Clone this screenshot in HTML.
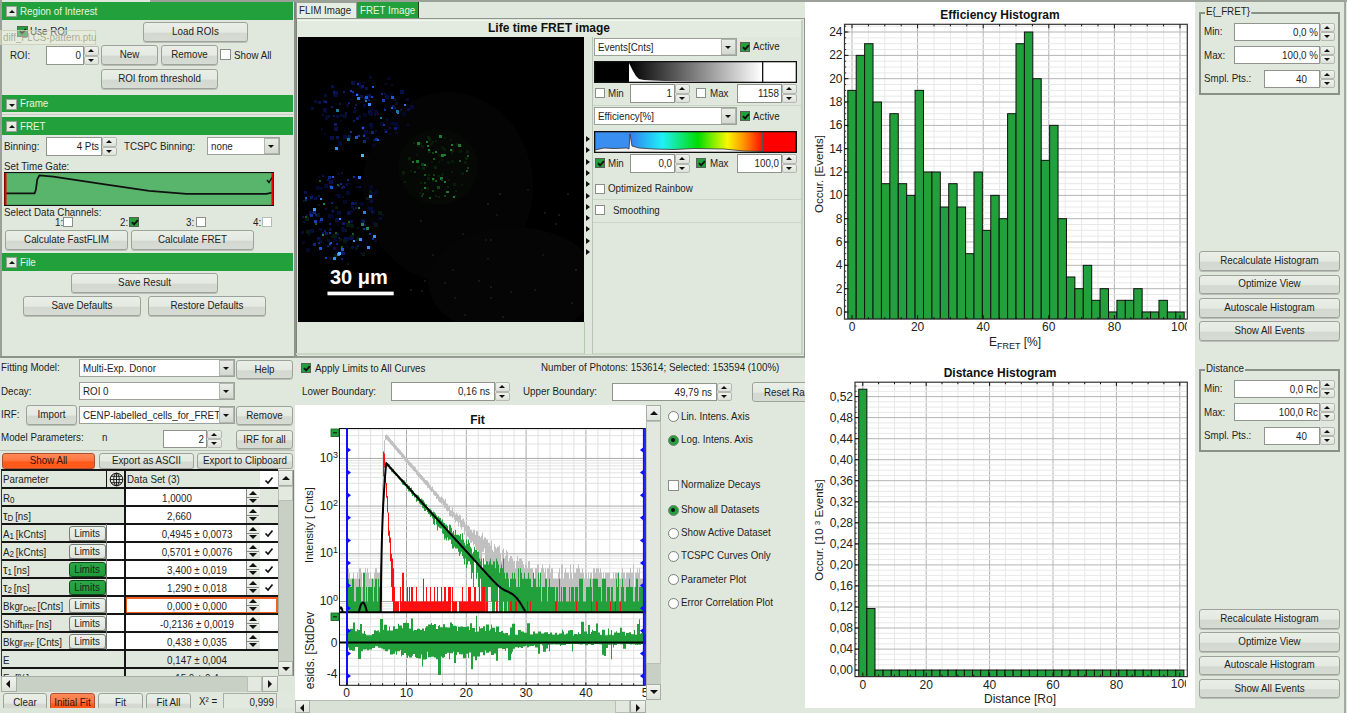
<!DOCTYPE html>
<html><head><meta charset="utf-8"><style>
html,body{margin:0;padding:0;}
body{width:1347px;height:713px;position:relative;overflow:hidden;background:#e0e8dd;font-family:"Liberation Sans", sans-serif;color:#1e1e1e;}
</style></head><body>
<div style="position:absolute;left:0px;top:0px;width:294px;height:358px;background:#e0e8dd;"></div>
<div style="position:absolute;left:0px;top:0px;width:2px;height:358px;background:#9aa098;"></div>
<div style="position:absolute;left:0px;top:356px;width:294px;height:2px;background:#8c928a;"></div>
<div style="position:absolute;left:2px;top:2px;width:291px;height:18px;background:#21a03b;"></div>
<div style="position:absolute;left:6px;top:6px;width:9px;height:9px;background:#e4ebe1;border:1px solid #9aa098;"></div>
<div style="position:absolute;left:8.5px;top:9.5px;width:0;height:0;border-left:3px solid transparent;border-right:3px solid transparent;border-bottom:3px solid #111;"></div>
<div style="position:absolute;left:20px;top:3.50px;height:15px;line-height:15px;font-size:11px;white-space:nowrap;transform-origin:0 0;transform:scaleX(0.89);color:#e8f5e0;">Region of Interest</div>
<div style="position:absolute;left:17px;top:26px;width:11px;height:11px;background:#22a03b;border:1px solid #5a6058;box-sizing:border-box;"><svg width="11" height="11" style="position:absolute;left:0;top:0"><path d="M2.0 4.1 L4.1 6.4 L7.9 2.1" stroke="#111" stroke-width="1.9" fill="none"/></svg></div>
<div style="position:absolute;left:30px;top:24.00px;height:15px;line-height:15px;font-size:11px;white-space:nowrap;transform-origin:0 0;transform:scaleX(0.89);">Use ROI</div>
<div style="position:absolute;left:143px;top:22px;width:103px;height:18px;border:1px solid #9da39b;border-radius:3px;background:linear-gradient(#e9eee7 0%,#e4e9e2 50%,#d3d9d1 58%,#d6dcd4 100%);box-shadow:0 1px 0 #b9bfb7;"></div>
<div style="position:absolute;left:133.00px;top:24.00px;width:125px;text-align:center;height:15px;line-height:15px;font-size:11px;white-space:nowrap;transform-origin:50% 0;transform:scaleX(0.89);color:#1e1e1e;">Load ROIs</div>
<div style="position:absolute;left:10px;top:47.50px;height:15px;line-height:15px;font-size:11px;white-space:nowrap;transform-origin:0 0;transform:scaleX(0.89);">ROI:</div>
<div style="position:absolute;left:46px;top:46px;width:36px;height:17px;border:1px solid #8f958d;background:#fff;"></div>
<div style="position:absolute;left:43.00px;top:48.00px;width:38px;text-align:right;height:15px;line-height:15px;font-size:11px;white-space:nowrap;transform-origin:100% 0;transform:scaleX(0.89);">0</div>
<div style="position:absolute;left:84px;top:46.0px;width:13px;height:7.5px;border:1px solid #b3b9b1;border-radius:2px;background:linear-gradient(#f0f3ee,#dce2da);"></div>
<div style="position:absolute;left:88.0px;top:48.8px;width:0;height:0;border-left:3.5px solid transparent;border-right:3.5px solid transparent;border-bottom:3.5px solid #111;"></div>
<div style="position:absolute;left:84px;top:55.5px;width:13px;height:7.5px;border:1px solid #b3b9b1;border-radius:2px;background:linear-gradient(#f0f3ee,#dce2da);"></div>
<div style="position:absolute;left:88.0px;top:58.8px;width:0;height:0;border-left:3.5px solid transparent;border-right:3.5px solid transparent;border-top:3.5px solid #111;"></div>
<div style="position:absolute;left:101px;top:45px;width:55px;height:18px;border:1px solid #9da39b;border-radius:3px;background:linear-gradient(#e9eee7 0%,#e4e9e2 50%,#d3d9d1 58%,#d6dcd4 100%);box-shadow:0 1px 0 #b9bfb7;"></div>
<div style="position:absolute;left:91.00px;top:47.00px;width:77px;text-align:center;height:15px;line-height:15px;font-size:11px;white-space:nowrap;transform-origin:50% 0;transform:scaleX(0.89);color:#1e1e1e;">New</div>
<div style="position:absolute;left:161px;top:45px;width:55px;height:18px;border:1px solid #9da39b;border-radius:3px;background:linear-gradient(#e9eee7 0%,#e4e9e2 50%,#d3d9d1 58%,#d6dcd4 100%);box-shadow:0 1px 0 #b9bfb7;"></div>
<div style="position:absolute;left:151.00px;top:47.00px;width:77px;text-align:center;height:15px;line-height:15px;font-size:11px;white-space:nowrap;transform-origin:50% 0;transform:scaleX(0.89);color:#1e1e1e;">Remove</div>
<div style="position:absolute;left:220px;top:49px;width:11px;height:11px;background:#fff;border:1px solid #8a9088;box-sizing:border-box;"></div>
<div style="position:absolute;left:234px;top:47.50px;height:15px;line-height:15px;font-size:11px;white-space:nowrap;transform-origin:0 0;transform:scaleX(0.89);">Show All</div>
<div style="position:absolute;left:101px;top:69px;width:115px;height:18px;border:1px solid #9da39b;border-radius:3px;background:linear-gradient(#e9eee7 0%,#e4e9e2 50%,#d3d9d1 58%,#d6dcd4 100%);box-shadow:0 1px 0 #b9bfb7;"></div>
<div style="position:absolute;left:91.00px;top:71.00px;width:137px;text-align:center;height:15px;line-height:15px;font-size:11px;white-space:nowrap;transform-origin:50% 0;transform:scaleX(0.89);color:#1e1e1e;">ROI from threshold</div>
<div style="position:absolute;left:0px;top:30px;width:96px;height:15px;background:rgba(238,240,222,0.4);border:1px solid rgba(205,205,180,0.8);box-sizing:border-box;"></div>
<div style="position:absolute;left:3px;top:30.00px;height:15px;line-height:15px;font-size:11px;white-space:nowrap;transform-origin:0 0;transform:scaleX(0.89);color:rgba(150,150,130,0.75);">diff_FLCS-pattern.ptu</div>
<div style="position:absolute;left:2px;top:95px;width:291px;height:17px;background:#21a03b;"></div>
<div style="position:absolute;left:6px;top:99px;width:9px;height:9px;background:#e4ebe1;border:1px solid #9aa098;"></div>
<div style="position:absolute;left:8.5px;top:103.5px;width:0;height:0;border-left:3px solid transparent;border-right:3px solid transparent;border-top:3px solid #111;"></div>
<div style="position:absolute;left:20px;top:96.00px;height:15px;line-height:15px;font-size:11px;white-space:nowrap;transform-origin:0 0;transform:scaleX(0.89);color:#e8f5e0;">Frame</div>
<div style="position:absolute;left:2px;top:114px;width:291px;height:1px;background:#c8d0c5;"></div>
<div style="position:absolute;left:2px;top:117px;width:291px;height:18px;background:#21a03b;"></div>
<div style="position:absolute;left:6px;top:121px;width:9px;height:9px;background:#e4ebe1;border:1px solid #9aa098;"></div>
<div style="position:absolute;left:8.5px;top:124.5px;width:0;height:0;border-left:3px solid transparent;border-right:3px solid transparent;border-bottom:3px solid #111;"></div>
<div style="position:absolute;left:20px;top:118.50px;height:15px;line-height:15px;font-size:11px;white-space:nowrap;transform-origin:0 0;transform:scaleX(0.89);color:#e8f5e0;">FRET</div>
<div style="position:absolute;left:4px;top:138.50px;height:15px;line-height:15px;font-size:11px;white-space:nowrap;transform-origin:0 0;transform:scaleX(0.89);">Binning:</div>
<div style="position:absolute;left:46px;top:137px;width:54px;height:17px;border:1px solid #8f958d;background:#fff;"></div>
<div style="position:absolute;left:43.00px;top:139.00px;width:56px;text-align:right;height:15px;line-height:15px;font-size:11px;white-space:nowrap;transform-origin:100% 0;transform:scaleX(0.89);">4 Pts</div>
<div style="position:absolute;left:102px;top:137.0px;width:13px;height:7.5px;border:1px solid #b3b9b1;border-radius:2px;background:linear-gradient(#f0f3ee,#dce2da);"></div>
<div style="position:absolute;left:106.0px;top:139.8px;width:0;height:0;border-left:3.5px solid transparent;border-right:3.5px solid transparent;border-bottom:3.5px solid #111;"></div>
<div style="position:absolute;left:102px;top:146.5px;width:13px;height:7.5px;border:1px solid #b3b9b1;border-radius:2px;background:linear-gradient(#f0f3ee,#dce2da);"></div>
<div style="position:absolute;left:106.0px;top:149.8px;width:0;height:0;border-left:3.5px solid transparent;border-right:3.5px solid transparent;border-top:3.5px solid #111;"></div>
<div style="position:absolute;left:124px;top:138.50px;height:15px;line-height:15px;font-size:11px;white-space:nowrap;transform-origin:0 0;transform:scaleX(0.89);">TCSPC Binning:</div>
<div style="position:absolute;left:207px;top:137px;width:71px;height:16px;border:1px solid #9ca29a;background:#fff;"></div>
<div style="position:absolute;left:211px;top:138.50px;height:15px;line-height:15px;font-size:11px;white-space:nowrap;transform-origin:0 0;transform:scaleX(0.89);">none</div>
<div style="position:absolute;left:264px;top:138px;width:13px;height:14px;border:1px solid #b0b6ae;background:linear-gradient(#e8ece6,#d3d9d1);"></div>
<div style="position:absolute;left:268.0px;top:145.0px;width:0;height:0;border-left:3.5px solid transparent;border-right:3.5px solid transparent;border-top:3.5px solid #111;"></div>
<div style="position:absolute;left:4px;top:158.50px;height:15px;line-height:15px;font-size:11px;white-space:nowrap;transform-origin:0 0;transform:scaleX(0.89);">Set Time Gate:</div>
<svg style="position:absolute;left:4px;top:172px" width="270" height="34" viewBox="0 0 270 34"><rect x="0.5" y="0.5" width="269" height="33" fill="#5ab56c" stroke="#111" stroke-width="1.2"/><path d="M1.5 21.4 L30.6 21.4 L31.8 18 L33.3 7.3 L35.4 3.3 L49.3 4.7 L102.6 12.7 L145.2 18.8 L182.5 21.8 L262.5 21.8 L267.8 20.6" stroke="#111" stroke-width="1.7" fill="none"/><rect x="0.5" y="1" width="2" height="32" fill="#e00"/><rect x="267.5" y="1" width="2" height="32" fill="#e00"/><path d="M263 8 L265 10.5 L268 5.5" stroke="#111" stroke-width="1.4" fill="none"/></svg>
<div style="position:absolute;left:4px;top:204.50px;height:15px;line-height:15px;font-size:11px;white-space:nowrap;transform-origin:0 0;transform:scaleX(0.89);">Select Data Channels:</div>
<div style="position:absolute;left:55px;top:214.50px;height:15px;line-height:15px;font-size:11px;white-space:nowrap;transform-origin:0 0;transform:scaleX(0.89);">1:</div>
<div style="position:absolute;left:63px;top:217px;width:10px;height:10px;background:#fff;border:1px solid #8a9088;box-sizing:border-box;"></div>
<div style="position:absolute;left:120px;top:214.50px;height:15px;line-height:15px;font-size:11px;white-space:nowrap;transform-origin:0 0;transform:scaleX(0.89);">2:</div>
<div style="position:absolute;left:129px;top:217px;width:10px;height:10px;background:#22a03b;border:1px solid #5a6058;box-sizing:border-box;"><svg width="10" height="10" style="position:absolute;left:0;top:0"><path d="M2.0 4.1 L4.1 6.4 L7.9 2.1" stroke="#111" stroke-width="1.9" fill="none"/></svg></div>
<div style="position:absolute;left:186px;top:214.50px;height:15px;line-height:15px;font-size:11px;white-space:nowrap;transform-origin:0 0;transform:scaleX(0.89);">3:</div>
<div style="position:absolute;left:196px;top:217px;width:10px;height:10px;background:#fff;border:1px solid #8a9088;box-sizing:border-box;"></div>
<div style="position:absolute;left:253px;top:214.50px;height:15px;line-height:15px;font-size:11px;white-space:nowrap;transform-origin:0 0;transform:scaleX(0.89);">4:</div>
<div style="position:absolute;left:262px;top:217px;width:10px;height:10px;background:#fff;border:1px solid #b8beb6;box-sizing:border-box;"></div>
<div style="position:absolute;left:5px;top:230px;width:121px;height:18px;border:1px solid #9da39b;border-radius:3px;background:linear-gradient(#e9eee7 0%,#e4e9e2 50%,#d3d9d1 58%,#d6dcd4 100%);box-shadow:0 1px 0 #b9bfb7;"></div>
<div style="position:absolute;left:-5.00px;top:232.00px;width:143px;text-align:center;height:15px;line-height:15px;font-size:11px;white-space:nowrap;transform-origin:50% 0;transform:scaleX(0.89);color:#1e1e1e;">Calculate FastFLIM</div>
<div style="position:absolute;left:131px;top:230px;width:121px;height:18px;border:1px solid #9da39b;border-radius:3px;background:linear-gradient(#e9eee7 0%,#e4e9e2 50%,#d3d9d1 58%,#d6dcd4 100%);box-shadow:0 1px 0 #b9bfb7;"></div>
<div style="position:absolute;left:121.00px;top:232.00px;width:143px;text-align:center;height:15px;line-height:15px;font-size:11px;white-space:nowrap;transform-origin:50% 0;transform:scaleX(0.89);color:#1e1e1e;">Calculate FRET</div>
<div style="position:absolute;left:2px;top:253px;width:291px;height:18px;background:#21a03b;"></div>
<div style="position:absolute;left:6px;top:257px;width:9px;height:9px;background:#e4ebe1;border:1px solid #9aa098;"></div>
<div style="position:absolute;left:8.5px;top:260.5px;width:0;height:0;border-left:3px solid transparent;border-right:3px solid transparent;border-bottom:3px solid #111;"></div>
<div style="position:absolute;left:20px;top:254.50px;height:15px;line-height:15px;font-size:11px;white-space:nowrap;transform-origin:0 0;transform:scaleX(0.89);color:#e8f5e0;">File</div>
<div style="position:absolute;left:71px;top:273px;width:145px;height:18px;border:1px solid #9da39b;border-radius:3px;background:linear-gradient(#e9eee7 0%,#e4e9e2 50%,#d3d9d1 58%,#d6dcd4 100%);box-shadow:0 1px 0 #b9bfb7;"></div>
<div style="position:absolute;left:61.00px;top:275.00px;width:167px;text-align:center;height:15px;line-height:15px;font-size:11px;white-space:nowrap;transform-origin:50% 0;transform:scaleX(0.89);color:#1e1e1e;">Save Result</div>
<div style="position:absolute;left:23px;top:296px;width:116px;height:18px;border:1px solid #9da39b;border-radius:3px;background:linear-gradient(#e9eee7 0%,#e4e9e2 50%,#d3d9d1 58%,#d6dcd4 100%);box-shadow:0 1px 0 #b9bfb7;"></div>
<div style="position:absolute;left:13.00px;top:298.00px;width:138px;text-align:center;height:15px;line-height:15px;font-size:11px;white-space:nowrap;transform-origin:50% 0;transform:scaleX(0.89);color:#1e1e1e;">Save Defaults</div>
<div style="position:absolute;left:148px;top:296px;width:116px;height:18px;border:1px solid #9da39b;border-radius:3px;background:linear-gradient(#e9eee7 0%,#e4e9e2 50%,#d3d9d1 58%,#d6dcd4 100%);box-shadow:0 1px 0 #b9bfb7;"></div>
<div style="position:absolute;left:138.00px;top:298.00px;width:138px;text-align:center;height:15px;line-height:15px;font-size:11px;white-space:nowrap;transform-origin:50% 0;transform:scaleX(0.89);color:#1e1e1e;">Restore Defaults</div>
<div style="position:absolute;left:294px;top:0px;width:3px;height:358px;background:#7e847c;"></div>
<div style="position:absolute;left:0px;top:358px;width:294px;height:355px;background:#e0e8dd;"></div>
<div style="position:absolute;left:1px;top:360.00px;height:15px;line-height:15px;font-size:11px;white-space:nowrap;transform-origin:0 0;transform:scaleX(0.89);">Fitting Model:</div>
<div style="position:absolute;left:79px;top:359px;width:154px;height:16px;border:1px solid #9ca29a;background:#fff;"></div>
<div style="position:absolute;left:83px;top:360.50px;height:15px;line-height:15px;font-size:11px;white-space:nowrap;transform-origin:0 0;transform:scaleX(0.89);">Multi-Exp. Donor</div>
<div style="position:absolute;left:219px;top:360px;width:13px;height:14px;border:1px solid #b0b6ae;background:linear-gradient(#e8ece6,#d3d9d1);"></div>
<div style="position:absolute;left:223.0px;top:367.0px;width:0;height:0;border-left:3.5px solid transparent;border-right:3.5px solid transparent;border-top:3.5px solid #111;"></div>
<div style="position:absolute;left:236px;top:360px;width:55px;height:17px;border:1px solid #9da39b;border-radius:3px;background:linear-gradient(#e9eee7 0%,#e4e9e2 50%,#d3d9d1 58%,#d6dcd4 100%);box-shadow:0 1px 0 #b9bfb7;"></div>
<div style="position:absolute;left:226.00px;top:361.50px;width:77px;text-align:center;height:15px;line-height:15px;font-size:11px;white-space:nowrap;transform-origin:50% 0;transform:scaleX(0.89);color:#1e1e1e;">Help</div>
<div style="position:absolute;left:1px;top:383.50px;height:15px;line-height:15px;font-size:11px;white-space:nowrap;transform-origin:0 0;transform:scaleX(0.89);">Decay:</div>
<div style="position:absolute;left:79px;top:382px;width:154px;height:16px;border:1px solid #9ca29a;background:#fff;"></div>
<div style="position:absolute;left:83px;top:383.50px;height:15px;line-height:15px;font-size:11px;white-space:nowrap;transform-origin:0 0;transform:scaleX(0.89);">ROI 0</div>
<div style="position:absolute;left:219px;top:383px;width:13px;height:14px;border:1px solid #b0b6ae;background:linear-gradient(#e8ece6,#d3d9d1);"></div>
<div style="position:absolute;left:223.0px;top:390.0px;width:0;height:0;border-left:3.5px solid transparent;border-right:3.5px solid transparent;border-top:3.5px solid #111;"></div>
<div style="position:absolute;left:1px;top:407.00px;height:15px;line-height:15px;font-size:11px;white-space:nowrap;transform-origin:0 0;transform:scaleX(0.89);">IRF:</div>
<div style="position:absolute;left:26px;top:405px;width:49px;height:18px;border:1px solid #9da39b;border-radius:3px;background:linear-gradient(#e9eee7 0%,#e4e9e2 50%,#d3d9d1 58%,#d6dcd4 100%);box-shadow:0 1px 0 #b9bfb7;"></div>
<div style="position:absolute;left:16.00px;top:407.00px;width:71px;text-align:center;height:15px;line-height:15px;font-size:11px;white-space:nowrap;transform-origin:50% 0;transform:scaleX(0.89);color:#1e1e1e;">Import</div>
<div style="position:absolute;left:79px;top:406px;width:154px;height:16px;border:1px solid #9ca29a;background:#fff;"></div>
<div style="position:absolute;left:83px;top:407.50px;height:15px;line-height:15px;font-size:11px;white-space:nowrap;transform-origin:0 0;transform:scaleX(0.89);">CENP-labelled_cells_for_FRET_</div>
<div style="position:absolute;left:219px;top:407px;width:13px;height:14px;border:1px solid #b0b6ae;background:linear-gradient(#e8ece6,#d3d9d1);"></div>
<div style="position:absolute;left:223.0px;top:414.0px;width:0;height:0;border-left:3.5px solid transparent;border-right:3.5px solid transparent;border-top:3.5px solid #111;"></div>
<div style="position:absolute;left:236px;top:406px;width:55px;height:17px;border:1px solid #9da39b;border-radius:3px;background:linear-gradient(#e9eee7 0%,#e4e9e2 50%,#d3d9d1 58%,#d6dcd4 100%);box-shadow:0 1px 0 #b9bfb7;"></div>
<div style="position:absolute;left:226.00px;top:407.50px;width:77px;text-align:center;height:15px;line-height:15px;font-size:11px;white-space:nowrap;transform-origin:50% 0;transform:scaleX(0.89);color:#1e1e1e;">Remove</div>
<div style="position:absolute;left:1px;top:430.00px;height:15px;line-height:15px;font-size:11px;white-space:nowrap;transform-origin:0 0;transform:scaleX(0.89);">Model Parameters:</div>
<div style="position:absolute;left:102px;top:430.00px;height:15px;line-height:15px;font-size:11px;white-space:nowrap;transform-origin:0 0;transform:scaleX(0.89);">n</div>
<div style="position:absolute;left:163px;top:430px;width:42px;height:16px;border:1px solid #8f958d;background:#fff;"></div>
<div style="position:absolute;left:160.00px;top:431.50px;width:44px;text-align:right;height:15px;line-height:15px;font-size:11px;white-space:nowrap;transform-origin:100% 0;transform:scaleX(0.89);">2</div>
<div style="position:absolute;left:207px;top:430.0px;width:13px;height:7.0px;border:1px solid #b3b9b1;border-radius:2px;background:linear-gradient(#f0f3ee,#dce2da);"></div>
<div style="position:absolute;left:211.0px;top:432.5px;width:0;height:0;border-left:3.5px solid transparent;border-right:3.5px solid transparent;border-bottom:3.5px solid #111;"></div>
<div style="position:absolute;left:207px;top:439.0px;width:13px;height:7.0px;border:1px solid #b3b9b1;border-radius:2px;background:linear-gradient(#f0f3ee,#dce2da);"></div>
<div style="position:absolute;left:211.0px;top:442.0px;width:0;height:0;border-left:3.5px solid transparent;border-right:3.5px solid transparent;border-top:3.5px solid #111;"></div>
<div style="position:absolute;left:236px;top:430px;width:55px;height:17px;border:1px solid #9da39b;border-radius:3px;background:linear-gradient(#e9eee7 0%,#e4e9e2 50%,#d3d9d1 58%,#d6dcd4 100%);box-shadow:0 1px 0 #b9bfb7;"></div>
<div style="position:absolute;left:226.00px;top:431.50px;width:77px;text-align:center;height:15px;line-height:15px;font-size:11px;white-space:nowrap;transform-origin:50% 0;transform:scaleX(0.89);color:#1e1e1e;">IRF for all</div>
<div style="position:absolute;left:0px;top:450px;width:294px;height:1px;background:#b9c0b6;"></div>
<div style="position:absolute;left:2px;top:453px;width:91px;height:14px;border:1px solid #b05030;border-radius:3px;background:linear-gradient(#ff8a5a 0%,#ff7440 50%,#ff5a1a 55%,#ff5a1a 100%);box-shadow:0 1px 0 #b9bfb7;"></div>
<div style="position:absolute;left:-8.00px;top:453.00px;width:113px;text-align:center;height:15px;line-height:15px;font-size:11px;white-space:nowrap;transform-origin:50% 0;transform:scaleX(0.89);color:#3a1000;">Show All</div>
<div style="position:absolute;left:99px;top:453px;width:93px;height:14px;border:1px solid #9da39b;border-radius:3px;background:linear-gradient(#e9eee7 0%,#e4e9e2 50%,#d3d9d1 58%,#d6dcd4 100%);box-shadow:0 1px 0 #b9bfb7;"></div>
<div style="position:absolute;left:89.00px;top:453.00px;width:115px;text-align:center;height:15px;line-height:15px;font-size:11px;white-space:nowrap;transform-origin:50% 0;transform:scaleX(0.89);color:#1e1e1e;">Export as ASCII</div>
<div style="position:absolute;left:197px;top:453px;width:94px;height:14px;border:1px solid #9da39b;border-radius:3px;background:linear-gradient(#e9eee7 0%,#e4e9e2 50%,#d3d9d1 58%,#d6dcd4 100%);box-shadow:0 1px 0 #b9bfb7;"></div>
<div style="position:absolute;left:187.00px;top:453.00px;width:116px;text-align:center;height:15px;line-height:15px;font-size:11px;white-space:nowrap;transform-origin:50% 0;transform:scaleX(0.89);color:#1e1e1e;">Export to Clipboard</div>
<div style="position:absolute;left:0px;top:469px;width:294px;height:244px;background:#e0e8dd;"></div>
<div style="position:absolute;left:0;top:469px;width:278px;height:207px;overflow:hidden;">
<div style="position:absolute;left:1px;top:1px;width:277px;height:18px;background:#e0e8dd;"></div>
<div style="position:absolute;left:3px;top:3.0px;height:15px;line-height:15px;font-size:11px;white-space:nowrap;transform-origin:0 0;transform:scaleX(0.89);">Parameter</div>
<div style="position:absolute;left:260px;top:2px;width:18px;height:16px;background:#fff;"></div>
<svg style="position:absolute;left:109px;top:3px" width="15" height="15" viewBox="0 0 15 15"><circle cx="7.5" cy="7.5" r="6.3" fill="none" stroke="#111" stroke-width="1"/><ellipse cx="7.5" cy="7.5" rx="2.8" ry="6.3" fill="none" stroke="#111" stroke-width="0.9"/><path d="M1.2 7.5 H13.8 M2.2 4.3 H12.8 M2.2 10.7 H12.8 M7.5 1.2 V13.8" stroke="#111" stroke-width="0.9"/></svg>
<div style="position:absolute;left:127px;top:3.0px;height:15px;line-height:15px;font-size:11px;white-space:nowrap;transform-origin:0 0;transform:scaleX(0.89);">Data Set (3)</div>
<svg style="position:absolute;left:264px;top:7px" width="10" height="9"><path d="M1.5 4.5 L4 7 L8.5 1.5" stroke="#111" stroke-width="1.7" fill="none"/></svg>
<div style="position:absolute;left:1px;top:19.0px;width:124px;height:18.0px;background:#e0e8dd;"></div>
<div style="position:absolute;left:125px;top:19.0px;width:135px;height:18.0px;background:#fff;"></div>
<div style="position:absolute;left:260px;top:19.0px;width:18px;height:18.0px;background:#e0e8dd;"></div>
<div style="position:absolute;left:3px;top:21.5px;height:15px;line-height:15px;font-size:11px;white-space:nowrap;transform-origin:0 0;transform:scaleX(0.89);">R<span style="font-size:9px;position:relative;top:1px;margin-right:2px;">0</span></div>
<div style="position:absolute;left:162px;top:21.5px;height:15px;line-height:15px;font-size:11px;white-space:nowrap;transform-origin:0 0;transform:scaleX(0.89);">1,0000</div>
<div style="position:absolute;left:246px;top:20.0px;width:13px;height:16px;background:linear-gradient(#f2f5f0,#dfe5dc);border-left:1px solid #888;"></div>
<div style="position:absolute;left:249px;top:22.0px;width:0;height:0;border-left:4px solid transparent;border-right:4px solid transparent;border-bottom:4px solid #111;"></div>
<div style="position:absolute;left:247px;top:27.5px;width:12px;height:1px;background:#888;"></div>
<div style="position:absolute;left:249px;top:30.0px;width:0;height:0;border-left:4px solid transparent;border-right:4px solid transparent;border-top:4px solid #111;"></div>
<div style="position:absolute;left:1px;top:37.0px;width:124px;height:18.0px;background:#e0e8dd;"></div>
<div style="position:absolute;left:125px;top:37.0px;width:135px;height:18.0px;background:#fff;"></div>
<div style="position:absolute;left:260px;top:37.0px;width:18px;height:18.0px;background:#e0e8dd;"></div>
<div style="position:absolute;left:3px;top:39.5px;height:15px;line-height:15px;font-size:11px;white-space:nowrap;transform-origin:0 0;transform:scaleX(0.89);"><span style="font-size:13px;line-height:10px;">τ</span><span style="font-size:9px;position:relative;top:1px;margin-right:2px;">D</span>[ns]</div>
<div style="position:absolute;left:167px;top:39.5px;height:15px;line-height:15px;font-size:11px;white-space:nowrap;transform-origin:0 0;transform:scaleX(0.89);">2,660</div>
<div style="position:absolute;left:246px;top:38.0px;width:13px;height:16px;background:linear-gradient(#f2f5f0,#dfe5dc);border-left:1px solid #888;"></div>
<div style="position:absolute;left:249px;top:40.0px;width:0;height:0;border-left:4px solid transparent;border-right:4px solid transparent;border-bottom:4px solid #111;"></div>
<div style="position:absolute;left:247px;top:45.5px;width:12px;height:1px;background:#888;"></div>
<div style="position:absolute;left:249px;top:48.0px;width:0;height:0;border-left:4px solid transparent;border-right:4px solid transparent;border-top:4px solid #111;"></div>
<div style="position:absolute;left:1px;top:55.0px;width:106px;height:18.0px;background:#e0e8dd;"></div>
<div style="position:absolute;left:107px;top:55.0px;width:18px;height:18.0px;background:#fff;"></div>
<div style="position:absolute;left:125px;top:55.0px;width:135px;height:18.0px;background:#fff;"></div>
<div style="position:absolute;left:260px;top:55.0px;width:18px;height:18.0px;background:#fff;"></div>
<div style="position:absolute;left:3px;top:57.5px;height:15px;line-height:15px;font-size:11px;white-space:nowrap;transform-origin:0 0;transform:scaleX(0.89);">A<span style="font-size:9px;position:relative;top:1px;margin-right:2px;">1</span>[kCnts]</div>
<div style="position:absolute;left:69px;top:57.0px;width:35px;height:13px;border:1px solid #777d75;border-radius:3px;background:linear-gradient(#eef2ec,#dde3db);box-shadow:0 1px 0 #555;"></div>
<div style="position:absolute;left:67.0px;width:40px;text-align:center;top:56.5px;height:15px;line-height:15px;font-size:11px;white-space:nowrap;transform-origin:50% 0;transform:scaleX(0.89);">Limits</div>
<div style="position:absolute;left:136.5px;width:120px;text-align:center;top:57.5px;height:15px;line-height:15px;font-size:11px;white-space:nowrap;transform-origin:50% 0;transform:scaleX(0.89);">0,4945 ± 0,0073</div>
<div style="position:absolute;left:246px;top:56.0px;width:13px;height:16px;background:linear-gradient(#f2f5f0,#dfe5dc);border-left:1px solid #888;"></div>
<div style="position:absolute;left:249px;top:58.0px;width:0;height:0;border-left:4px solid transparent;border-right:4px solid transparent;border-bottom:4px solid #111;"></div>
<div style="position:absolute;left:247px;top:63.5px;width:12px;height:1px;background:#888;"></div>
<div style="position:absolute;left:249px;top:66.0px;width:0;height:0;border-left:4px solid transparent;border-right:4px solid transparent;border-top:4px solid #111;"></div>
<svg style="position:absolute;left:264px;top:60.0px" width="10" height="9"><path d="M1.5 4.5 L4 7 L8.5 1.5" stroke="#111" stroke-width="1.7" fill="none"/></svg>
<div style="position:absolute;left:1px;top:73.0px;width:106px;height:18.0px;background:#e0e8dd;"></div>
<div style="position:absolute;left:107px;top:73.0px;width:18px;height:18.0px;background:#fff;"></div>
<div style="position:absolute;left:125px;top:73.0px;width:135px;height:18.0px;background:#fff;"></div>
<div style="position:absolute;left:260px;top:73.0px;width:18px;height:18.0px;background:#fff;"></div>
<div style="position:absolute;left:3px;top:75.5px;height:15px;line-height:15px;font-size:11px;white-space:nowrap;transform-origin:0 0;transform:scaleX(0.89);">A<span style="font-size:9px;position:relative;top:1px;margin-right:2px;">2</span>[kCnts]</div>
<div style="position:absolute;left:69px;top:75.0px;width:35px;height:13px;border:1px solid #777d75;border-radius:3px;background:linear-gradient(#eef2ec,#dde3db);box-shadow:0 1px 0 #555;"></div>
<div style="position:absolute;left:67.0px;width:40px;text-align:center;top:74.5px;height:15px;line-height:15px;font-size:11px;white-space:nowrap;transform-origin:50% 0;transform:scaleX(0.89);">Limits</div>
<div style="position:absolute;left:136.5px;width:120px;text-align:center;top:75.5px;height:15px;line-height:15px;font-size:11px;white-space:nowrap;transform-origin:50% 0;transform:scaleX(0.89);">0,5701 ± 0,0076</div>
<div style="position:absolute;left:246px;top:74.0px;width:13px;height:16px;background:linear-gradient(#f2f5f0,#dfe5dc);border-left:1px solid #888;"></div>
<div style="position:absolute;left:249px;top:76.0px;width:0;height:0;border-left:4px solid transparent;border-right:4px solid transparent;border-bottom:4px solid #111;"></div>
<div style="position:absolute;left:247px;top:81.5px;width:12px;height:1px;background:#888;"></div>
<div style="position:absolute;left:249px;top:84.0px;width:0;height:0;border-left:4px solid transparent;border-right:4px solid transparent;border-top:4px solid #111;"></div>
<svg style="position:absolute;left:264px;top:78.0px" width="10" height="9"><path d="M1.5 4.5 L4 7 L8.5 1.5" stroke="#111" stroke-width="1.7" fill="none"/></svg>
<div style="position:absolute;left:1px;top:91.0px;width:106px;height:18.0px;background:#e0e8dd;"></div>
<div style="position:absolute;left:107px;top:91.0px;width:18px;height:18.0px;background:#fff;"></div>
<div style="position:absolute;left:125px;top:91.0px;width:135px;height:18.0px;background:#fff;"></div>
<div style="position:absolute;left:260px;top:91.0px;width:18px;height:18.0px;background:#fff;"></div>
<div style="position:absolute;left:3px;top:93.5px;height:15px;line-height:15px;font-size:11px;white-space:nowrap;transform-origin:0 0;transform:scaleX(0.89);"><span style="font-size:13px;line-height:10px;">τ</span><span style="font-size:9px;position:relative;top:1px;margin-right:2px;">1</span>[ns]</div>
<div style="position:absolute;left:69px;top:93.0px;width:35px;height:13px;border:1px solid #0f4a1c;border-radius:3px;background:linear-gradient(#2aa845,#1f9a38);box-shadow:0 1px 0 #555;"></div>
<div style="position:absolute;left:67.0px;width:40px;text-align:center;top:92.5px;height:15px;line-height:15px;font-size:11px;white-space:nowrap;transform-origin:50% 0;transform:scaleX(0.89);">Limits</div>
<div style="position:absolute;left:136.5px;width:120px;text-align:center;top:93.5px;height:15px;line-height:15px;font-size:11px;white-space:nowrap;transform-origin:50% 0;transform:scaleX(0.89);">3,400 ± 0,019</div>
<div style="position:absolute;left:246px;top:92.0px;width:13px;height:16px;background:linear-gradient(#f2f5f0,#dfe5dc);border-left:1px solid #888;"></div>
<div style="position:absolute;left:249px;top:94.0px;width:0;height:0;border-left:4px solid transparent;border-right:4px solid transparent;border-bottom:4px solid #111;"></div>
<div style="position:absolute;left:247px;top:99.5px;width:12px;height:1px;background:#888;"></div>
<div style="position:absolute;left:249px;top:102.0px;width:0;height:0;border-left:4px solid transparent;border-right:4px solid transparent;border-top:4px solid #111;"></div>
<svg style="position:absolute;left:264px;top:96.0px" width="10" height="9"><path d="M1.5 4.5 L4 7 L8.5 1.5" stroke="#111" stroke-width="1.7" fill="none"/></svg>
<div style="position:absolute;left:1px;top:109.0px;width:106px;height:18.0px;background:#e0e8dd;"></div>
<div style="position:absolute;left:107px;top:109.0px;width:18px;height:18.0px;background:#fff;"></div>
<div style="position:absolute;left:125px;top:109.0px;width:135px;height:18.0px;background:#fff;"></div>
<div style="position:absolute;left:260px;top:109.0px;width:18px;height:18.0px;background:#fff;"></div>
<div style="position:absolute;left:3px;top:111.5px;height:15px;line-height:15px;font-size:11px;white-space:nowrap;transform-origin:0 0;transform:scaleX(0.89);"><span style="font-size:13px;line-height:10px;">τ</span><span style="font-size:9px;position:relative;top:1px;margin-right:2px;">2</span>[ns]</div>
<div style="position:absolute;left:69px;top:111.0px;width:35px;height:13px;border:1px solid #0f4a1c;border-radius:3px;background:linear-gradient(#2aa845,#1f9a38);box-shadow:0 1px 0 #555;"></div>
<div style="position:absolute;left:67.0px;width:40px;text-align:center;top:110.5px;height:15px;line-height:15px;font-size:11px;white-space:nowrap;transform-origin:50% 0;transform:scaleX(0.89);">Limits</div>
<div style="position:absolute;left:136.5px;width:120px;text-align:center;top:111.5px;height:15px;line-height:15px;font-size:11px;white-space:nowrap;transform-origin:50% 0;transform:scaleX(0.89);">1,290 ± 0,018</div>
<div style="position:absolute;left:246px;top:110.0px;width:13px;height:16px;background:linear-gradient(#f2f5f0,#dfe5dc);border-left:1px solid #888;"></div>
<div style="position:absolute;left:249px;top:112.0px;width:0;height:0;border-left:4px solid transparent;border-right:4px solid transparent;border-bottom:4px solid #111;"></div>
<div style="position:absolute;left:247px;top:117.5px;width:12px;height:1px;background:#888;"></div>
<div style="position:absolute;left:249px;top:120.0px;width:0;height:0;border-left:4px solid transparent;border-right:4px solid transparent;border-top:4px solid #111;"></div>
<svg style="position:absolute;left:264px;top:114.0px" width="10" height="9"><path d="M1.5 4.5 L4 7 L8.5 1.5" stroke="#111" stroke-width="1.7" fill="none"/></svg>
<div style="position:absolute;left:1px;top:127.0px;width:106px;height:18.0px;background:#e0e8dd;"></div>
<div style="position:absolute;left:107px;top:127.0px;width:18px;height:18.0px;background:#fff;"></div>
<div style="position:absolute;left:125px;top:127.0px;width:135px;height:18.0px;background:#fff;"></div>
<div style="position:absolute;left:260px;top:127.0px;width:18px;height:18.0px;background:#fff;"></div>
<div style="position:absolute;left:3px;top:129.5px;height:15px;line-height:15px;font-size:11px;white-space:nowrap;transform-origin:0 0;transform:scaleX(0.89);">Bkgr<span style="font-size:8px;position:relative;top:1px;margin-right:2px;">Dec</span>[Cnts]</div>
<div style="position:absolute;left:69px;top:129.0px;width:35px;height:13px;border:1px solid #777d75;border-radius:3px;background:linear-gradient(#eef2ec,#dde3db);box-shadow:0 1px 0 #555;"></div>
<div style="position:absolute;left:67.0px;width:40px;text-align:center;top:128.5px;height:15px;line-height:15px;font-size:11px;white-space:nowrap;transform-origin:50% 0;transform:scaleX(0.89);">Limits</div>
<div style="position:absolute;left:136.5px;width:120px;text-align:center;top:129.5px;height:15px;line-height:15px;font-size:11px;white-space:nowrap;transform-origin:50% 0;transform:scaleX(0.89);">0,000 ± 0,000</div>
<div style="position:absolute;left:246px;top:128.0px;width:13px;height:16px;background:linear-gradient(#f2f5f0,#dfe5dc);border-left:1px solid #888;"></div>
<div style="position:absolute;left:249px;top:130.0px;width:0;height:0;border-left:4px solid transparent;border-right:4px solid transparent;border-bottom:4px solid #111;"></div>
<div style="position:absolute;left:247px;top:135.5px;width:12px;height:1px;background:#888;"></div>
<div style="position:absolute;left:249px;top:138.0px;width:0;height:0;border-left:4px solid transparent;border-right:4px solid transparent;border-top:4px solid #111;"></div>
<div style="position:absolute;left:125px;top:127.5px;width:153px;height:17.0px;border:2px solid #f06020;box-sizing:border-box;"></div>
<div style="position:absolute;left:1px;top:145.0px;width:106px;height:18.0px;background:#e0e8dd;"></div>
<div style="position:absolute;left:107px;top:145.0px;width:18px;height:18.0px;background:#fff;"></div>
<div style="position:absolute;left:125px;top:145.0px;width:135px;height:18.0px;background:#fff;"></div>
<div style="position:absolute;left:260px;top:145.0px;width:18px;height:18.0px;background:#fff;"></div>
<div style="position:absolute;left:3px;top:147.5px;height:15px;line-height:15px;font-size:11px;white-space:nowrap;transform-origin:0 0;transform:scaleX(0.89);">Shift<span style="font-size:8px;position:relative;top:1px;margin-right:2px;">IRF</span>[ns]</div>
<div style="position:absolute;left:69px;top:147.0px;width:35px;height:13px;border:1px solid #777d75;border-radius:3px;background:linear-gradient(#eef2ec,#dde3db);box-shadow:0 1px 0 #555;"></div>
<div style="position:absolute;left:67.0px;width:40px;text-align:center;top:146.5px;height:15px;line-height:15px;font-size:11px;white-space:nowrap;transform-origin:50% 0;transform:scaleX(0.89);">Limits</div>
<div style="position:absolute;left:136.5px;width:120px;text-align:center;top:147.5px;height:15px;line-height:15px;font-size:11px;white-space:nowrap;transform-origin:50% 0;transform:scaleX(0.89);">-0,2136 ± 0,0019</div>
<div style="position:absolute;left:246px;top:146.0px;width:13px;height:16px;background:linear-gradient(#f2f5f0,#dfe5dc);border-left:1px solid #888;"></div>
<div style="position:absolute;left:249px;top:148.0px;width:0;height:0;border-left:4px solid transparent;border-right:4px solid transparent;border-bottom:4px solid #111;"></div>
<div style="position:absolute;left:247px;top:153.5px;width:12px;height:1px;background:#888;"></div>
<div style="position:absolute;left:249px;top:156.0px;width:0;height:0;border-left:4px solid transparent;border-right:4px solid transparent;border-top:4px solid #111;"></div>
<div style="position:absolute;left:1px;top:163.0px;width:106px;height:18.0px;background:#e0e8dd;"></div>
<div style="position:absolute;left:107px;top:163.0px;width:18px;height:18.0px;background:#fff;"></div>
<div style="position:absolute;left:125px;top:163.0px;width:135px;height:18.0px;background:#fff;"></div>
<div style="position:absolute;left:260px;top:163.0px;width:18px;height:18.0px;background:#fff;"></div>
<div style="position:absolute;left:3px;top:165.5px;height:15px;line-height:15px;font-size:11px;white-space:nowrap;transform-origin:0 0;transform:scaleX(0.89);">Bkgr<span style="font-size:8px;position:relative;top:1px;margin-right:2px;">IRF</span>[Cnts]</div>
<div style="position:absolute;left:69px;top:165.0px;width:35px;height:13px;border:1px solid #777d75;border-radius:3px;background:linear-gradient(#eef2ec,#dde3db);box-shadow:0 1px 0 #555;"></div>
<div style="position:absolute;left:67.0px;width:40px;text-align:center;top:164.5px;height:15px;line-height:15px;font-size:11px;white-space:nowrap;transform-origin:50% 0;transform:scaleX(0.89);">Limits</div>
<div style="position:absolute;left:136.5px;width:120px;text-align:center;top:165.5px;height:15px;line-height:15px;font-size:11px;white-space:nowrap;transform-origin:50% 0;transform:scaleX(0.89);">0,438 ± 0,035</div>
<div style="position:absolute;left:246px;top:164.0px;width:13px;height:16px;background:linear-gradient(#f2f5f0,#dfe5dc);border-left:1px solid #888;"></div>
<div style="position:absolute;left:249px;top:166.0px;width:0;height:0;border-left:4px solid transparent;border-right:4px solid transparent;border-bottom:4px solid #111;"></div>
<div style="position:absolute;left:247px;top:171.5px;width:12px;height:1px;background:#888;"></div>
<div style="position:absolute;left:249px;top:174.0px;width:0;height:0;border-left:4px solid transparent;border-right:4px solid transparent;border-top:4px solid #111;"></div>
<div style="position:absolute;left:1px;top:181.0px;width:124px;height:18.0px;background:#e0e8dd;"></div>
<div style="position:absolute;left:125px;top:181.0px;width:153px;height:18.0px;background:#e0e8dd;"></div>
<div style="position:absolute;left:3px;top:183.5px;height:15px;line-height:15px;font-size:11px;white-space:nowrap;transform-origin:0 0;transform:scaleX(0.89);">E</div>
<div style="position:absolute;left:136.5px;width:120px;text-align:center;top:183.5px;height:15px;line-height:15px;font-size:11px;white-space:nowrap;transform-origin:50% 0;transform:scaleX(0.89);">0,147 ± 0,004</div>
<div style="position:absolute;left:1px;top:199.0px;width:124px;height:18.0px;background:#e0e8dd;"></div>
<div style="position:absolute;left:125px;top:199.0px;width:153px;height:18.0px;background:#e0e8dd;"></div>
<div style="position:absolute;left:3px;top:201.5px;height:15px;line-height:15px;font-size:11px;white-space:nowrap;transform-origin:0 0;transform:scaleX(0.89);">E<span style="font-size:8px;position:relative;top:1px;margin-right:2px;">x</span>[%]</div>
<div style="position:absolute;left:136.5px;width:120px;text-align:center;top:201.5px;height:15px;line-height:15px;font-size:11px;white-space:nowrap;transform-origin:50% 0;transform:scaleX(0.89);">15,0 ± 0,4</div>
<div style="position:absolute;left:1px;top:18.0px;width:277px;height:2.0px;background:#151515;"></div>
<div style="position:absolute;left:1px;top:36.0px;width:277px;height:2.0px;background:#151515;"></div>
<div style="position:absolute;left:1px;top:54.0px;width:277px;height:2.0px;background:#151515;"></div>
<div style="position:absolute;left:1px;top:72.0px;width:277px;height:2.0px;background:#151515;"></div>
<div style="position:absolute;left:1px;top:90.0px;width:277px;height:2.0px;background:#151515;"></div>
<div style="position:absolute;left:1px;top:108.0px;width:277px;height:2.0px;background:#151515;"></div>
<div style="position:absolute;left:1px;top:126.0px;width:277px;height:2.0px;background:#151515;"></div>
<div style="position:absolute;left:1px;top:144.0px;width:277px;height:2.0px;background:#151515;"></div>
<div style="position:absolute;left:1px;top:162.0px;width:277px;height:2.0px;background:#151515;"></div>
<div style="position:absolute;left:1px;top:180.0px;width:277px;height:2.0px;background:#151515;"></div>
<div style="position:absolute;left:1px;top:198.0px;width:277px;height:2.0px;background:#151515;"></div>
<div style="position:absolute;left:1px;top:216.0px;width:277px;height:2.0px;background:#151515;"></div>
<div style="position:absolute;left:1px;top:-0.5px;width:277px;height:2.0px;background:#151515;"></div>
<div style="position:absolute;left:0.5px;top:1px;width:1.5px;height:243px;background:#333;"></div>
<div style="position:absolute;left:124px;top:1px;width:2px;height:243px;background:#151515;"></div>
<div style="position:absolute;left:106px;top:1px;width:1px;height:18px;background:#151515;"></div>
<div style="position:absolute;left:106px;top:55.0px;width:1px;height:18.0px;background:#777;"></div>
<div style="position:absolute;left:106px;top:73.0px;width:1px;height:18.0px;background:#777;"></div>
<div style="position:absolute;left:106px;top:91.0px;width:1px;height:18.0px;background:#777;"></div>
<div style="position:absolute;left:106px;top:109.0px;width:1px;height:18.0px;background:#777;"></div>
<div style="position:absolute;left:106px;top:127.0px;width:1px;height:18.0px;background:#777;"></div>
<div style="position:absolute;left:106px;top:145.0px;width:1px;height:18.0px;background:#777;"></div>
<div style="position:absolute;left:106px;top:163.0px;width:1px;height:18.0px;background:#777;"></div>
</div>
<div style="position:absolute;left:278px;top:470px;width:16px;height:206px;background:#c8d0c5;border-left:1px solid #a6ada3;border-right:1px solid #7d837b;box-sizing:border-box;"></div>
<div style="position:absolute;left:278px;top:470px;width:15px;height:16px;background:linear-gradient(#f0f3ee,#dde3db);border:1px solid #a6ada3;box-sizing:border-box;"></div>
<div style="position:absolute;left:281.5px;top:476px;width:0;height:0;border-left:4px solid transparent;border-right:4px solid transparent;border-bottom:4px solid #111;"></div>
<div style="position:absolute;left:278px;top:486px;width:15px;height:15px;background:#e3e9e0;border:1px solid #b8bfb5;box-sizing:border-box;"></div>
<div style="position:absolute;left:278px;top:661px;width:15px;height:15px;background:linear-gradient(#f0f3ee,#dde3db);border:1px solid #a6ada3;box-sizing:border-box;"></div>
<div style="position:absolute;left:281.5px;top:667px;width:0;height:0;border-left:4px solid transparent;border-right:4px solid transparent;border-top:4px solid #111;"></div>
<div style="position:absolute;left:1px;top:676px;width:277px;height:16px;background:#c8d0c5;border-top:1px solid #a6ada3;"></div>
<div style="position:absolute;left:1px;top:676px;width:16px;height:16px;background:linear-gradient(#f0f3ee,#dde3db);border:1px solid #a6ada3;box-sizing:border-box;"></div>
<div style="position:absolute;left:6px;top:680px;width:0;height:0;border-top:4px solid transparent;border-bottom:4px solid transparent;border-right:4px solid #111;"></div>
<div style="position:absolute;left:247px;top:676px;width:15px;height:16px;background:#e3e9e0;border:1px solid #b8bfb5;box-sizing:border-box;"></div>
<div style="position:absolute;left:262px;top:676px;width:16px;height:16px;background:linear-gradient(#f0f3ee,#dde3db);border:1px solid #a6ada3;box-sizing:border-box;"></div>
<div style="position:absolute;left:268px;top:680px;width:0;height:0;border-top:4px solid transparent;border-bottom:4px solid transparent;border-left:4px solid #111;"></div>
<div style="position:absolute;left:278px;top:676px;width:15px;height:16px;background:#dfe6dc;"></div>
<div style="position:absolute;left:0px;top:692px;width:294px;height:21px;background:#e0e8dd;"></div>
<div style="position:absolute;left:3px;top:693px;width:42px;height:18px;border:1px solid #9da39b;border-radius:3px;background:linear-gradient(#e9eee7 0%,#e4e9e2 50%,#d3d9d1 58%,#d6dcd4 100%);box-shadow:0 1px 0 #b9bfb7;"></div>
<div style="position:absolute;left:-7.00px;top:695.00px;width:64px;text-align:center;height:15px;line-height:15px;font-size:11px;white-space:nowrap;transform-origin:50% 0;transform:scaleX(0.89);color:#1e1e1e;">Clear</div>
<div style="position:absolute;left:50px;top:693px;width:43px;height:18px;border:1px solid #b05030;border-radius:3px;background:linear-gradient(#ff8a5a 0%,#ff7440 50%,#ff5a1a 55%,#ff5a1a 100%);box-shadow:0 1px 0 #b9bfb7;"></div>
<div style="position:absolute;left:40.00px;top:695.00px;width:65px;text-align:center;height:15px;line-height:15px;font-size:11px;white-space:nowrap;transform-origin:50% 0;transform:scaleX(0.89);color:#3a1000;">Initial Fit</div>
<div style="position:absolute;left:98px;top:693px;width:43px;height:18px;border:1px solid #9da39b;border-radius:3px;background:linear-gradient(#e9eee7 0%,#e4e9e2 50%,#d3d9d1 58%,#d6dcd4 100%);box-shadow:0 1px 0 #b9bfb7;"></div>
<div style="position:absolute;left:88.00px;top:695.00px;width:65px;text-align:center;height:15px;line-height:15px;font-size:11px;white-space:nowrap;transform-origin:50% 0;transform:scaleX(0.89);color:#1e1e1e;">Fit</div>
<div style="position:absolute;left:146px;top:693px;width:43px;height:18px;border:1px solid #9da39b;border-radius:3px;background:linear-gradient(#e9eee7 0%,#e4e9e2 50%,#d3d9d1 58%,#d6dcd4 100%);box-shadow:0 1px 0 #b9bfb7;"></div>
<div style="position:absolute;left:136.00px;top:695.00px;width:65px;text-align:center;height:15px;line-height:15px;font-size:11px;white-space:nowrap;transform-origin:50% 0;transform:scaleX(0.89);color:#1e1e1e;">Fit All</div>
<div style="position:absolute;left:199px;top:694.00px;height:15px;line-height:15px;font-size:11px;white-space:nowrap;transform-origin:0 0;transform:scaleX(0.89);">X² =</div>
<div style="position:absolute;left:223px;top:693px;width:54px;height:20px;background:#e2e9df;border:1px solid #a7ada5;border-bottom:none;box-sizing:border-box;"></div>
<div style="position:absolute;left:214.00px;top:694.50px;width:60px;text-align:right;height:15px;line-height:15px;font-size:11px;white-space:nowrap;transform-origin:100% 0;transform:scaleX(0.89);">0,999</div>
<div style="position:absolute;left:0px;top:708px;width:294px;height:5px;background:#dde5da;"></div>
<div style="position:absolute;left:150px;top:0px;width:1197px;height:2px;background:#9ba199;"></div>
<div style="position:absolute;left:297px;top:0px;width:509px;height:358px;background:#e0e8dd;"></div>
<div style="position:absolute;left:296px;top:2px;width:59px;height:15px;background:#e6ede3;border:1px solid #9aa098;border-bottom:none;"></div>
<div style="position:absolute;left:299px;top:3.00px;height:15px;line-height:15px;font-size:11px;white-space:nowrap;transform-origin:0 0;transform:scaleX(0.89);color:#1e1e1e;">FLIM Image</div>
<div style="position:absolute;left:357px;top:2px;width:61px;height:16px;background:#21a03b;border-right:1px solid #2a3a2a;"></div>
<div style="position:absolute;left:360px;top:2.50px;height:15px;line-height:15px;font-size:11px;white-space:nowrap;transform-origin:0 0;transform:scaleX(0.89);color:#e8f5e0;">FRET Image</div>
<div style="position:absolute;left:296px;top:18px;width:510px;height:1px;background:#8f958d;"></div>
<div style="position:absolute;left:294px;top:19px;width:2px;height:339px;background:#8f958d;"></div>
<div style="position:absolute;left:804px;top:19px;width:2px;height:339px;background:#8f958d;"></div>
<div style="position:absolute;left:294px;top:356px;width:512px;height:2px;background:#8f958d;"></div>
<div style="position:absolute;left:296px;top:353px;width:508px;height:2px;background:#c9d6c4;"></div>
<div style="position:absolute;left:297px;top:20px;width:505px;height:16px;background:#e3ebe0;border-top:1px solid #f4f8f2;"></div>
<div style="position:absolute;left:399.00px;top:20.00px;width:300px;text-align:center;height:16px;line-height:16px;font-size:12px;white-space:nowrap;transform-origin:50% 0;font-weight:bold;color:#111;">Life time FRET image</div>
<div style="position:absolute;left:801px;top:20px;width:2px;height:334px;background:#c5cfc2;"></div>
<svg style="position:absolute;left:298px;top:37px" width="286" height="285" viewBox="0 0 286 285"><rect width="286" height="285" fill="#000"/><ellipse cx="150" cy="150" rx="85" ry="95" fill="#040404"/><ellipse cx="215" cy="245" rx="85" ry="55" fill="#050505"/><ellipse cx="140" cy="130" rx="40" ry="38" fill="#060806"/><rect x="27" y="80" width="3" height="3" fill="#040828"/><rect x="25" y="71" width="4" height="4" fill="#060c3a"/><rect x="24" y="77" width="2" height="2" fill="#060c3a"/><rect x="45" y="77" width="4" height="4" fill="#050a30"/><rect x="112" y="68" width="4" height="4" fill="#060c3a"/><rect x="99" y="75" width="2" height="2" fill="#050a30"/><rect x="72" y="89" width="3" height="3" fill="#050a30"/><rect x="45" y="98" width="4" height="4" fill="#060c3a"/><rect x="66" y="93" width="4" height="4" fill="#050a30"/><rect x="98" y="88" width="4" height="4" fill="#040828"/><rect x="109" y="71" width="3" height="3" fill="#081048"/><rect x="65" y="45" width="2" height="2" fill="#050a30"/><rect x="48" y="67" width="3" height="3" fill="#050a30"/><rect x="26" y="96" width="2" height="2" fill="#050a30"/><rect x="75" y="107" width="3" height="3" fill="#040828"/><rect x="94" y="69" width="4" height="4" fill="#050a30"/><rect x="33" y="48" width="3" height="3" fill="#081048"/><rect x="88" y="83" width="2" height="2" fill="#040828"/><rect x="91" y="96" width="2" height="2" fill="#050a30"/><rect x="29" y="78" width="3" height="3" fill="#060c3a"/><rect x="13" y="70" width="3" height="3" fill="#060c3a"/><rect x="52" y="62" width="2" height="2" fill="#040828"/><rect x="109" y="72" width="2" height="2" fill="#081048"/><rect x="71" y="95" width="2" height="2" fill="#050a30"/><rect x="86" y="71" width="2" height="2" fill="#081048"/><rect x="67" y="50" width="3" height="3" fill="#081048"/><rect x="76" y="77" width="2" height="2" fill="#060c3a"/><rect x="38" y="58" width="2" height="2" fill="#040828"/><rect x="97" y="65" width="3" height="3" fill="#060c3a"/><rect x="71" y="86" width="4" height="4" fill="#060c3a"/><rect x="63" y="89" width="4" height="4" fill="#060c3a"/><rect x="108" y="61" width="3" height="3" fill="#050a30"/><rect x="79" y="76" width="2" height="2" fill="#081048"/><rect x="61" y="48" width="4" height="4" fill="#040828"/><rect x="27" y="74" width="2" height="2" fill="#050a30"/><rect x="68" y="100" width="3" height="3" fill="#050a30"/><rect x="74" y="107" width="2" height="2" fill="#050a30"/><rect x="59" y="97" width="2" height="2" fill="#050a30"/><rect x="77" y="93" width="2" height="2" fill="#060c3a"/><rect x="32" y="99" width="4" height="4" fill="#081048"/><rect x="59" y="45" width="4" height="4" fill="#060c3a"/><rect x="70" y="73" width="4" height="4" fill="#081048"/><rect x="60" y="78" width="3" height="3" fill="#050a30"/><rect x="88" y="81" width="2" height="2" fill="#060c3a"/><rect x="96" y="85" width="4" height="4" fill="#050a30"/><rect x="62" y="58" width="3" height="3" fill="#081048"/><rect x="93" y="85" width="3" height="3" fill="#050a30"/><rect x="71" y="70" width="4" height="4" fill="#040828"/><rect x="104" y="75" width="4" height="4" fill="#040828"/><rect x="76" y="73" width="4" height="4" fill="#050a30"/><rect x="82" y="85" width="4" height="4" fill="#040828"/><rect x="40" y="104" width="3" height="3" fill="#040828"/><rect x="27" y="79" width="3" height="3" fill="#050a30"/><rect x="35" y="56" width="4" height="4" fill="#060c3a"/><rect x="97" y="94" width="3" height="3" fill="#040828"/><rect x="87" y="58" width="4" height="4" fill="#060c3a"/><rect x="36" y="54" width="4" height="4" fill="#081048"/><rect x="95" y="61" width="3" height="3" fill="#060c3a"/><rect x="42" y="83" width="2" height="2" fill="#040828"/><rect x="86" y="56" width="2" height="2" fill="#081048"/><rect x="86" y="92" width="4" height="4" fill="#050a30"/><rect x="109" y="87" width="2" height="2" fill="#060c3a"/><rect x="38" y="78" width="3" height="3" fill="#060c3a"/><rect x="36" y="90" width="4" height="4" fill="#081048"/><rect x="89" y="40" width="3" height="3" fill="#040828"/><rect x="71" y="75" width="4" height="4" fill="#050a30"/><rect x="53" y="44" width="4" height="4" fill="#081048"/><rect x="65" y="67" width="3" height="3" fill="#060c3a"/><rect x="55" y="74" width="2" height="2" fill="#081048"/><rect x="71" y="39" width="3" height="3" fill="#050a30"/><rect x="91" y="90" width="2" height="2" fill="#081048"/><rect x="54" y="56" width="3" height="3" fill="#040828"/><rect x="65" y="76" width="4" height="4" fill="#040828"/><rect x="58" y="56" width="3" height="3" fill="#081048"/><rect x="16" y="63" width="3" height="3" fill="#060c3a"/><rect x="87" y="46" width="2" height="2" fill="#060c3a"/><rect x="23" y="91" width="2" height="2" fill="#040828"/><rect x="42" y="77" width="3" height="3" fill="#050a30"/><rect x="25" y="63" width="3" height="3" fill="#081048"/><rect x="40" y="105" width="4" height="4" fill="#050a30"/><rect x="93" y="47" width="2" height="2" fill="#050a30"/><rect x="65" y="96" width="3" height="3" fill="#050a30"/><rect x="20" y="64" width="3" height="3" fill="#081048"/><rect x="102" y="53" width="4" height="4" fill="#081048"/><rect x="92" y="85" width="3" height="3" fill="#040828"/><rect x="55" y="73" width="3" height="3" fill="#050a30"/><rect x="69" y="57" width="4" height="4" fill="#081048"/><rect x="67" y="58" width="4" height="4" fill="#060c3a"/><rect x="92" y="56" width="3" height="3" fill="#040828"/><rect x="26" y="57" width="3" height="3" fill="#060c3a"/><rect x="18" y="176" width="4" height="4" fill="#061a10"/><rect x="57" y="210" width="3" height="3" fill="#061a10"/><rect x="31" y="207" width="2" height="2" fill="#061a10"/><rect x="35" y="197" width="4" height="4" fill="#061a10"/><rect x="37" y="214" width="4" height="4" fill="#040828"/><rect x="43" y="182" width="2" height="2" fill="#040828"/><rect x="32" y="178" width="4" height="4" fill="#040828"/><rect x="51" y="146" width="2" height="2" fill="#040828"/><rect x="37" y="169" width="3" height="3" fill="#061a10"/><rect x="4" y="204" width="3" height="3" fill="#040828"/><rect x="42" y="214" width="3" height="3" fill="#081048"/><rect x="76" y="153" width="4" height="4" fill="#040828"/><rect x="33" y="199" width="2" height="2" fill="#061a10"/><rect x="55" y="172" width="2" height="2" fill="#050a30"/><rect x="48" y="201" width="3" height="3" fill="#081048"/><rect x="37" y="157" width="2" height="2" fill="#040828"/><rect x="7" y="180" width="4" height="4" fill="#061a10"/><rect x="41" y="201" width="3" height="3" fill="#061a10"/><rect x="76" y="186" width="4" height="4" fill="#061a10"/><rect x="52" y="198" width="4" height="4" fill="#061a10"/><rect x="45" y="202" width="4" height="4" fill="#061a10"/><rect x="27" y="171" width="2" height="2" fill="#081048"/><rect x="31" y="205" width="2" height="2" fill="#060c3a"/><rect x="44" y="159" width="2" height="2" fill="#050a30"/><rect x="53" y="169" width="3" height="3" fill="#050a30"/><rect x="19" y="200" width="4" height="4" fill="#040828"/><rect x="45" y="163" width="4" height="4" fill="#040828"/><rect x="39" y="174" width="4" height="4" fill="#060c3a"/><rect x="24" y="138" width="2" height="2" fill="#081048"/><rect x="31" y="143" width="4" height="4" fill="#081048"/><rect x="81" y="180" width="3" height="3" fill="#050a30"/><rect x="48" y="186" width="4" height="4" fill="#061a10"/><rect x="8" y="177" width="2" height="2" fill="#060c3a"/><rect x="49" y="200" width="3" height="3" fill="#060c3a"/><rect x="53" y="173" width="2" height="2" fill="#050a30"/><rect x="70" y="170" width="3" height="3" fill="#050a30"/><rect x="19" y="200" width="3" height="3" fill="#081048"/><rect x="48" y="208" width="2" height="2" fill="#050a30"/><rect x="53" y="209" width="3" height="3" fill="#081048"/><rect x="71" y="162" width="4" height="4" fill="#050a30"/><rect x="48" y="154" width="4" height="4" fill="#050a30"/><rect x="71" y="148" width="4" height="4" fill="#040828"/><rect x="16" y="160" width="3" height="3" fill="#081048"/><rect x="38" y="196" width="3" height="3" fill="#060c3a"/><rect x="58" y="200" width="4" height="4" fill="#061a10"/><rect x="21" y="203" width="3" height="3" fill="#060c3a"/><rect x="46" y="200" width="3" height="3" fill="#081048"/><rect x="37" y="181" width="4" height="4" fill="#081048"/><rect x="49" y="174" width="4" height="4" fill="#081048"/><rect x="35" y="201" width="4" height="4" fill="#040828"/><rect x="46" y="192" width="3" height="3" fill="#061a10"/><rect x="18" y="149" width="4" height="4" fill="#040828"/><rect x="75" y="185" width="3" height="3" fill="#060c3a"/><rect x="12" y="192" width="4" height="4" fill="#060c3a"/><rect x="31" y="191" width="3" height="3" fill="#081048"/><rect x="68" y="160" width="3" height="3" fill="#061a10"/><rect x="73" y="173" width="4" height="4" fill="#050a30"/><rect x="8" y="193" width="4" height="4" fill="#061a10"/><rect x="20" y="139" width="2" height="2" fill="#040828"/><rect x="8" y="211" width="4" height="4" fill="#040828"/><rect x="33" y="173" width="3" height="3" fill="#040828"/><rect x="35" y="210" width="3" height="3" fill="#081048"/><rect x="11" y="174" width="4" height="4" fill="#081048"/><rect x="73" y="163" width="2" height="2" fill="#081048"/><rect x="63" y="182" width="4" height="4" fill="#050a30"/><rect x="62" y="215" width="2" height="2" fill="#040828"/><rect x="71" y="155" width="4" height="4" fill="#050a30"/><rect x="84" y="177" width="2" height="2" fill="#050a30"/><rect x="14" y="194" width="2" height="2" fill="#060c3a"/><rect x="-1" y="173" width="2" height="2" fill="#040828"/><rect x="80" y="174" width="4" height="4" fill="#061a10"/><rect x="67" y="205" width="2" height="2" fill="#040828"/><rect x="44" y="190" width="2" height="2" fill="#061a10"/><rect x="62" y="202" width="3" height="3" fill="#040828"/><rect x="13" y="157" width="3" height="3" fill="#040828"/><rect x="47" y="146" width="3" height="3" fill="#060c3a"/><rect x="39" y="157" width="4" height="4" fill="#050a30"/><rect x="71" y="153" width="3" height="3" fill="#061a10"/><rect x="36" y="217" width="4" height="4" fill="#061a10"/><rect x="12" y="159" width="2" height="2" fill="#060c3a"/><rect x="71" y="170" width="4" height="4" fill="#060c3a"/><rect x="52" y="183" width="3" height="3" fill="#081048"/><rect x="10" y="197" width="2" height="2" fill="#050a30"/><rect x="30" y="177" width="4" height="4" fill="#050a30"/><rect x="52" y="200" width="3" height="3" fill="#081048"/><rect x="21" y="183" width="3" height="3" fill="#081048"/><rect x="40" y="136" width="2" height="2" fill="#050a30"/><rect x="3" y="194" width="3" height="3" fill="#060c3a"/><rect x="21" y="191" width="3" height="3" fill="#060c3a"/><rect x="64" y="216" width="3" height="3" fill="#061a10"/><rect x="31" y="220" width="3" height="3" fill="#060c3a"/><rect x="22" y="150" width="3" height="3" fill="#040828"/><rect x="52" y="187" width="4" height="4" fill="#061a10"/><rect x="5" y="184" width="2" height="2" fill="#081048"/><rect x="59" y="190" width="2" height="2" fill="#061a10"/><rect x="31" y="148" width="3" height="3" fill="#081048"/><rect x="56" y="165" width="3" height="3" fill="#081048"/><rect x="62" y="165" width="4" height="4" fill="#040828"/><rect x="6" y="154" width="3" height="3" fill="#081048"/><rect x="-2" y="171" width="3" height="3" fill="#040828"/><rect x="49" y="226" width="2" height="2" fill="#061a10"/><rect x="76" y="202" width="3" height="3" fill="#050a30"/><rect x="26" y="147" width="4" height="4" fill="#060c3a"/><rect x="5" y="163" width="2" height="2" fill="#061a10"/><rect x="58" y="149" width="2" height="2" fill="#060c3a"/><rect x="43" y="135" width="2" height="2" fill="#081048"/><rect x="43" y="191" width="4" height="4" fill="#060c3a"/><rect x="39" y="187" width="2" height="2" fill="#040828"/><rect x="20" y="167" width="2" height="2" fill="#061a10"/><rect x="29" y="202" width="3" height="3" fill="#050a30"/><rect x="163" y="147" width="2" height="2" fill="#061a08"/><rect x="137" y="103" width="2" height="2" fill="#061a08"/><rect x="104" y="134" width="3" height="3" fill="#082208"/><rect x="122" y="145" width="2" height="2" fill="#082208"/><rect x="112" y="133" width="2" height="2" fill="#0a1a0a"/><rect x="129" y="99" width="3" height="3" fill="#082208"/><rect x="158" y="106" width="3" height="3" fill="#061a08"/><rect x="166" y="124" width="3" height="3" fill="#0a1a0a"/><rect x="130" y="101" width="3" height="3" fill="#082208"/><rect x="153" y="123" width="3" height="3" fill="#061a08"/><rect x="130" y="113" width="3" height="3" fill="#082208"/><rect x="119" y="129" width="3" height="3" fill="#061a08"/><rect x="134" y="143" width="2" height="2" fill="#0a1a0a"/><rect x="140" y="117" width="3" height="3" fill="#061a08"/><rect x="163" y="135" width="3" height="3" fill="#061a08"/><rect x="150" y="142" width="2" height="2" fill="#061a08"/><rect x="118" y="117" width="2" height="2" fill="#0a1a0a"/><rect x="106" y="144" width="2" height="2" fill="#082208"/><rect x="168" y="113" width="3" height="3" fill="#0a1a0a"/><rect x="153" y="112" width="3" height="3" fill="#082208"/><rect x="121" y="105" width="3" height="3" fill="#061a08"/><rect x="153" y="115" width="2" height="2" fill="#061a08"/><rect x="145" y="111" width="3" height="3" fill="#0a1a0a"/><rect x="140" y="124" width="2" height="2" fill="#061a08"/><rect x="162" y="108" width="2" height="2" fill="#082208"/><rect x="132" y="105" width="3" height="3" fill="#061a08"/><rect x="149" y="149" width="2" height="2" fill="#082208"/><rect x="115" y="105" width="2" height="2" fill="#082208"/><rect x="156" y="158" width="2" height="2" fill="#061a08"/><rect x="152" y="102" width="2" height="2" fill="#061a08"/><rect x="121" y="155" width="2" height="2" fill="#0a1a0a"/><rect x="161" y="113" width="3" height="3" fill="#061a08"/><rect x="153" y="134" width="2" height="2" fill="#061a08"/><rect x="143" y="109" width="3" height="3" fill="#061a08"/><rect x="124" y="130" width="3" height="3" fill="#082208"/><rect x="134" y="141" width="3" height="3" fill="#082208"/><rect x="133" y="124" width="2" height="2" fill="#061a08"/><rect x="156" y="146" width="2" height="2" fill="#082208"/><rect x="136" y="129" width="3" height="3" fill="#082208"/><rect x="140" y="159" width="2" height="2" fill="#082208"/><rect x="158" y="106" width="2" height="2" fill="#0a1a0a"/><rect x="149" y="124" width="3" height="3" fill="#0a1a0a"/><rect x="167" y="120" width="3" height="3" fill="#082208"/><rect x="128" y="128" width="2" height="2" fill="#061a08"/><rect x="129" y="140" width="3" height="3" fill="#082208"/><rect x="110" y="120" width="3" height="3" fill="#082208"/><rect x="143" y="122" width="2" height="2" fill="#061a08"/><rect x="157" y="153" width="2" height="2" fill="#061a08"/><rect x="140" y="138" width="2" height="2" fill="#082208"/><rect x="143" y="136" width="3" height="3" fill="#061a08"/><rect x="130" y="137" width="2" height="2" fill="#082208"/><rect x="119" y="107" width="3" height="3" fill="#0a1a0a"/><rect x="104" y="136" width="2" height="2" fill="#0a1a0a"/><rect x="134" y="104" width="2" height="2" fill="#082208"/><rect x="123" y="108" width="3" height="3" fill="#061a08"/><rect x="128" y="150" width="3" height="3" fill="#0a1a0a"/><rect x="155" y="146" width="3" height="3" fill="#0a1a0a"/><rect x="146" y="100" width="2" height="2" fill="#0a1a0a"/><rect x="137" y="158" width="2" height="2" fill="#082208"/><rect x="123" y="152" width="2" height="2" fill="#061a08"/><rect x="96" y="70" width="2" height="2" fill="#081850"/><rect x="56" y="70" width="2" height="2" fill="#081850"/><rect x="66" y="60" width="3" height="3" fill="#0a1a60"/><rect x="54" y="54" width="2" height="2" fill="#10309a"/><rect x="47" y="75" width="2" height="2" fill="#081850"/><rect x="65" y="98" width="2" height="2" fill="#1540b8"/><rect x="41" y="66" width="2" height="2" fill="#081850"/><rect x="50" y="65" width="2" height="2" fill="#0a1c70"/><rect x="52" y="53" width="2" height="2" fill="#1540b8"/><rect x="73" y="59" width="2" height="2" fill="#1540b8"/><rect x="35" y="78" width="2" height="2" fill="#081850"/><rect x="50" y="98" width="3" height="3" fill="#081850"/><rect x="35" y="54" width="2" height="2" fill="#0a1c70"/><rect x="73" y="94" width="3" height="3" fill="#0c2488"/><rect x="85" y="87" width="2" height="2" fill="#10309a"/><rect x="60" y="98" width="2" height="2" fill="#10309a"/><rect x="57" y="67" width="2" height="2" fill="#081850"/><rect x="36" y="86" width="3" height="3" fill="#0a1c70"/><rect x="38" y="99" width="3" height="3" fill="#081850"/><rect x="63" y="48" width="3" height="3" fill="#0a1a60"/><rect x="70" y="62" width="2" height="2" fill="#0a1c70"/><rect x="33" y="69" width="2" height="2" fill="#0a1c70"/><rect x="84" y="62" width="3" height="3" fill="#1540b8"/><rect x="59" y="46" width="2" height="2" fill="#10309a"/><rect x="65" y="103" width="3" height="3" fill="#0c2488"/><rect x="94" y="68" width="2" height="2" fill="#0a1c70"/><rect x="27" y="64" width="2" height="2" fill="#0c2488"/><rect x="102" y="72" width="2" height="2" fill="#081850"/><rect x="83" y="56" width="2" height="2" fill="#0c2488"/><rect x="45" y="54" width="2" height="2" fill="#0a1c70"/><rect x="96" y="90" width="3" height="3" fill="#0a1c70"/><rect x="86" y="72" width="2" height="2" fill="#10309a"/><rect x="58" y="80" width="3" height="3" fill="#0a1a60"/><rect x="87" y="94" width="2" height="2" fill="#0c2488"/><rect x="52" y="94" width="2" height="2" fill="#10309a"/><rect x="55" y="83" width="2" height="2" fill="#0a1a60"/><rect x="75" y="102" width="2" height="2" fill="#081850"/><rect x="77" y="101" width="3" height="3" fill="#10309a"/><rect x="99" y="75" width="2" height="2" fill="#2a70f0"/><rect x="79" y="102" width="2" height="2" fill="#1a5ad8"/><rect x="49" y="101" width="3" height="3" fill="#1a7a9a"/><rect x="59" y="60" width="3" height="3" fill="#2a80ff"/><rect x="82" y="80" width="2" height="2" fill="#1a7a9a"/><rect x="58" y="57" width="2" height="2" fill="#2a70f0"/><rect x="38" y="72" width="3" height="3" fill="#1a7a9a"/><rect x="74" y="49" width="2" height="2" fill="#1a5ad8"/><rect x="106" y="67" width="2" height="2" fill="#2a70f0"/><rect x="57" y="99" width="3" height="3" fill="#1a5ad8"/><rect x="93" y="70" width="2" height="2" fill="#1a5ad8"/><rect x="98" y="73" width="3" height="3" fill="#1a7a9a"/><rect x="67" y="63" width="2" height="2" fill="#1a7a9a"/><rect x="64" y="90" width="2" height="2" fill="#1a5ad8"/><rect x="67" y="59" width="3" height="3" fill="#1a5ad8"/><rect x="93" y="59" width="3" height="3" fill="#1a5ad8"/><rect x="50" y="184" width="2" height="2" fill="#145a20"/><rect x="29" y="208" width="2" height="2" fill="#0a1c70"/><rect x="4" y="179" width="2" height="2" fill="#081850"/><rect x="12" y="159" width="3" height="3" fill="#0a1c70"/><rect x="43" y="209" width="2" height="2" fill="#145a20"/><rect x="49" y="142" width="2" height="2" fill="#0c2488"/><rect x="22" y="181" width="3" height="3" fill="#1540b8"/><rect x="40" y="200" width="2" height="2" fill="#081850"/><rect x="7" y="162" width="2" height="2" fill="#0c2488"/><rect x="44" y="185" width="3" height="3" fill="#0a1a60"/><rect x="7" y="179" width="2" height="2" fill="#145a20"/><rect x="75" y="198" width="2" height="2" fill="#1540b8"/><rect x="34" y="173" width="2" height="2" fill="#0a1a60"/><rect x="29" y="142" width="2" height="2" fill="#081850"/><rect x="44" y="149" width="2" height="2" fill="#081850"/><rect x="27" y="195" width="3" height="3" fill="#0a1a60"/><rect x="65" y="191" width="2" height="2" fill="#10309a"/><rect x="30" y="139" width="3" height="3" fill="#0c2488"/><rect x="42" y="146" width="2" height="2" fill="#0c2488"/><rect x="40" y="148" width="2" height="2" fill="#0a1c70"/><rect x="43" y="221" width="2" height="2" fill="#0c2488"/><rect x="24" y="195" width="2" height="2" fill="#0a1a60"/><rect x="73" y="174" width="2" height="2" fill="#081850"/><rect x="37" y="195" width="2" height="2" fill="#145a20"/><rect x="31" y="186" width="2" height="2" fill="#0c2488"/><rect x="27" y="220" width="2" height="2" fill="#1540b8"/><rect x="66" y="187" width="2" height="2" fill="#081850"/><rect x="39" y="147" width="2" height="2" fill="#145a20"/><rect x="17" y="186" width="2" height="2" fill="#145a20"/><rect x="15" y="206" width="3" height="3" fill="#0c2488"/><rect x="31" y="195" width="2" height="2" fill="#1540b8"/><rect x="16" y="183" width="3" height="3" fill="#1540b8"/><rect x="43" y="150" width="2" height="2" fill="#0a1a60"/><rect x="53" y="165" width="3" height="3" fill="#0a1a60"/><rect x="71" y="196" width="2" height="2" fill="#10309a"/><rect x="20" y="158" width="2" height="2" fill="#081850"/><rect x="11" y="177" width="2" height="2" fill="#081850"/><rect x="38" y="206" width="2" height="2" fill="#0c2488"/><rect x="54" y="196" width="2" height="2" fill="#145a20"/><rect x="64" y="183" width="3" height="3" fill="#0a1a60"/><rect x="74" y="201" width="2" height="2" fill="#10309a"/><rect x="45" y="149" width="2" height="2" fill="#0a1c70"/><rect x="26" y="193" width="2" height="2" fill="#0a1c70"/><rect x="59" y="208" width="2" height="2" fill="#0a1c70"/><rect x="31" y="206" width="2" height="2" fill="#1540b8"/><rect x="12" y="177" width="3" height="3" fill="#10309a"/><rect x="33" y="165" width="2" height="2" fill="#0c2488"/><rect x="15" y="174" width="3" height="3" fill="#0c2488"/><rect x="17" y="177" width="2" height="2" fill="#0a1c70"/><rect x="20" y="205" width="2" height="2" fill="#0c2488"/><rect x="61" y="149" width="2" height="2" fill="#0a1a60"/><rect x="55" y="139" width="2" height="2" fill="#10309a"/><rect x="57" y="170" width="2" height="2" fill="#081850"/><rect x="21" y="143" width="2" height="2" fill="#145a20"/><rect x="44" y="215" width="3" height="3" fill="#0a1c70"/><rect x="61" y="201" width="3" height="3" fill="#3a90ff"/><rect x="60" y="170" width="2" height="2" fill="#1a8a5a"/><rect x="55" y="203" width="2" height="2" fill="#3a90ff"/><rect x="21" y="210" width="3" height="3" fill="#1a5ad8"/><rect x="71" y="158" width="3" height="3" fill="#3a90ff"/><rect x="32" y="149" width="3" height="3" fill="#1a5ad8"/><rect x="69" y="209" width="3" height="3" fill="#3a90ff"/><rect x="68" y="190" width="3" height="3" fill="#1a8a5a"/><rect x="34" y="139" width="2" height="2" fill="#1a5ad8"/><rect x="63" y="186" width="3" height="3" fill="#1a8a5a"/><rect x="39" y="216" width="3" height="3" fill="#2a80f0"/><rect x="24" y="197" width="2" height="2" fill="#1a8a5a"/><rect x="7" y="160" width="2" height="2" fill="#1a5ad8"/><rect x="22" y="161" width="2" height="2" fill="#3a90ff"/><rect x="35" y="220" width="3" height="3" fill="#3a90ff"/><rect x="65" y="174" width="3" height="3" fill="#2a80f0"/><rect x="32" y="205" width="2" height="2" fill="#1a5ad8"/><rect x="25" y="166" width="2" height="2" fill="#1a8a5a"/><rect x="41" y="181" width="2" height="2" fill="#3a90ff"/><rect x="43" y="211" width="3" height="3" fill="#1a5ad8"/><rect x="137" y="143" width="2" height="2" fill="#145a20"/><rect x="143" y="117" width="3" height="3" fill="#227a30"/><rect x="146" y="144" width="2" height="2" fill="#1a7a2a"/><rect x="124" y="156" width="2" height="2" fill="#0e3a14"/><rect x="126" y="145" width="2" height="2" fill="#0e3a14"/><rect x="139" y="149" width="3" height="3" fill="#0e4416"/><rect x="149" y="154" width="2" height="2" fill="#1a7a2a"/><rect x="169" y="130" width="2" height="2" fill="#0e4416"/><rect x="152" y="112" width="2" height="2" fill="#227a30"/><rect x="155" y="159" width="2" height="2" fill="#227a30"/><rect x="126" y="150" width="2" height="2" fill="#227a30"/><rect x="134" y="115" width="2" height="2" fill="#0e4416"/><rect x="123" y="158" width="2" height="2" fill="#0e3a14"/><rect x="118" y="123" width="3" height="3" fill="#1a7a2a"/><rect x="137" y="114" width="2" height="2" fill="#1a7a2a"/><rect x="146" y="158" width="2" height="2" fill="#0e4416"/><rect x="119" y="105" width="3" height="3" fill="#227a30"/><rect x="128" y="104" width="2" height="2" fill="#1a7a2a"/><rect x="130" y="112" width="2" height="2" fill="#227a30"/><rect x="169" y="118" width="2" height="2" fill="#145a20"/><rect x="135" y="121" width="2" height="2" fill="#145a20"/><rect x="131" y="160" width="2" height="2" fill="#145a20"/><rect x="135" y="137" width="2" height="2" fill="#0e3a14"/><rect x="142" y="140" width="3" height="3" fill="#227a30"/><rect x="134" y="153" width="2" height="2" fill="#0e3a14"/><rect x="141" y="98" width="3" height="3" fill="#227a30"/><rect x="129" y="108" width="2" height="2" fill="#1a7a2a"/><rect x="143" y="142" width="2" height="2" fill="#0e4416"/><rect x="126" y="137" width="2" height="2" fill="#145a20"/><rect x="126" y="127" width="2" height="2" fill="#227a30"/><rect x="134" y="141" width="2" height="2" fill="#1a7a2a"/><rect x="114" y="124" width="2" height="2" fill="#1a7a2a"/><rect x="168" y="133" width="2" height="2" fill="#145a20"/><rect x="148" y="154" width="2" height="2" fill="#1a7a2a"/><rect x="116" y="134" width="2" height="2" fill="#0e3a14"/><rect x="123" y="126" width="3" height="3" fill="#0e3a14"/><rect x="146" y="117" width="2" height="2" fill="#1a7a2a"/><rect x="160" y="107" width="3" height="3" fill="#227a30"/><rect x="153" y="107" width="2" height="2" fill="#1a7a2a"/><rect x="161" y="123" width="2" height="2" fill="#145a20"/><rect x="201" y="156" width="2" height="2" fill="#1a1a1a"/><rect x="189" y="166" width="2" height="2" fill="#1a1a1a"/><rect x="229" y="152" width="2" height="2" fill="#151515"/><rect x="126" y="243" width="2" height="2" fill="#151515"/><rect x="244" y="217" width="2" height="2" fill="#151515"/><rect x="236" y="252" width="2" height="2" fill="#101a10"/><rect x="246" y="175" width="2" height="2" fill="#101a10"/><rect x="212" y="254" width="2" height="2" fill="#101a10"/><rect x="269" y="156" width="2" height="2" fill="#151515"/><rect x="257" y="186" width="2" height="2" fill="#151515"/><rect x="192" y="249" width="2" height="2" fill="#1a1a1a"/><rect x="204" y="279" width="2" height="2" fill="#1a1a1a"/><rect x="180" y="243" width="2" height="2" fill="#1a1a1a"/><rect x="273" y="265" width="2" height="2" fill="#101a10"/><rect x="189" y="221" width="2" height="2" fill="#151515"/><rect x="277" y="232" width="2" height="2" fill="#1a1a1a"/><rect x="134" y="217" width="2" height="2" fill="#101a10"/><rect x="164" y="196" width="2" height="2" fill="#151515"/><rect x="122" y="183" width="2" height="2" fill="#1a1a1a"/><rect x="187" y="202" width="2" height="2" fill="#151515"/><rect x="198" y="177" width="2" height="2" fill="#151515"/><rect x="146" y="245" width="2" height="2" fill="#101a10"/><rect x="156" y="260" width="2" height="2" fill="#151515"/><rect x="112" y="252" width="2" height="2" fill="#1a1a1a"/><rect x="123" y="253" width="2" height="2" fill="#151515"/><rect x="192" y="202" width="2" height="2" fill="#151515"/><rect x="154" y="232" width="2" height="2" fill="#151515"/><rect x="260" y="177" width="2" height="2" fill="#1a1a1a"/><rect x="192" y="260" width="2" height="2" fill="#101a10"/><rect x="166" y="277" width="2" height="2" fill="#101a10"/><rect x="63" y="117" width="3" height="3" fill="#50b8ff"/><rect x="40" y="215" width="3" height="3" fill="#50b8ff"/><rect x="70" y="66" width="3" height="3" fill="#3a90ff"/><rect x="37" y="110" width="3" height="3" fill="#3a90ff"/><rect x="15" y="171" width="3" height="3" fill="#3aa0ff"/><rect x="60" y="139" width="3" height="3" fill="#2a80ff"/><rect x="75" y="198" width="3" height="3" fill="#3a90ff"/><text x="32" y="247" font-family="Liberation Sans" font-weight="bold" font-size="20" fill="#fff">30 μm</text><rect x="29.5" y="254.6" width="66.2" height="3.7" fill="#fff"/></svg>
<div style="position:absolute;left:584px;top:37px;width:8px;height:317px;background:#e0e8dd;"></div>
<div style="position:absolute;left:584px;top:322px;width:1px;height:32px;background:#b3c6ae;"></div>
<div style="position:absolute;left:592px;top:37px;width:1px;height:317px;background:#b9c3b6;"></div>
<div style="position:absolute;left:586px;top:136.0px;width:0;height:0;border-top:3px solid transparent;border-bottom:3px solid transparent;border-left:4px solid #111;"></div>
<div style="position:absolute;left:586px;top:147.3px;width:0;height:0;border-top:3px solid transparent;border-bottom:3px solid transparent;border-left:4px solid #111;"></div>
<div style="position:absolute;left:586px;top:158.6px;width:0;height:0;border-top:3px solid transparent;border-bottom:3px solid transparent;border-left:4px solid #111;"></div>
<div style="position:absolute;left:586px;top:169.9px;width:0;height:0;border-top:3px solid transparent;border-bottom:3px solid transparent;border-left:4px solid #111;"></div>
<div style="position:absolute;left:586px;top:181.2px;width:0;height:0;border-top:3px solid transparent;border-bottom:3px solid transparent;border-left:4px solid #111;"></div>
<div style="position:absolute;left:586px;top:192.5px;width:0;height:0;border-top:3px solid transparent;border-bottom:3px solid transparent;border-left:4px solid #111;"></div>
<div style="position:absolute;left:586px;top:203.8px;width:0;height:0;border-top:3px solid transparent;border-bottom:3px solid transparent;border-left:4px solid #111;"></div>
<div style="position:absolute;left:586px;top:215.1px;width:0;height:0;border-top:3px solid transparent;border-bottom:3px solid transparent;border-left:4px solid #111;"></div>
<div style="position:absolute;left:586px;top:226.4px;width:0;height:0;border-top:3px solid transparent;border-bottom:3px solid transparent;border-left:4px solid #111;"></div>
<div style="position:absolute;left:586px;top:237.7px;width:0;height:0;border-top:3px solid transparent;border-bottom:3px solid transparent;border-left:4px solid #111;"></div>
<div style="position:absolute;left:586px;top:249.0px;width:0;height:0;border-top:3px solid transparent;border-bottom:3px solid transparent;border-left:4px solid #111;"></div>
<div style="position:absolute;left:594px;top:38px;width:141px;height:16px;border:1px solid #9ca29a;background:#fff;"></div>
<div style="position:absolute;left:598px;top:39.50px;height:15px;line-height:15px;font-size:11px;white-space:nowrap;transform-origin:0 0;transform:scaleX(0.89);">Events[Cnts]</div>
<div style="position:absolute;left:721px;top:39px;width:13px;height:14px;border:1px solid #b0b6ae;background:linear-gradient(#e8ece6,#d3d9d1);"></div>
<div style="position:absolute;left:725.0px;top:46.0px;width:0;height:0;border-left:3.5px solid transparent;border-right:3.5px solid transparent;border-top:3.5px solid #111;"></div>
<div style="position:absolute;left:740px;top:42px;width:10px;height:10px;background:#22a03b;border:1px solid #5a6058;box-sizing:border-box;"><svg width="10" height="10" style="position:absolute;left:0;top:0"><path d="M2.0 4.1 L4.1 6.4 L7.9 2.1" stroke="#111" stroke-width="1.9" fill="none"/></svg></div>
<div style="position:absolute;left:753px;top:39.00px;height:15px;line-height:15px;font-size:11px;white-space:nowrap;transform-origin:0 0;transform:scaleX(0.89);">Active</div>
<svg style="position:absolute;left:594px;top:61px" width="203" height="22" viewBox="0 0 203 22"><defs><linearGradient id="gg" x1="0" x2="1"><stop offset="0" stop-color="#000"/><stop offset="1" stop-color="#fff"/></linearGradient></defs><rect x="0" y="0" width="203" height="22" fill="#fff"/><rect x="1" y="1" width="34" height="20" fill="#000"/><path d="M35 1 L168 1 L168 21 L140 21 L100 20.5 L70 20 L50 19 L45 18 L42 15 L39 10 L36 4 L35 2 Z" fill="url(#gg)"/><rect x="168" y="1" width="1.3" height="20" fill="#111"/><rect x="0.6" y="0.6" width="201.8" height="20.8" fill="none" stroke="#111" stroke-width="1.4"/></svg>
<div style="position:absolute;left:595px;top:88px;width:10px;height:10px;background:#fff;border:1px solid #8a9088;box-sizing:border-box;"></div>
<div style="position:absolute;left:608px;top:86.00px;height:15px;line-height:15px;font-size:11px;white-space:nowrap;transform-origin:0 0;transform:scaleX(0.89);">Min</div>
<div style="position:absolute;left:630px;top:84px;width:43px;height:17px;border:1px solid #8f958d;background:#fff;"></div>
<div style="position:absolute;left:627.00px;top:86.00px;width:45px;text-align:right;height:15px;line-height:15px;font-size:11px;white-space:nowrap;transform-origin:100% 0;transform:scaleX(0.89);">1</div>
<div style="position:absolute;left:675px;top:84.0px;width:13px;height:7.5px;border:1px solid #b3b9b1;border-radius:2px;background:linear-gradient(#f0f3ee,#dce2da);"></div>
<div style="position:absolute;left:679.0px;top:86.8px;width:0;height:0;border-left:3.5px solid transparent;border-right:3.5px solid transparent;border-bottom:3.5px solid #111;"></div>
<div style="position:absolute;left:675px;top:93.5px;width:13px;height:7.5px;border:1px solid #b3b9b1;border-radius:2px;background:linear-gradient(#f0f3ee,#dce2da);"></div>
<div style="position:absolute;left:679.0px;top:96.8px;width:0;height:0;border-left:3.5px solid transparent;border-right:3.5px solid transparent;border-top:3.5px solid #111;"></div>
<div style="position:absolute;left:696px;top:88px;width:10px;height:10px;background:#fff;border:1px solid #8a9088;box-sizing:border-box;"></div>
<div style="position:absolute;left:710px;top:86.00px;height:15px;line-height:15px;font-size:11px;white-space:nowrap;transform-origin:0 0;transform:scaleX(0.89);">Max</div>
<div style="position:absolute;left:737px;top:84px;width:43px;height:17px;border:1px solid #8f958d;background:#fff;"></div>
<div style="position:absolute;left:734.00px;top:86.00px;width:45px;text-align:right;height:15px;line-height:15px;font-size:11px;white-space:nowrap;transform-origin:100% 0;transform:scaleX(0.89);">1158</div>
<div style="position:absolute;left:782px;top:84.0px;width:13px;height:7.5px;border:1px solid #b3b9b1;border-radius:2px;background:linear-gradient(#f0f3ee,#dce2da);"></div>
<div style="position:absolute;left:786.0px;top:86.8px;width:0;height:0;border-left:3.5px solid transparent;border-right:3.5px solid transparent;border-bottom:3.5px solid #111;"></div>
<div style="position:absolute;left:782px;top:93.5px;width:13px;height:7.5px;border:1px solid #b3b9b1;border-radius:2px;background:linear-gradient(#f0f3ee,#dce2da);"></div>
<div style="position:absolute;left:786.0px;top:96.8px;width:0;height:0;border-left:3.5px solid transparent;border-right:3.5px solid transparent;border-top:3.5px solid #111;"></div>
<div style="position:absolute;left:593px;top:105px;width:208px;height:1px;background:#c9d5c5;"></div>
<div style="position:absolute;left:594px;top:107px;width:141px;height:16px;border:1px solid #9ca29a;background:#fff;"></div>
<div style="position:absolute;left:598px;top:108.50px;height:15px;line-height:15px;font-size:11px;white-space:nowrap;transform-origin:0 0;transform:scaleX(0.89);">Efficiency[%]</div>
<div style="position:absolute;left:721px;top:108px;width:13px;height:14px;border:1px solid #b0b6ae;background:linear-gradient(#e8ece6,#d3d9d1);"></div>
<div style="position:absolute;left:725.0px;top:115.0px;width:0;height:0;border-left:3.5px solid transparent;border-right:3.5px solid transparent;border-top:3.5px solid #111;"></div>
<div style="position:absolute;left:740px;top:111px;width:10px;height:10px;background:#22a03b;border:1px solid #5a6058;box-sizing:border-box;"><svg width="10" height="10" style="position:absolute;left:0;top:0"><path d="M2.0 4.1 L4.1 6.4 L7.9 2.1" stroke="#111" stroke-width="1.9" fill="none"/></svg></div>
<div style="position:absolute;left:753px;top:109.00px;height:15px;line-height:15px;font-size:11px;white-space:nowrap;transform-origin:0 0;transform:scaleX(0.89);">Active</div>
<svg style="position:absolute;left:594px;top:131px" width="203" height="22" viewBox="0 0 203 22"><defs><linearGradient id="rb" x1="0" x2="1"><stop offset="0" stop-color="#3c78f0"/><stop offset="0.12" stop-color="#28b4f4"/><stop offset="0.25" stop-color="#20f0f8"/><stop offset="0.52" stop-color="#00dc00"/><stop offset="0.63" stop-color="#80ee00"/><stop offset="0.74" stop-color="#f8f800"/><stop offset="0.867" stop-color="#ff9000"/><stop offset="1" stop-color="#ff1000"/></linearGradient></defs><rect x="0" y="0" width="203" height="22" fill="#111"/><rect x="1" y="1" width="34" height="20" fill="#3a8ef0"/><rect x="35" y="1" width="133" height="20" fill="url(#rb)"/><rect x="168.6" y="1" width="33" height="20" fill="#f00"/><path d="M1 19 L10 17 L20 17.5 L33 17 L35 18 L36 3 L38 15 L45 17 L60 18 L80 18.5 L100 17.5 L130 18 L150 20 L168 20.5 L168 21 L1 21 Z" fill="#f4f4f4"/><path d="M1 19 L10 17 L20 17.5 L33 17 L35 18 L36 3 L38 15 L45 17 L60 18 L80 18.5 L100 17.5 L130 18 L150 20 L168 20.5" fill="none" stroke="#333" stroke-width="0.8"/><rect x="168" y="1" width="1.3" height="20" fill="#555"/><rect x="0.6" y="0.6" width="201.8" height="20.8" fill="none" stroke="#111" stroke-width="1.4"/></svg>
<div style="position:absolute;left:595px;top:158px;width:10px;height:10px;background:#22a03b;border:1px solid #5a6058;box-sizing:border-box;"><svg width="10" height="10" style="position:absolute;left:0;top:0"><path d="M2.0 4.1 L4.1 6.4 L7.9 2.1" stroke="#111" stroke-width="1.9" fill="none"/></svg></div>
<div style="position:absolute;left:608px;top:155.50px;height:15px;line-height:15px;font-size:11px;white-space:nowrap;transform-origin:0 0;transform:scaleX(0.89);">Min</div>
<div style="position:absolute;left:630px;top:154px;width:43px;height:17px;border:1px solid #8f958d;background:#fff;"></div>
<div style="position:absolute;left:627.00px;top:156.00px;width:45px;text-align:right;height:15px;line-height:15px;font-size:11px;white-space:nowrap;transform-origin:100% 0;transform:scaleX(0.89);">0,0</div>
<div style="position:absolute;left:675px;top:154.0px;width:13px;height:7.5px;border:1px solid #b3b9b1;border-radius:2px;background:linear-gradient(#f0f3ee,#dce2da);"></div>
<div style="position:absolute;left:679.0px;top:156.8px;width:0;height:0;border-left:3.5px solid transparent;border-right:3.5px solid transparent;border-bottom:3.5px solid #111;"></div>
<div style="position:absolute;left:675px;top:163.5px;width:13px;height:7.5px;border:1px solid #b3b9b1;border-radius:2px;background:linear-gradient(#f0f3ee,#dce2da);"></div>
<div style="position:absolute;left:679.0px;top:166.8px;width:0;height:0;border-left:3.5px solid transparent;border-right:3.5px solid transparent;border-top:3.5px solid #111;"></div>
<div style="position:absolute;left:696px;top:158px;width:10px;height:10px;background:#22a03b;border:1px solid #5a6058;box-sizing:border-box;"><svg width="10" height="10" style="position:absolute;left:0;top:0"><path d="M2.0 4.1 L4.1 6.4 L7.9 2.1" stroke="#111" stroke-width="1.9" fill="none"/></svg></div>
<div style="position:absolute;left:710px;top:155.50px;height:15px;line-height:15px;font-size:11px;white-space:nowrap;transform-origin:0 0;transform:scaleX(0.89);">Max</div>
<div style="position:absolute;left:737px;top:154px;width:43px;height:17px;border:1px solid #8f958d;background:#fff;"></div>
<div style="position:absolute;left:734.00px;top:156.00px;width:45px;text-align:right;height:15px;line-height:15px;font-size:11px;white-space:nowrap;transform-origin:100% 0;transform:scaleX(0.89);">100,0</div>
<div style="position:absolute;left:782px;top:154.0px;width:13px;height:7.5px;border:1px solid #b3b9b1;border-radius:2px;background:linear-gradient(#f0f3ee,#dce2da);"></div>
<div style="position:absolute;left:786.0px;top:156.8px;width:0;height:0;border-left:3.5px solid transparent;border-right:3.5px solid transparent;border-bottom:3.5px solid #111;"></div>
<div style="position:absolute;left:782px;top:163.5px;width:13px;height:7.5px;border:1px solid #b3b9b1;border-radius:2px;background:linear-gradient(#f0f3ee,#dce2da);"></div>
<div style="position:absolute;left:786.0px;top:166.8px;width:0;height:0;border-left:3.5px solid transparent;border-right:3.5px solid transparent;border-top:3.5px solid #111;"></div>
<div style="position:absolute;left:595px;top:184px;width:10px;height:10px;background:#fff;border:1px solid #8a9088;box-sizing:border-box;"></div>
<div style="position:absolute;left:608px;top:181.00px;height:15px;line-height:15px;font-size:11px;white-space:nowrap;transform-origin:0 0;transform:scaleX(0.89);">Optimized Rainbow</div>
<div style="position:absolute;left:593px;top:199px;width:208px;height:1px;background:#c9d5c5;"></div>
<div style="position:absolute;left:595px;top:205px;width:10px;height:10px;background:#fff;border:1px solid #8a9088;box-sizing:border-box;"></div>
<div style="position:absolute;left:613px;top:202.50px;height:15px;line-height:15px;font-size:11px;white-space:nowrap;transform-origin:0 0;transform:scaleX(0.89);">Smoothing</div>
<div style="position:absolute;left:593px;top:222px;width:208px;height:1px;background:#c9d5c5;"></div>
<div style="position:absolute;left:294px;top:358px;width:512px;height:355px;background:#e0e8dd;"></div>
<div style="position:absolute;left:294px;top:357px;width:512px;height:1px;background:#9aa098;"></div>
<div style="position:absolute;left:301px;top:363px;width:10px;height:10px;background:#22a03b;border:1px solid #5a6058;box-sizing:border-box;"><svg width="10" height="10" style="position:absolute;left:0;top:0"><path d="M2.0 4.1 L4.1 6.4 L7.9 2.1" stroke="#111" stroke-width="1.9" fill="none"/></svg></div>
<div style="position:absolute;left:315px;top:360.50px;height:15px;line-height:15px;font-size:11px;white-space:nowrap;transform-origin:0 0;transform:scaleX(0.89);">Apply Limits to All Curves</div>
<div style="position:absolute;left:541px;top:360.20px;height:15px;line-height:15px;font-size:11px;white-space:nowrap;transform-origin:0 0;transform:scaleX(0.89);">Number of Photons: 153614; Selected: 153594 (100%)</div>
<div style="position:absolute;left:301.5px;top:383.70px;height:15px;line-height:15px;font-size:11px;white-space:nowrap;transform-origin:0 0;transform:scaleX(0.89);">Lower Boundary:</div>
<div style="position:absolute;left:391px;top:382px;width:102px;height:17px;border:1px solid #8f958d;background:#fff;"></div>
<div style="position:absolute;left:386.00px;top:384.00px;width:104px;text-align:right;height:15px;line-height:15px;font-size:11px;white-space:nowrap;transform-origin:100% 0;transform:scaleX(0.89);">0,16 ns</div>
<div style="position:absolute;left:495px;top:382.0px;width:13px;height:7.5px;border:1px solid #b3b9b1;border-radius:2px;background:linear-gradient(#f0f3ee,#dce2da);"></div>
<div style="position:absolute;left:499.0px;top:384.8px;width:0;height:0;border-left:3.5px solid transparent;border-right:3.5px solid transparent;border-bottom:3.5px solid #111;"></div>
<div style="position:absolute;left:495px;top:391.5px;width:13px;height:7.5px;border:1px solid #b3b9b1;border-radius:2px;background:linear-gradient(#f0f3ee,#dce2da);"></div>
<div style="position:absolute;left:499.0px;top:394.8px;width:0;height:0;border-left:3.5px solid transparent;border-right:3.5px solid transparent;border-top:3.5px solid #111;"></div>
<div style="position:absolute;left:523.4px;top:383.70px;height:15px;line-height:15px;font-size:11px;white-space:nowrap;transform-origin:0 0;transform:scaleX(0.89);">Upper Boundary:</div>
<div style="position:absolute;left:612px;top:383px;width:103px;height:16px;border:1px solid #8f958d;background:#fff;"></div>
<div style="position:absolute;left:607.00px;top:384.50px;width:105px;text-align:right;height:15px;line-height:15px;font-size:11px;white-space:nowrap;transform-origin:100% 0;transform:scaleX(0.89);">49,79 ns</div>
<div style="position:absolute;left:717px;top:383.0px;width:13px;height:7.0px;border:1px solid #b3b9b1;border-radius:2px;background:linear-gradient(#f0f3ee,#dce2da);"></div>
<div style="position:absolute;left:721.0px;top:385.5px;width:0;height:0;border-left:3.5px solid transparent;border-right:3.5px solid transparent;border-bottom:3.5px solid #111;"></div>
<div style="position:absolute;left:717px;top:392.0px;width:13px;height:7.0px;border:1px solid #b3b9b1;border-radius:2px;background:linear-gradient(#f0f3ee,#dce2da);"></div>
<div style="position:absolute;left:721.0px;top:395.0px;width:0;height:0;border-left:3.5px solid transparent;border-right:3.5px solid transparent;border-top:3.5px solid #111;"></div>
<div style="position:absolute;left:752px;top:382px;width:53px;height:20px;overflow:hidden;">
<div style="position:absolute;left:0;top:0;width:70px;height:18px;border:1px solid #9da39b;border-radius:3px;background:linear-gradient(#e9eee7 0%,#e4e9e2 50%,#d3d9d1 58%,#d6dcd4 100%);"></div>
<div style="position:absolute;left:12px;top:2.5px;height:15px;line-height:15px;font-size:11px;white-space:nowrap;transform-origin:0 0;transform:scaleX(0.89);">Reset Range</div>
</div>
<div style="position:absolute;left:295px;top:405px;width:351px;height:295px;background:#fff;"></div>
<div style="position:absolute;left:447.50px;top:411.50px;width:60px;text-align:center;height:16px;line-height:16px;font-size:12px;white-space:nowrap;transform-origin:50% 0;font-weight:bold;color:#111;">Fit</div>
<svg style="position:absolute;left:0;top:0" width="1347" height="713" viewBox="0 0 1347 713"><defs><clipPath id="cu"><rect x="339.5" y="428.5" width="305.8" height="183.8"/></clipPath><clipPath id="cr"><rect x="339.5" y="612.3" width="305.8" height="73"/></clipPath></defs><line x1="346.7" y1="428.5" x2="346.7" y2="685.3" stroke="#a8a8a8" stroke-width="1"/><line x1="358.7" y1="428.5" x2="358.7" y2="685.3" stroke="#e2e2e2" stroke-width="1"/><line x1="370.6" y1="428.5" x2="370.6" y2="685.3" stroke="#e2e2e2" stroke-width="1"/><line x1="382.6" y1="428.5" x2="382.6" y2="685.3" stroke="#e2e2e2" stroke-width="1"/><line x1="394.5" y1="428.5" x2="394.5" y2="685.3" stroke="#e2e2e2" stroke-width="1"/><line x1="406.5" y1="428.5" x2="406.5" y2="685.3" stroke="#a8a8a8" stroke-width="1"/><line x1="418.5" y1="428.5" x2="418.5" y2="685.3" stroke="#e2e2e2" stroke-width="1"/><line x1="430.4" y1="428.5" x2="430.4" y2="685.3" stroke="#e2e2e2" stroke-width="1"/><line x1="442.4" y1="428.5" x2="442.4" y2="685.3" stroke="#e2e2e2" stroke-width="1"/><line x1="454.3" y1="428.5" x2="454.3" y2="685.3" stroke="#e2e2e2" stroke-width="1"/><line x1="466.3" y1="428.5" x2="466.3" y2="685.3" stroke="#a8a8a8" stroke-width="1"/><line x1="478.3" y1="428.5" x2="478.3" y2="685.3" stroke="#e2e2e2" stroke-width="1"/><line x1="490.2" y1="428.5" x2="490.2" y2="685.3" stroke="#e2e2e2" stroke-width="1"/><line x1="502.2" y1="428.5" x2="502.2" y2="685.3" stroke="#e2e2e2" stroke-width="1"/><line x1="514.1" y1="428.5" x2="514.1" y2="685.3" stroke="#e2e2e2" stroke-width="1"/><line x1="526.1" y1="428.5" x2="526.1" y2="685.3" stroke="#a8a8a8" stroke-width="1"/><line x1="538.1" y1="428.5" x2="538.1" y2="685.3" stroke="#e2e2e2" stroke-width="1"/><line x1="550.0" y1="428.5" x2="550.0" y2="685.3" stroke="#e2e2e2" stroke-width="1"/><line x1="562.0" y1="428.5" x2="562.0" y2="685.3" stroke="#e2e2e2" stroke-width="1"/><line x1="573.9" y1="428.5" x2="573.9" y2="685.3" stroke="#e2e2e2" stroke-width="1"/><line x1="585.9" y1="428.5" x2="585.9" y2="685.3" stroke="#a8a8a8" stroke-width="1"/><line x1="597.9" y1="428.5" x2="597.9" y2="685.3" stroke="#e2e2e2" stroke-width="1"/><line x1="609.8" y1="428.5" x2="609.8" y2="685.3" stroke="#e2e2e2" stroke-width="1"/><line x1="621.8" y1="428.5" x2="621.8" y2="685.3" stroke="#e2e2e2" stroke-width="1"/><line x1="633.7" y1="428.5" x2="633.7" y2="685.3" stroke="#e2e2e2" stroke-width="1"/><line x1="339.5" y1="612.1" x2="645.3" y2="612.1" stroke="#e2e2e2" stroke-width="1"/><line x1="339.5" y1="608.9" x2="645.3" y2="608.9" stroke="#e2e2e2" stroke-width="1"/><line x1="339.5" y1="606.1" x2="645.3" y2="606.1" stroke="#e2e2e2" stroke-width="1"/><line x1="339.5" y1="603.7" x2="645.3" y2="603.7" stroke="#e2e2e2" stroke-width="1"/><line x1="339.5" y1="601.5" x2="645.3" y2="601.5" stroke="#a8a8a8" stroke-width="1"/><line x1="339.5" y1="587.1" x2="645.3" y2="587.1" stroke="#e2e2e2" stroke-width="1"/><line x1="339.5" y1="578.7" x2="645.3" y2="578.7" stroke="#e2e2e2" stroke-width="1"/><line x1="339.5" y1="572.8" x2="645.3" y2="572.8" stroke="#e2e2e2" stroke-width="1"/><line x1="339.5" y1="568.2" x2="645.3" y2="568.2" stroke="#e2e2e2" stroke-width="1"/><line x1="339.5" y1="564.4" x2="645.3" y2="564.4" stroke="#e2e2e2" stroke-width="1"/><line x1="339.5" y1="561.2" x2="645.3" y2="561.2" stroke="#e2e2e2" stroke-width="1"/><line x1="339.5" y1="558.4" x2="645.3" y2="558.4" stroke="#e2e2e2" stroke-width="1"/><line x1="339.5" y1="556.0" x2="645.3" y2="556.0" stroke="#e2e2e2" stroke-width="1"/><line x1="339.5" y1="553.8" x2="645.3" y2="553.8" stroke="#a8a8a8" stroke-width="1"/><line x1="339.5" y1="539.4" x2="645.3" y2="539.4" stroke="#e2e2e2" stroke-width="1"/><line x1="339.5" y1="531.0" x2="645.3" y2="531.0" stroke="#e2e2e2" stroke-width="1"/><line x1="339.5" y1="525.1" x2="645.3" y2="525.1" stroke="#e2e2e2" stroke-width="1"/><line x1="339.5" y1="520.5" x2="645.3" y2="520.5" stroke="#e2e2e2" stroke-width="1"/><line x1="339.5" y1="516.7" x2="645.3" y2="516.7" stroke="#e2e2e2" stroke-width="1"/><line x1="339.5" y1="513.5" x2="645.3" y2="513.5" stroke="#e2e2e2" stroke-width="1"/><line x1="339.5" y1="510.7" x2="645.3" y2="510.7" stroke="#e2e2e2" stroke-width="1"/><line x1="339.5" y1="508.3" x2="645.3" y2="508.3" stroke="#e2e2e2" stroke-width="1"/><line x1="339.5" y1="506.1" x2="645.3" y2="506.1" stroke="#a8a8a8" stroke-width="1"/><line x1="339.5" y1="491.7" x2="645.3" y2="491.7" stroke="#e2e2e2" stroke-width="1"/><line x1="339.5" y1="483.3" x2="645.3" y2="483.3" stroke="#e2e2e2" stroke-width="1"/><line x1="339.5" y1="477.4" x2="645.3" y2="477.4" stroke="#e2e2e2" stroke-width="1"/><line x1="339.5" y1="472.8" x2="645.3" y2="472.8" stroke="#e2e2e2" stroke-width="1"/><line x1="339.5" y1="469.0" x2="645.3" y2="469.0" stroke="#e2e2e2" stroke-width="1"/><line x1="339.5" y1="465.8" x2="645.3" y2="465.8" stroke="#e2e2e2" stroke-width="1"/><line x1="339.5" y1="463.0" x2="645.3" y2="463.0" stroke="#e2e2e2" stroke-width="1"/><line x1="339.5" y1="460.6" x2="645.3" y2="460.6" stroke="#e2e2e2" stroke-width="1"/><line x1="339.5" y1="458.4" x2="645.3" y2="458.4" stroke="#a8a8a8" stroke-width="1"/><line x1="339.5" y1="444.0" x2="645.3" y2="444.0" stroke="#e2e2e2" stroke-width="1"/><line x1="339.5" y1="435.6" x2="645.3" y2="435.6" stroke="#e2e2e2" stroke-width="1"/><line x1="339.5" y1="429.7" x2="645.3" y2="429.7" stroke="#e2e2e2" stroke-width="1"/><line x1="339.5" y1="682.0" x2="645.3" y2="682.0" stroke="#e2e2e2" stroke-width="1"/><line x1="339.5" y1="674.1" x2="645.3" y2="674.1" stroke="#a8a8a8" stroke-width="1"/><line x1="339.5" y1="666.2" x2="645.3" y2="666.2" stroke="#e2e2e2" stroke-width="1"/><line x1="339.5" y1="658.3" x2="645.3" y2="658.3" stroke="#e2e2e2" stroke-width="1"/><line x1="339.5" y1="650.4" x2="645.3" y2="650.4" stroke="#e2e2e2" stroke-width="1"/><line x1="339.5" y1="642.5" x2="645.3" y2="642.5" stroke="#a8a8a8" stroke-width="1"/><line x1="339.5" y1="634.6" x2="645.3" y2="634.6" stroke="#e2e2e2" stroke-width="1"/><line x1="339.5" y1="626.7" x2="645.3" y2="626.7" stroke="#e2e2e2" stroke-width="1"/><line x1="339.5" y1="618.8" x2="645.3" y2="618.8" stroke="#e2e2e2" stroke-width="1"/><path clip-path="url(#cu)" d="M347.0 578.7H348.0V615.3H347.0ZM348.0 568.2H349.0V615.3H348.0ZM349.0 572.8H350.0V615.3H349.0ZM350.0 578.7H351.0V615.3H350.0ZM351.0 578.7H352.0V615.3H351.0ZM352.0 578.7H353.0V615.3H352.0ZM353.0 572.8H354.0V615.3H353.0ZM354.0 578.7H355.0V615.3H354.0ZM355.0 578.7H356.0V615.3H355.0ZM356.0 578.7H357.0V615.3H356.0ZM357.0 572.8H358.0V615.3H357.0ZM358.0 578.7H359.0V615.3H358.0ZM359.0 568.2H360.0V615.3H359.0ZM360.0 568.2H361.0V601.5H360.0ZM361.0 572.8H362.0V615.3H361.0ZM362.0 587.1H363.0V615.3H362.0ZM363.0 578.7H364.0V615.3H363.0ZM364.0 578.7H365.0V615.3H364.0ZM365.0 568.2H366.0V615.3H365.0ZM366.0 572.8H367.0V615.3H366.0ZM367.0 568.2H368.0V615.3H367.0ZM368.0 572.8H369.0V615.3H368.0ZM369.0 578.7H370.0V615.3H369.0ZM370.0 572.8H371.0V615.3H370.0ZM371.0 578.7H372.0V615.3H371.0ZM372.0 578.7H373.0V601.5H372.0ZM373.0 578.7H374.0V615.3H373.0ZM374.0 572.8H375.0V615.3H374.0ZM375.0 568.2H376.0V615.3H375.0ZM376.0 568.2H377.0V615.3H376.0ZM377.0 572.8H378.0V615.3H377.0ZM378.0 572.8H379.0V615.3H378.0ZM379.0 572.8H380.0V615.3H379.0ZM380.0 564.4H381.0V601.5H380.0ZM381.0 530.4H382.0V601.5H381.0ZM382.0 483.7H383.0V530.4H382.0ZM383.0 458.4H384.0V483.7H383.0ZM384.0 440.2H385.0V458.4H384.0ZM385.0 435.3H386.0V440.3H385.0ZM386.0 434.6H387.0V439.6H386.0ZM387.0 435.4H388.0V440.4H387.0ZM388.0 436.5H389.0V441.5H388.0ZM389.0 437.6H390.0V442.6H389.0ZM390.0 439.1H391.0V444.1H390.0ZM391.0 440.3H392.0V445.3H391.0ZM392.0 441.1H393.0V446.1H392.0ZM393.0 442.6H394.0V447.6H393.0ZM394.0 443.4H395.0V448.4H394.0ZM395.0 444.8H396.0V449.8H395.0ZM396.0 445.8H397.0V450.8H396.0ZM397.0 447.4H398.0V452.4H397.0ZM398.0 448.3H399.0V453.3H398.0ZM399.0 449.3H400.0V454.3H399.0ZM400.0 450.2H401.0V455.2H400.0ZM401.0 451.9H402.0V456.9H401.0ZM402.0 452.8H403.0V457.8H402.0ZM403.0 454.1H404.0V459.1H403.0ZM404.0 455.5H405.0V460.5H404.0ZM405.0 456.8H406.0V461.8H405.0ZM406.0 457.7H407.0V462.7H406.0ZM407.0 458.5H408.0V463.5H407.0ZM408.0 460.3H409.0V465.3H408.0ZM409.0 461.3H410.0V466.3H409.0ZM410.0 462.6H411.0V467.6H410.0ZM411.0 463.0H412.0V468.0H411.0ZM412.0 464.4H413.0V469.4H412.0ZM413.0 466.0H414.0V471.0H413.0ZM414.0 466.6H415.0V471.6H414.0ZM415.0 467.3H416.0V472.3H415.0ZM416.0 469.4H417.0V474.4H416.0ZM417.0 470.5H418.0V475.5H417.0ZM418.0 472.2H419.0V477.2H418.0ZM419.0 472.6H420.0V477.6H419.0ZM420.0 474.0H421.0V479.0H420.0ZM421.0 475.1H422.0V480.1H421.0ZM422.0 475.9H423.0V480.9H422.0ZM423.0 477.5H424.0V482.5H423.0ZM424.0 478.6H425.0V483.6H424.0ZM425.0 479.9H426.0V484.9H425.0ZM426.0 480.2H427.0V485.2H426.0ZM427.0 480.6H428.0V487.7H427.0ZM428.0 481.9H429.0V487.7H428.0ZM429.0 484.2H430.0V489.2H429.0ZM430.0 485.4H431.0V490.7H430.0ZM431.0 487.3H432.0V492.3H431.0ZM432.0 486.4H433.0V491.4H432.0ZM433.0 489.5H434.0V494.5H433.0ZM434.0 490.5H435.0V495.6H434.0ZM435.0 491.0H436.0V496.0H435.0ZM436.0 492.3H437.0V499.0H436.0ZM437.0 493.4H438.0V498.4H437.0ZM438.0 494.4H439.0V501.1H438.0ZM439.0 496.5H440.0V502.3H439.0ZM440.0 497.2H441.0V502.7H440.0ZM441.0 496.6H442.0V504.3H441.0ZM442.0 498.1H443.0V503.1H442.0ZM443.0 498.7H444.0V504.9H443.0ZM444.0 500.5H445.0V508.3H444.0ZM445.0 498.7H446.0V507.8H445.0ZM446.0 503.6H447.0V510.7H446.0ZM447.0 503.8H448.0V511.5H447.0ZM448.0 506.0H449.0V511.0H448.0ZM449.0 506.7H450.0V515.7H449.0ZM450.0 510.0H451.0V516.3H450.0ZM451.0 510.5H452.0V516.0H451.0ZM452.0 507.6H453.0V518.1H452.0ZM453.0 511.7H454.0V516.7H453.0ZM454.0 512.6H455.0V519.6H454.0ZM455.0 514.4H456.0V522.6H455.0ZM456.0 512.6H457.0V520.9H456.0ZM457.0 514.4H458.0V521.7H457.0ZM458.0 516.0H459.0V526.7H458.0ZM459.0 514.7H460.0V522.6H459.0ZM460.0 515.3H461.0V527.3H460.0ZM461.0 520.0H462.0V529.7H461.0ZM462.0 519.3H463.0V527.3H462.0ZM463.0 518.5H464.0V527.3H463.0ZM464.0 521.7H465.0V534.8H464.0ZM465.0 524.6H466.0V531.0H465.0ZM466.0 523.1H467.0V541.6H466.0ZM467.0 525.6H468.0V536.5H467.0ZM468.0 525.6H469.0V537.5H468.0ZM469.0 526.7H470.0V539.4H469.0ZM470.0 529.7H471.0V542.8H470.0ZM471.0 529.7H472.0V542.8H471.0ZM472.0 532.5H473.0V541.6H472.0ZM473.0 529.7H474.0V545.4H473.0ZM474.0 529.7H475.0V544.1H474.0ZM475.0 534.8H476.0V546.8H475.0ZM476.0 531.0H477.0V550.0H476.0ZM477.0 531.0H478.0V550.0H477.0ZM478.0 535.7H479.0V564.4H478.0ZM479.0 535.7H480.0V561.2H479.0ZM480.0 537.5H481.0V561.2H480.0ZM481.0 535.7H482.0V558.4H481.0ZM482.0 532.5H483.0V551.8H482.0ZM483.0 539.4H484.0V551.8H483.0ZM484.0 537.5H485.0V548.4H484.0ZM485.0 537.5H486.0V561.2H485.0ZM486.0 539.4H487.0V561.2H486.0ZM487.0 539.4H488.0V561.2H487.0ZM488.0 542.8H489.0V568.2H488.0ZM489.0 542.8H490.0V561.2H489.0ZM490.0 545.4H491.0V561.2H490.0ZM491.0 540.5H492.0V568.2H491.0ZM492.0 550.0H493.0V572.8H492.0ZM493.0 551.8H494.0V572.8H493.0ZM494.0 544.1H495.0V578.7H494.0ZM495.0 546.8H496.0V578.7H495.0ZM496.0 548.4H497.0V568.2H496.0ZM497.0 546.8H498.0V572.8H497.0ZM498.0 546.8H499.0V568.2H498.0ZM499.0 545.4H500.0V578.7H499.0ZM500.0 553.8H501.0V587.1H500.0ZM501.0 561.2H502.0V601.5H501.0ZM502.0 550.0H503.0V578.7H502.0ZM503.0 548.4H504.0V578.7H503.0ZM504.0 558.4H505.0V587.1H504.0ZM505.0 556.0H506.0V587.1H505.0ZM506.0 550.0H507.0V587.1H506.0ZM507.0 551.8H508.0V615.3H507.0ZM508.0 561.2H509.0V601.5H508.0ZM509.0 558.4H510.0V578.7H509.0ZM510.0 556.0H511.0V587.1H510.0ZM511.0 556.0H512.0V601.5H511.0ZM512.0 558.4H513.0V601.5H512.0ZM513.0 561.2H514.0V601.5H513.0ZM514.0 561.2H515.0V601.5H514.0ZM515.0 568.2H516.0V601.5H515.0ZM516.0 561.2H517.0V601.5H516.0ZM517.0 556.0H518.0V615.3H517.0ZM518.0 561.2H519.0V601.5H518.0ZM519.0 558.4H520.0V587.1H519.0ZM520.0 558.4H521.0V601.5H520.0ZM521.0 558.4H522.0V601.5H521.0ZM522.0 561.2H523.0V601.5H522.0ZM523.0 564.4H524.0V615.3H523.0ZM524.0 568.2H525.0V615.3H524.0ZM525.0 564.4H526.0V615.3H525.0ZM526.0 564.4H527.0V615.3H526.0ZM527.0 568.2H528.0V601.5H527.0ZM528.0 561.2H529.0V601.5H528.0ZM529.0 561.2H530.0V601.5H529.0ZM530.0 568.2H531.0V601.5H530.0ZM531.0 568.2H532.0V615.3H531.0ZM532.0 568.2H533.0V615.3H532.0ZM533.0 578.7H534.0V615.3H533.0ZM534.0 578.7H535.0V601.5H534.0ZM535.0 568.2H536.0V615.3H535.0ZM536.0 568.2H537.0V615.3H536.0ZM537.0 564.4H538.0V615.3H537.0ZM538.0 564.4H539.0V601.5H538.0ZM539.0 578.7H540.0V615.3H539.0ZM540.0 572.8H541.0V615.3H540.0ZM541.0 568.2H542.0V615.3H541.0ZM542.0 564.4H543.0V615.3H542.0ZM543.0 568.2H544.0V615.3H543.0ZM544.0 572.8H545.0V615.3H544.0ZM545.0 568.2H546.0V601.5H545.0ZM546.0 578.7H547.0V615.3H546.0ZM547.0 568.2H548.0V601.5H547.0ZM548.0 568.2H549.0V615.3H548.0ZM549.0 564.4H550.0V601.5H549.0ZM550.0 572.8H551.0V615.3H550.0ZM551.0 568.2H552.0V615.3H551.0ZM552.0 568.2H553.0V601.5H552.0ZM553.0 578.7H554.0V615.3H553.0ZM554.0 578.7H555.0V615.3H554.0ZM555.0 578.7H556.0V615.3H555.0ZM556.0 578.7H557.0V615.3H556.0ZM557.0 578.7H558.0V615.3H557.0ZM558.0 572.8H559.0V615.3H558.0ZM559.0 568.2H560.0V615.3H559.0ZM560.0 578.7H561.0V615.3H560.0ZM561.0 564.4H562.0V601.5H561.0ZM562.0 564.4H563.0V615.3H562.0ZM563.0 578.7H564.0V615.3H563.0ZM564.0 572.8H565.0V601.5H564.0ZM565.0 568.2H566.0V615.3H565.0ZM566.0 572.8H567.0V601.5H566.0ZM567.0 572.8H568.0V615.3H567.0ZM568.0 572.8H569.0V615.3H568.0ZM569.0 578.7H570.0V615.3H569.0ZM570.0 564.4H571.0V615.3H570.0ZM571.0 572.8H572.0V615.3H571.0ZM572.0 578.7H573.0V601.5H572.0ZM573.0 564.4H574.0V615.3H573.0ZM574.0 572.8H575.0V615.3H574.0ZM575.0 572.8H576.0V615.3H575.0ZM576.0 568.2H577.0V615.3H576.0ZM577.0 568.2H578.0V615.3H577.0ZM578.0 564.4H579.0V615.3H578.0ZM579.0 568.2H580.0V615.3H579.0ZM580.0 572.8H581.0V615.3H580.0ZM581.0 572.8H582.0V601.5H581.0ZM582.0 568.2H583.0V615.3H582.0ZM583.0 572.8H584.0V615.3H583.0ZM584.0 578.7H585.0V615.3H584.0ZM585.0 572.8H586.0V615.3H585.0ZM586.0 572.8H587.0V615.3H586.0ZM587.0 578.7H588.0V615.3H587.0ZM588.0 572.8H589.0V615.3H588.0ZM589.0 578.7H590.0V615.3H589.0ZM590.0 572.8H591.0V615.3H590.0ZM591.0 572.8H592.0V615.3H591.0ZM592.0 578.7H593.0V615.3H592.0ZM593.0 568.2H594.0V615.3H593.0ZM594.0 568.2H595.0V615.3H594.0ZM595.0 572.8H596.0V615.3H595.0ZM596.0 568.2H597.0V615.3H596.0ZM597.0 568.2H598.0V615.3H597.0ZM598.0 568.2H599.0V615.3H598.0ZM599.0 572.8H600.0V601.5H599.0ZM600.0 568.2H601.0V601.5H600.0ZM601.0 572.8H602.0V615.3H601.0ZM602.0 587.1H603.0V615.3H602.0ZM603.0 572.8H604.0V601.5H603.0ZM604.0 578.7H605.0V615.3H604.0ZM605.0 572.8H606.0V615.3H605.0ZM606.0 572.8H607.0V615.3H606.0ZM607.0 572.8H608.0V615.3H607.0ZM608.0 572.8H609.0V615.3H608.0ZM609.0 572.8H610.0V615.3H609.0ZM610.0 578.7H611.0V615.3H610.0ZM611.0 578.7H612.0V615.3H611.0ZM612.0 578.7H613.0V615.3H612.0ZM613.0 572.8H614.0V601.5H613.0ZM614.0 578.7H615.0V615.3H614.0ZM615.0 572.8H616.0V615.3H615.0ZM616.0 572.8H617.0V615.3H616.0ZM617.0 572.8H618.0V615.3H617.0ZM618.0 572.8H619.0V615.3H618.0ZM619.0 578.7H620.0V615.3H619.0ZM620.0 578.7H621.0V615.3H620.0ZM621.0 572.8H622.0V615.3H621.0ZM622.0 568.2H623.0V615.3H622.0ZM623.0 572.8H624.0V615.3H623.0ZM624.0 572.8H625.0V615.3H624.0ZM625.0 578.7H626.0V601.5H625.0ZM626.0 572.8H627.0V615.3H626.0ZM627.0 572.8H628.0V615.3H627.0ZM628.0 572.8H629.0V615.3H628.0ZM629.0 572.8H630.0V615.3H629.0ZM630.0 568.2H631.0V615.3H630.0ZM631.0 572.8H632.0V601.5H631.0ZM632.0 572.8H633.0V615.3H632.0ZM633.0 564.4H634.0V615.3H633.0ZM634.0 587.1H635.0V615.3H634.0ZM635.0 572.8H636.0V615.3H635.0ZM636.0 572.8H637.0V615.3H636.0ZM637.0 568.2H638.0V615.3H637.0ZM638.0 572.8H639.0V615.3H638.0ZM639.0 568.2H640.0V615.3H639.0ZM640.0 578.7H641.0V615.3H640.0ZM641.0 578.7H642.0V615.3H641.0ZM642.0 578.7H643.0V615.3H642.0ZM643.0 578.7H644.0V615.3H643.0ZM644.0 578.7H645.0V615.3H644.0ZM645.0 561.2H646.0V615.3H645.0Z" fill="#c0c0c0"/><path clip-path="url(#cu)" d="M347.0 587.1H348.0V615.3H347.0ZM348.0 578.7H349.0V615.3H348.0ZM349.0 587.1H350.0V615.3H349.0ZM350.0 587.1H351.0V615.3H350.0ZM351.0 587.1H352.0V615.3H351.0ZM352.0 578.7H353.0V615.3H352.0ZM353.0 578.7H354.0V615.3H353.0ZM354.0 601.5H355.0V615.3H354.0ZM355.0 601.5H356.0V615.3H355.0ZM356.0 587.1H357.0V615.3H356.0ZM357.0 587.1H358.0V615.3H357.0ZM358.0 587.1H359.0V615.3H358.0ZM359.0 578.7H360.0V615.3H359.0ZM360.0 587.1H361.0V615.3H360.0ZM361.0 601.5H362.0V615.3H361.0ZM362.0 601.5H363.0V615.3H362.0ZM363.0 572.8H364.0V615.3H363.0ZM364.0 572.8H365.0V615.3H364.0ZM365.0 601.5H366.0V615.3H365.0ZM366.0 587.1H367.0V615.3H366.0ZM367.0 601.5H368.0V615.3H367.0ZM368.0 587.1H369.0V615.3H368.0ZM369.0 587.1H370.0V615.3H369.0ZM370.0 587.1H371.0V615.3H370.0ZM371.0 587.1H372.0V615.3H371.0ZM372.0 578.7H373.0V615.3H372.0ZM373.0 601.5H374.0V615.3H373.0ZM374.0 587.1H375.0V615.3H374.0ZM375.0 578.7H376.0V615.3H375.0ZM376.0 578.7H377.0V615.3H376.0ZM377.0 601.5H378.0V615.3H377.0ZM378.0 578.7H379.0V615.3H378.0ZM379.0 587.1H380.0V615.3H379.0ZM380.0 587.1H381.0V615.3H380.0ZM381.0 534.0H382.0V601.5H381.0ZM382.0 511.0H383.0V534.8H382.0ZM383.0 491.3H384.0V513.5H383.0ZM384.0 476.5H385.0V491.5H384.0ZM385.0 464.7H386.0V476.5H385.0ZM386.0 462.9H387.0V465.5H386.0ZM387.0 463.2H388.0V466.5H387.0ZM388.0 463.8H389.0V466.4H388.0ZM389.0 464.2H390.0V468.9H389.0ZM390.0 466.9H391.0V469.5H390.0ZM391.0 467.5H392.0V471.7H391.0ZM392.0 468.4H393.0V472.2H392.0ZM393.0 469.1H394.0V473.4H393.0ZM394.0 471.4H395.0V474.0H394.0ZM395.0 472.6H396.0V475.5H395.0ZM396.0 473.3H397.0V475.9H396.0ZM397.0 474.6H398.0V477.2H397.0ZM398.0 475.8H399.0V478.7H398.0ZM399.0 476.5H400.0V479.7H399.0ZM400.0 477.5H401.0V480.6H400.0ZM401.0 478.7H402.0V482.5H401.0ZM402.0 479.2H403.0V484.4H402.0ZM403.0 480.0H404.0V484.9H403.0ZM404.0 480.4H405.0V485.4H404.0ZM405.0 482.2H406.0V486.1H405.0ZM406.0 484.4H407.0V487.4H406.0ZM407.0 484.2H408.0V489.1H407.0ZM408.0 485.4H409.0V491.3H408.0ZM409.0 485.7H410.0V491.4H409.0ZM410.0 488.1H411.0V492.1H410.0ZM411.0 487.4H412.0V493.8H411.0ZM412.0 490.1H413.0V496.0H412.0ZM413.0 491.1H414.0V495.6H413.0ZM414.0 493.2H415.0V497.4H414.0ZM415.0 493.9H416.0V497.2H415.0ZM416.0 494.5H417.0V501.8H416.0ZM417.0 495.0H418.0V501.1H417.0ZM418.0 495.4H419.0V501.0H418.0ZM419.0 497.3H420.0V503.6H419.0ZM420.0 499.1H421.0V504.5H420.0ZM421.0 498.4H422.0V505.1H421.0ZM422.0 499.4H423.0V507.8H422.0ZM423.0 500.2H424.0V508.3H423.0ZM424.0 502.3H425.0V511.0H424.0ZM425.0 504.3H426.0V511.0H425.0ZM426.0 504.3H427.0V509.7H426.0ZM427.0 506.9H428.0V512.1H427.0ZM428.0 508.1H429.0V514.1H428.0ZM429.0 508.7H430.0V514.4H429.0ZM430.0 508.7H431.0V517.0H430.0ZM431.0 510.2H432.0V516.0H431.0ZM432.0 512.3H433.0V518.5H432.0ZM433.0 511.5H434.0V524.1H433.0ZM434.0 512.3H435.0V525.1H434.0ZM435.0 513.5H436.0V518.9H435.0ZM436.0 515.3H437.0V524.6H436.0ZM437.0 516.7H438.0V530.4H437.0ZM438.0 516.3H439.0V526.7H438.0ZM439.0 517.7H440.0V527.8H439.0ZM440.0 518.1H441.0V528.4H440.0ZM441.0 520.5H442.0V528.4H441.0ZM442.0 519.6H443.0V533.2H442.0ZM443.0 522.6H444.0V534.0H443.0ZM444.0 523.1H445.0V539.4H444.0ZM445.0 524.6H446.0V538.4H445.0ZM446.0 524.6H447.0V540.5H446.0ZM447.0 526.1H448.0V537.5H447.0ZM448.0 531.7H449.0V540.5H448.0ZM449.0 524.6H450.0V539.4H449.0ZM450.0 525.1H451.0V539.4H450.0ZM451.0 527.8H452.0V544.1H451.0ZM452.0 532.5H453.0V548.4H452.0ZM453.0 531.0H454.0V548.4H453.0ZM454.0 534.8H455.0V546.8H454.0ZM455.0 529.7H456.0V548.4H455.0ZM456.0 534.8H457.0V548.4H456.0ZM457.0 534.8H458.0V548.4H457.0ZM458.0 534.8H459.0V551.8H458.0ZM459.0 535.7H460.0V556.0H459.0ZM460.0 534.0H461.0V553.8H460.0ZM461.0 539.4H462.0V551.8H461.0ZM462.0 533.2H463.0V556.0H462.0ZM463.0 539.4H464.0V558.4H463.0ZM464.0 542.8H465.0V564.4H464.0ZM465.0 545.4H466.0V558.4H465.0ZM466.0 539.4H467.0V568.2H466.0ZM467.0 544.1H468.0V564.4H467.0ZM468.0 539.4H469.0V561.2H468.0ZM469.0 542.8H470.0V561.2H469.0ZM470.0 546.8H471.0V564.4H470.0ZM471.0 548.4H472.0V578.7H471.0ZM472.0 553.8H473.0V572.8H472.0ZM473.0 551.8H474.0V587.1H473.0ZM474.0 546.8H475.0V561.2H474.0ZM475.0 550.0H476.0V561.2H475.0ZM476.0 550.0H477.0V578.7H476.0ZM477.0 551.8H478.0V572.8H477.0ZM478.0 551.8H479.0V587.1H478.0ZM479.0 558.4H480.0V587.1H479.0ZM480.0 561.2H481.0V578.7H480.0ZM481.0 558.4H482.0V601.5H481.0ZM482.0 568.2H483.0V601.5H482.0ZM483.0 558.4H484.0V587.1H483.0ZM484.0 564.4H485.0V601.5H484.0ZM485.0 564.4H486.0V615.3H485.0ZM486.0 561.2H487.0V601.5H486.0ZM487.0 561.2H488.0V601.5H487.0ZM488.0 564.4H489.0V587.1H488.0ZM489.0 561.2H490.0V587.1H489.0ZM490.0 558.4H491.0V587.1H490.0ZM491.0 564.4H492.0V601.5H491.0ZM492.0 564.4H493.0V615.3H492.0ZM493.0 561.2H494.0V615.3H493.0ZM494.0 561.2H495.0V615.3H494.0ZM495.0 568.2H496.0V601.5H495.0ZM496.0 558.4H497.0V601.5H496.0ZM497.0 561.2H498.0V615.3H497.0ZM498.0 564.4H499.0V587.1H498.0ZM499.0 572.8H500.0V615.3H499.0ZM500.0 568.2H501.0V615.3H500.0ZM501.0 564.4H502.0V615.3H501.0ZM502.0 568.2H503.0V615.3H502.0ZM503.0 558.4H504.0V601.5H503.0ZM504.0 572.8H505.0V615.3H504.0ZM505.0 578.7H506.0V615.3H505.0ZM506.0 572.8H507.0V615.3H506.0ZM507.0 572.8H508.0V601.5H507.0ZM508.0 578.7H509.0V615.3H508.0ZM509.0 587.1H510.0V615.3H509.0ZM510.0 578.7H511.0V615.3H510.0ZM511.0 578.7H512.0V615.3H511.0ZM512.0 572.8H513.0V615.3H512.0ZM513.0 578.7H514.0V615.3H513.0ZM514.0 572.8H515.0V615.3H514.0ZM515.0 578.7H516.0V615.3H515.0ZM516.0 587.1H517.0V615.3H516.0ZM517.0 587.1H518.0V615.3H517.0ZM518.0 568.2H519.0V615.3H518.0ZM519.0 587.1H520.0V615.3H519.0ZM520.0 568.2H521.0V615.3H520.0ZM521.0 572.8H522.0V615.3H521.0ZM522.0 578.7H523.0V615.3H522.0ZM523.0 578.7H524.0V615.3H523.0ZM524.0 572.8H525.0V615.3H524.0ZM525.0 578.7H526.0V615.3H525.0ZM526.0 578.7H527.0V615.3H526.0ZM527.0 578.7H528.0V615.3H527.0ZM528.0 572.8H529.0V615.3H528.0ZM529.0 578.7H530.0V615.3H529.0ZM530.0 578.7H531.0V615.3H530.0ZM531.0 587.1H532.0V615.3H531.0ZM532.0 587.1H533.0V615.3H532.0ZM533.0 572.8H534.0V615.3H533.0ZM534.0 578.7H535.0V615.3H534.0ZM535.0 578.7H536.0V615.3H535.0ZM536.0 587.1H537.0V615.3H536.0ZM537.0 587.1H538.0V615.3H537.0ZM538.0 572.8H539.0V615.3H538.0ZM539.0 587.1H540.0V615.3H539.0ZM540.0 572.8H541.0V615.3H540.0ZM541.0 601.5H542.0V615.3H541.0ZM542.0 587.1H543.0V615.3H542.0ZM543.0 587.1H544.0V615.3H543.0ZM544.0 587.1H545.0V615.3H544.0ZM545.0 578.7H546.0V615.3H545.0ZM546.0 578.7H547.0V615.3H546.0ZM547.0 601.5H548.0V615.3H547.0ZM548.0 587.1H549.0V615.3H548.0ZM549.0 578.7H550.0V615.3H549.0ZM550.0 587.1H551.0V615.3H550.0ZM551.0 587.1H552.0V615.3H551.0ZM552.0 587.1H553.0V615.3H552.0ZM553.0 587.1H554.0V615.3H553.0ZM554.0 587.1H555.0V615.3H554.0ZM555.0 601.5H556.0V615.3H555.0ZM556.0 587.1H557.0V615.3H556.0ZM557.0 587.1H558.0V615.3H557.0ZM558.0 601.5H559.0V615.3H558.0ZM559.0 578.7H560.0V615.3H559.0ZM560.0 601.5H561.0V615.3H560.0ZM561.0 587.1H562.0V615.3H561.0ZM562.0 601.5H563.0V615.3H562.0ZM563.0 587.1H564.0V615.3H563.0ZM564.0 587.1H565.0V615.3H564.0ZM565.0 587.1H566.0V615.3H565.0ZM566.0 601.5H567.0V615.3H566.0ZM567.0 601.5H568.0V615.3H567.0ZM568.0 601.5H569.0V615.3H568.0ZM569.0 587.1H570.0V615.3H569.0ZM570.0 601.5H571.0V615.3H570.0ZM571.0 587.1H572.0V615.3H571.0ZM572.0 587.1H573.0V615.3H572.0ZM573.0 587.1H574.0V615.3H573.0ZM574.0 601.5H575.0V615.3H574.0ZM575.0 587.1H576.0V615.3H575.0ZM576.0 587.1H577.0V615.3H576.0ZM577.0 587.1H578.0V615.3H577.0ZM578.0 601.5H579.0V615.3H578.0ZM579.0 578.7H580.0V615.3H579.0ZM580.0 578.7H581.0V615.3H580.0ZM581.0 578.7H582.0V615.3H581.0ZM582.0 578.7H583.0V615.3H582.0ZM583.0 601.5H584.0V615.3H583.0ZM584.0 601.5H585.0V615.3H584.0ZM585.0 601.5H586.0V615.3H585.0ZM586.0 587.1H587.0V615.3H586.0ZM587.0 587.1H588.0V615.3H587.0ZM588.0 587.1H589.0V615.3H588.0ZM589.0 587.1H590.0V615.3H589.0ZM590.0 578.7H591.0V615.3H590.0ZM591.0 587.1H592.0V615.3H591.0ZM592.0 601.5H593.0V615.3H592.0ZM593.0 578.7H594.0V615.3H593.0ZM594.0 578.7H595.0V615.3H594.0ZM595.0 578.7H596.0V615.3H595.0ZM596.0 578.7H597.0V615.3H596.0ZM597.0 578.7H598.0V615.3H597.0ZM598.0 587.1H599.0V615.3H598.0ZM599.0 587.1H600.0V615.3H599.0ZM600.0 587.1H601.0V615.3H600.0ZM601.0 601.5H602.0V615.3H601.0ZM602.0 578.7H603.0V615.3H602.0ZM603.0 578.7H604.0V615.3H603.0ZM604.0 578.7H605.0V615.3H604.0ZM605.0 578.7H606.0V615.3H605.0ZM606.0 601.5H607.0V615.3H606.0ZM607.0 587.1H608.0V615.3H607.0ZM608.0 587.1H609.0V615.3H608.0ZM609.0 587.1H610.0V615.3H609.0ZM610.0 601.5H611.0V615.3H610.0ZM611.0 587.1H612.0V615.3H611.0ZM612.0 587.1H613.0V615.3H612.0ZM613.0 601.5H614.0V615.3H613.0ZM614.0 601.5H615.0V615.3H614.0ZM615.0 601.5H616.0V615.3H615.0ZM616.0 578.7H617.0V615.3H616.0ZM617.0 587.1H618.0V615.3H617.0ZM618.0 572.8H619.0V615.3H618.0ZM619.0 601.5H620.0V615.3H619.0ZM620.0 601.5H621.0V615.3H620.0ZM621.0 587.1H622.0V615.3H621.0ZM622.0 578.7H623.0V615.3H622.0ZM623.0 587.1H624.0V615.3H623.0ZM624.0 601.5H625.0V615.3H624.0ZM625.0 601.5H626.0V615.3H625.0ZM626.0 587.1H627.0V615.3H626.0ZM627.0 587.1H628.0V615.3H627.0ZM628.0 587.1H629.0V615.3H628.0ZM629.0 578.7H630.0V615.3H629.0ZM630.0 587.1H631.0V615.3H630.0ZM631.0 587.1H632.0V615.3H631.0ZM632.0 587.1H633.0V615.3H632.0ZM633.0 601.5H634.0V615.3H633.0ZM634.0 601.5H635.0V615.3H634.0ZM635.0 587.1H636.0V615.3H635.0ZM636.0 578.7H637.0V615.3H636.0ZM637.0 578.7H638.0V615.3H637.0ZM638.0 601.5H639.0V615.3H638.0ZM639.0 587.1H640.0V615.3H639.0ZM640.0 587.1H641.0V615.3H640.0ZM641.0 587.1H642.0V615.3H641.0ZM642.0 587.1H643.0V615.3H642.0ZM643.0 587.1H644.0V615.3H643.0ZM644.0 601.5H645.0V615.3H644.0ZM645.0 587.1H646.0V615.3H645.0Z" fill="#22a03b"/><path clip-path="url(#cu)" d="M383.0 451.5H384.0V476.6H383.0ZM384.0 453.4H385.0V467.4H384.0ZM385.0 467.4H386.0V483.1H385.0ZM386.0 483.1H387.0V497.7H386.0ZM387.0 495.9H388.0V512.6H387.0ZM388.0 512.6H389.0V535.7H388.0ZM389.0 530.4H390.0V542.8H389.0ZM390.0 537.5H391.0V561.2H390.0ZM391.0 553.8H392.0V587.1H391.0ZM392.0 558.4H393.0V601.5H392.0ZM393.0 568.2H394.0V615.3H393.0ZM394.0 587.1H395.0V615.3H394.0ZM395.0 601.5H396.0V615.3H395.0ZM396.0 601.5H397.0V615.3H396.0ZM397.0 601.5H398.0V615.3H397.0ZM398.0 601.5H399.0V615.3H398.0ZM400.0 587.1H401.0V615.3H400.0ZM401.0 601.5H402.0V615.3H401.0ZM402.0 572.8H403.0V615.3H402.0ZM403.0 572.8H404.0V615.3H403.0ZM404.0 601.5H405.0V615.3H404.0ZM405.0 601.5H406.0V615.3H405.0ZM406.0 601.5H407.0V615.3H406.0ZM407.0 587.1H408.0V615.3H407.0ZM408.0 601.5H409.0V615.3H408.0ZM409.0 587.1H410.0V615.3H409.0ZM410.0 601.5H411.0V615.3H410.0ZM411.0 587.1H412.0V615.3H411.0ZM412.0 587.1H413.0V615.3H412.0ZM413.0 601.5H414.0V615.3H413.0ZM414.0 601.5H415.0V615.3H414.0ZM415.0 601.5H416.0V615.3H415.0ZM416.0 587.1H417.0V615.3H416.0ZM417.0 601.5H418.0V615.3H417.0ZM418.0 601.5H419.0V615.3H418.0ZM419.0 601.5H420.0V615.3H419.0ZM420.0 601.5H421.0V615.3H420.0ZM421.0 601.5H422.0V615.3H421.0ZM422.0 601.5H423.0V615.3H422.0ZM423.0 578.7H424.0V615.3H423.0ZM424.0 601.5H425.0V615.3H424.0ZM425.0 601.5H426.0V615.3H425.0ZM426.0 587.1H427.0V615.3H426.0ZM427.0 601.5H428.0V615.3H427.0ZM428.0 601.5H429.0V615.3H428.0ZM429.0 601.5H430.0V615.3H429.0ZM430.0 587.1H431.0V615.3H430.0ZM431.0 601.5H432.0V615.3H431.0ZM432.0 601.5H433.0V615.3H432.0ZM433.0 601.5H434.0V615.3H433.0ZM434.0 587.1H435.0V615.3H434.0ZM435.0 601.5H436.0V615.3H435.0ZM436.0 601.5H437.0V615.3H436.0ZM437.0 587.1H438.0V615.3H437.0ZM438.0 601.5H439.0V615.3H438.0ZM439.0 601.5H440.0V615.3H439.0ZM440.0 601.5H441.0V615.3H440.0ZM441.0 587.1H442.0V615.3H441.0ZM442.0 601.5H443.0V615.3H442.0ZM443.0 601.5H444.0V615.3H443.0ZM444.0 587.1H445.0V615.3H444.0ZM445.0 587.1H446.0V615.3H445.0ZM446.0 601.5H447.0V615.3H446.0ZM447.0 601.5H448.0V615.3H447.0ZM448.0 587.1H449.0V615.3H448.0ZM449.0 587.1H450.0V615.3H449.0ZM450.0 587.1H451.0V615.3H450.0ZM452.0 587.1H453.0V615.3H452.0ZM453.0 601.5H454.0V615.3H453.0ZM454.0 601.5H455.0V615.3H454.0ZM455.0 601.5H456.0V615.3H455.0ZM456.0 601.5H457.0V615.3H456.0ZM459.0 601.5H460.0V615.3H459.0ZM460.0 601.5H461.0V615.3H460.0ZM461.0 601.5H462.0V615.3H461.0ZM462.0 587.1H463.0V615.3H462.0ZM463.0 601.5H464.0V615.3H463.0ZM464.0 601.5H465.0V615.3H464.0ZM465.0 601.5H466.0V615.3H465.0ZM466.0 601.5H467.0V615.3H466.0ZM467.0 601.5H468.0V615.3H467.0ZM468.0 587.1H469.0V615.3H468.0ZM469.0 587.1H470.0V615.3H469.0ZM470.0 587.1H471.0V615.3H470.0ZM471.0 601.5H472.0V615.3H471.0ZM472.0 601.5H473.0V615.3H472.0ZM473.0 601.5H474.0V615.3H473.0ZM474.0 587.1H475.0V615.3H474.0ZM475.0 587.1H476.0V615.3H475.0ZM476.0 601.5H477.0V615.3H476.0ZM477.0 601.5H478.0V615.3H477.0ZM478.0 601.5H479.0V615.3H478.0ZM479.0 587.1H480.0V615.3H479.0ZM480.0 601.5H481.0V615.3H480.0ZM481.0 601.5H482.0V615.3H481.0ZM482.0 587.1H483.0V615.3H482.0ZM483.0 587.1H484.0V615.3H483.0ZM484.0 587.1H485.0V615.3H484.0ZM486.0 601.5H487.0V615.3H486.0ZM487.0 601.5H488.0V615.3H487.0ZM496.0 601.5H497.0V615.3H496.0ZM510.0 601.5H511.0V615.3H510.0ZM511.0 601.5H512.0V615.3H511.0ZM515.0 601.5H516.0V615.3H515.0ZM516.0 601.5H517.0V615.3H516.0ZM527.0 601.5H528.0V615.3H527.0ZM530.0 601.5H531.0V615.3H530.0ZM555.0 601.5H556.0V615.3H555.0ZM556.0 601.5H557.0V615.3H556.0ZM576.0 601.5H577.0V615.3H576.0ZM591.0 601.5H592.0V615.3H591.0ZM596.0 601.5H597.0V615.3H596.0ZM597.0 601.5H598.0V615.3H597.0ZM610.0 601.5H611.0V615.3H610.0ZM615.0 601.5H616.0V615.3H615.0ZM620.0 601.5H621.0V615.3H620.0Z" fill="#ff1010"/><polyline clip-path="url(#cu)" points="338.9,611.2 339.1,610.4 339.3,609.7 339.5,609.1 339.7,608.6 339.9,608.2 340.1,607.8 340.3,607.6 340.6,607.5 340.8,607.5 341.0,607.5 341.2,607.7 341.4,607.9 341.6,608.3 341.8,608.7 342.0,609.3 342.2,609.9 342.4,610.7 342.6,611.5 342.8,612.4 343.0,613.4 343.2,614.6 343.4,615.8 343.6,617.1 343.8,618.5 344.0,620.0 344.2,621.6 344.4,623.3 344.6,625.1 344.8,627.0 345.0,628.9 345.2,631.0 345.4,633.2 345.6,635.4 345.8,637.8 346.0,640.2 346.2,642.8 346.4,645.4 346.7,648.1 346.9,650.9 347.1,653.8 347.3,656.8 347.5,659.8 347.7,662.9 347.9,666.0 348.1,669.1 348.3,672.2 348.5,675.2 348.7,678.2 348.9,680.9 349.1,683.4 349.3,685.5 349.5,687.2 349.7,688.4 349.9,688.9 350.1,688.9 350.3,688.4 350.5,687.3 350.7,685.8 350.9,684.0 351.1,681.9 351.3,679.7 351.5,677.3 351.7,674.9 351.9,672.5 352.1,670.0 352.3,667.5 352.5,665.1 352.8,662.7 353.0,660.3 353.2,658.0 353.4,655.7 353.6,653.5 353.8,651.3 354.0,649.1 354.2,647.0 354.4,644.9 354.6,642.9 354.8,641.0 355.0,639.1 355.2,637.2 355.4,635.4 355.6,633.6 355.8,631.9 356.0,630.2 356.2,628.6 356.4,627.0 356.6,625.5 356.8,624.0 357.0,622.6 357.2,621.2 357.4,619.9 357.6,618.6 357.8,617.4 358.0,616.2 358.2,615.1 358.4,614.0 358.6,613.0 358.9,612.0 359.1,611.1 359.3,610.2 359.5,609.3 359.7,608.5 359.9,607.8 360.1,607.1 360.3,606.5 360.5,605.9 360.7,605.3 360.9,604.8 361.1,604.4 361.3,604.0 361.5,603.6 361.7,603.3 361.9,603.1 362.1,602.9 362.3,602.7 362.5,602.6 362.7,602.6 362.9,602.6 363.1,602.6 363.3,602.7 363.5,602.8 363.7,603.0 363.9,603.3 364.1,603.5 364.3,603.9 364.5,604.3 364.7,604.7 365.0,605.2 365.2,605.7 365.4,606.3 365.6,606.9 365.8,607.6 366.0,608.3 366.2,609.1 366.4,609.9 366.6,610.8 366.8,611.7 367.0,612.7 367.2,613.7 367.4,614.8 367.6,615.9 367.8,617.1 368.0,618.3 368.2,619.5 368.4,620.8 368.6,622.2 368.8,623.6 369.0,625.1 369.2,626.6 369.4,628.1 369.6,629.7 369.8,631.4 370.0,633.1 370.2,634.9 370.4,636.7 370.6,638.5 370.8,640.4 371.1,642.4 371.3,644.4 371.5,646.4 371.7,648.5 371.9,650.6 372.1,652.8 372.3,655.1 372.5,657.4 372.7,659.7 372.9,662.1 373.1,664.5 373.3,667.0 373.5,669.5 373.7,672.1 373.9,674.8 374.1,677.4 374.3,680.2 374.5,682.9 374.7,685.8 374.9,688.6 375.1,691.6 375.3,694.5 375.5,697.6 375.7,700.6 375.9,703.8 376.1,706.9 376.3,710.1 376.5,713.4 376.7,716.7 376.9,720.1 377.2,723.5 377.4,727.0 377.6,730.5 377.8,734.0 378.0,737.7 378.2,741.3 378.4,744.6 378.6,744.6 378.8,744.6 379.0,744.6 379.2,744.6 379.4,744.6 379.6,744.6 379.8,744.6 380.0,744.6 380.2,744.6 380.4,669.7 380.6,628.4 380.8,603.8 381.0,586.3 381.2,572.6 381.4,561.4 381.6,551.9 381.8,543.6 382.0,536.4 382.2,529.9 382.4,524.0 382.6,518.6 382.8,513.6 383.0,509.1 383.2,504.8 383.5,500.8 383.7,497.0 383.9,493.5 384.1,490.1 384.3,487.0 384.5,483.9 384.7,481.1 384.9,478.3 385.1,475.7 385.3,473.1 385.5,470.7 385.7,468.4 385.9,466.1 386.1,463.9 386.3,463.3 386.5,463.5 386.7,463.8 386.9,464.0 387.1,464.2 387.3,464.4 387.5,464.7 387.7,464.9 387.9,465.1 388.1,465.3 388.3,465.6 388.5,465.8 388.7,466.0 388.9,466.2 389.1,466.5 389.3,466.7 389.6,466.9 389.8,467.1 390.0,467.3 390.2,467.6 390.4,467.8 390.6,468.0 390.8,468.2 391.0,468.5 391.2,468.7 391.4,468.9 391.6,469.1 391.8,469.4 392.0,469.6 392.2,469.8 392.4,470.0 392.6,470.3 392.8,470.5 393.0,470.7 393.2,470.9 393.4,471.1 393.6,471.4 393.8,471.6 394.0,471.8 394.2,472.0 394.4,472.3 394.6,472.5 394.8,472.7 395.0,472.9 395.2,473.2 395.4,473.4 395.7,473.6 395.9,473.8 396.1,474.1 396.3,474.3 396.5,474.5 396.7,474.7 396.9,475.0 397.1,475.2 397.3,475.4 397.5,475.6 397.7,475.8 397.9,476.1 398.1,476.3 398.3,476.5 398.5,476.7 398.7,477.0 398.9,477.2 399.1,477.4 399.3,477.6 399.5,477.9 399.7,478.1 399.9,478.3 400.1,478.5 400.3,478.8 400.5,479.0 400.7,479.2 400.9,479.4 401.1,479.6 401.3,479.9 401.5,480.1 401.8,480.3 402.0,480.5 402.2,480.8 402.4,481.0 402.6,481.2 402.8,481.4 403.0,481.7 403.2,481.9 403.4,482.1 403.6,482.3 403.8,482.6 404.0,482.8 404.2,483.0 404.4,483.2 404.6,483.4 404.8,483.7 405.0,483.9 405.2,484.1 405.4,484.3 405.6,484.6 405.8,484.8 406.0,485.0 406.2,485.2 406.4,485.5 406.6,485.7 406.8,485.9 407.0,486.1 407.2,486.4 407.4,486.6 407.6,486.8 407.9,487.0 408.1,487.2 408.3,487.5 408.5,487.7 408.7,487.9 408.9,488.1 409.1,488.4 409.3,488.6 409.5,488.8 409.7,489.0 409.9,489.3 410.1,489.5 410.3,489.7 410.5,489.9 410.7,490.2 410.9,490.4 411.1,490.6 411.3,490.8 411.5,491.0 411.7,491.3 411.9,491.5 412.1,491.7 412.3,491.9 412.5,492.2 412.7,492.4 412.9,492.6 413.1,492.8 413.3,493.1 413.5,493.3 413.7,493.5 414.0,493.7 414.2,494.0 414.4,494.2 414.6,494.4 414.8,494.6 415.0,494.9 415.2,495.1 415.4,495.3 415.6,495.5 415.8,495.7 416.0,496.0 416.2,496.2 416.4,496.4 416.6,496.6 416.8,496.9 417.0,497.1 417.2,497.3 417.4,497.5 417.6,497.8 417.8,498.0 418.0,498.2 418.2,498.4 418.4,498.7 418.6,498.9 418.8,499.1 419.0,499.3 419.2,499.5 419.4,499.8 419.6,500.0 419.8,500.2 420.1,500.4 420.3,500.7 420.5,500.9 420.7,501.1 420.9,501.3 421.1,501.6 421.3,501.8 421.5,502.0 421.7,502.2 421.9,502.5 422.1,502.7 422.3,502.9 422.5,503.1 422.7,503.3 422.9,503.6 423.1,503.8 423.3,504.0 423.5,504.2 423.7,504.5 423.9,504.7 424.1,504.9 424.3,505.1 424.5,505.4 424.7,505.6 424.9,505.8 425.1,506.0 425.3,506.3 425.5,506.5 425.7,506.7 425.9,506.9 426.2,507.1 426.4,507.4 426.6,507.6 426.8,507.8 427.0,508.0 427.2,508.3 427.4,508.5 427.6,508.7 427.8,508.9 428.0,509.2 428.2,509.4 428.4,509.6 428.6,509.8 428.8,510.1 429.0,510.3 429.2,510.5 429.4,510.7 429.6,510.9 429.8,511.2 430.0,511.4 430.2,511.6 430.4,511.8 430.6,512.1 430.8,512.3 431.0,512.5 431.2,512.7 431.4,513.0 431.6,513.2 431.8,513.4 432.0,513.6 432.2,513.9 432.5,514.1 432.7,514.3 432.9,514.5 433.1,514.8 433.3,515.0 433.5,515.2 433.7,515.4 433.9,515.6 434.1,515.9 434.3,516.1 434.5,516.3 434.7,516.5 434.9,516.8 435.1,517.0 435.3,517.2 435.5,517.4 435.7,517.7 435.9,517.9 436.1,518.1 436.3,518.3 436.5,518.6 436.7,518.8 436.9,519.0 437.1,519.2 437.3,519.4 437.5,519.7 437.7,519.9 437.9,520.1 438.1,520.3 438.3,520.6 438.6,520.8 438.8,521.0 439.0,521.2 439.2,521.5 439.4,521.7 439.6,521.9 439.8,522.1 440.0,522.4 440.2,522.6 440.4,522.8 440.6,523.0 440.8,523.2 441.0,523.5 441.2,523.7 441.4,523.9 441.6,524.1 441.8,524.4 442.0,524.6 442.2,524.8 442.4,525.0 442.6,525.3 442.8,525.5 443.0,525.7 443.2,525.9 443.4,526.2 443.6,526.4 443.8,526.6 444.0,526.8 444.2,527.0 444.4,527.3 444.7,527.5 444.9,527.7 445.1,527.9 445.3,528.2 445.5,528.4 445.7,528.6 445.9,528.8 446.1,529.1 446.3,529.3 446.5,529.5 446.7,529.7 446.9,530.0 447.1,530.2 447.3,530.4 447.5,530.6 447.7,530.9 447.9,531.1 448.1,531.3 448.3,531.5 448.5,531.7 448.7,532.0 448.9,532.2 449.1,532.4 449.3,532.6 449.5,532.9 449.7,533.1 449.9,533.3 450.1,533.5 450.3,533.8 450.5,534.0 450.8,534.2 451.0,534.4 451.2,534.7 451.4,534.9 451.6,535.1 451.8,535.3 452.0,535.5 452.2,535.8 452.4,536.0 452.6,536.2 452.8,536.4 453.0,536.7 453.2,536.9 453.4,537.1 453.6,537.3 453.8,537.6 454.0,537.8 454.2,538.0 454.4,538.2 454.6,538.5 454.8,538.7 455.0,538.9 455.2,539.1 455.4,539.3 455.6,539.6 455.8,539.8 456.0,540.0 456.2,540.2 456.4,540.5 456.6,540.7 456.9,540.9 457.1,541.1 457.3,541.4 457.5,541.6 457.7,541.8 457.9,542.0 458.1,542.3 458.3,542.5 458.5,542.7 458.7,542.9 458.9,543.1 459.1,543.4 459.3,543.6 459.5,543.8 459.7,544.0 459.9,544.3 460.1,544.5 460.3,544.7 460.5,544.9 460.7,545.2 460.9,545.4 461.1,545.6 461.3,545.8 461.5,546.1 461.7,546.3 461.9,546.5 462.1,546.7 462.3,546.9 462.5,547.2 462.7,547.4 463.0,547.6 463.2,547.8 463.4,548.1 463.6,548.3 463.8,548.5 464.0,548.7 464.2,549.0 464.4,549.2 464.6,549.4 464.8,549.6 465.0,549.9 465.2,550.1 465.4,550.3 465.6,550.5 465.8,550.8 466.0,551.0 466.2,551.2 466.4,551.4 466.6,551.6 466.8,551.9 467.0,552.1 467.2,552.3 467.4,552.5 467.6,552.8 467.8,553.0 468.0,553.2 468.2,553.4 468.4,553.7 468.6,553.9 468.8,554.1 469.1,554.3 469.3,554.6 469.5,554.8 469.7,555.0 469.9,555.2 470.1,555.4 470.3,555.7 470.5,555.9 470.7,556.1 470.9,556.3 471.1,556.6 471.3,556.8 471.5,557.0 471.7,557.2 471.9,557.5 472.1,557.7 472.3,557.9 472.5,558.1 472.7,558.4 472.9,558.6 473.1,558.8 473.3,559.0 473.5,559.2 473.7,559.5 473.9,559.7 474.1,559.9 474.3,560.1 474.5,560.4 474.7,560.6 474.9,560.8 475.2,561.0 475.4,561.3 475.6,561.5 475.8,561.7 476.0,561.9 476.2,562.2 476.4,562.4 476.6,562.6 476.8,562.8 477.0,563.0 477.2,563.3 477.4,563.5 477.6,563.7 477.8,563.9 478.0,564.2 478.2,564.4 478.4,564.6 478.6,564.8 478.8,565.1 479.0,565.3 479.2,565.5 479.4,565.7 479.6,566.0 479.8,566.2 480.0,566.4 480.2,566.6 480.4,566.8 480.6,567.1 480.8,567.3 481.0,567.5 481.2,567.7 481.5,568.0 481.7,568.2 481.9,568.4 482.1,568.6 482.3,568.9 482.5,569.1 482.7,569.3 482.9,569.5 483.1,569.8 483.3,570.0 483.5,570.2 483.7,570.4 483.9,570.6 484.1,570.9 484.3,571.1 484.5,571.3 484.7,571.5 484.9,571.8 485.1,572.0 485.3,572.2 485.5,572.4 485.7,572.7 485.9,572.9 486.1,573.1 486.3,573.3 486.5,573.6 486.7,573.8 486.9,574.0 487.1,574.2 487.3,574.4 487.6,574.7 487.8,574.9 488.0,575.1 488.2,575.3 488.4,575.6 488.6,575.8 488.8,576.0 489.0,576.2 489.2,576.4 489.4,576.7 489.6,576.9 489.8,577.1 490.0,577.3 490.2,577.5 490.4,577.8 490.6,578.0 490.8,578.2 491.0,578.4 491.2,578.6 491.4,578.9 491.6,579.1 491.8,579.3 492.0,579.5 492.2,579.7 492.4,579.9 492.6,580.2 492.8,580.4 493.0,580.6 493.2,580.8 493.4,581.0 493.7,581.2 493.9,581.4 494.1,581.6 494.3,581.9 494.5,582.1 494.7,582.3 494.9,582.5 495.1,582.7 495.3,582.9 495.5,583.1 495.7,583.3 495.9,583.5 496.1,583.7 496.3,583.9 496.5,584.1 496.7,584.3 496.9,584.5 497.1,584.7 497.3,584.8 497.5,585.0 497.7,585.2 497.9,585.4 498.1,585.6 498.3,585.8 498.5,585.9 498.7,586.1 498.9,586.3 499.1,586.5 499.3,586.6 499.5,586.8 499.8,587.0 500.0,587.1 500.2,587.3 500.4,587.4 500.6,587.6 500.8,587.8 501.0,587.9 501.2,588.0 501.4,588.2 501.6,588.3 501.8,588.5 502.0,588.6 502.2,588.7 502.4,588.9 502.6,589.0 502.8,589.1 503.0,589.3 503.2,589.4 503.4,589.5 503.6,589.6 503.8,589.7 504.0,589.8 504.2,589.9 504.4,590.1 504.6,590.2 504.8,590.3 505.0,590.4 505.2,590.5 505.4,590.6 505.6,590.7 505.9,590.8 506.1,590.9 506.3,591.0 506.5,591.1 506.7,591.1 506.9,591.2 507.1,591.3 507.3,591.4 507.5,591.5 507.7,591.6 507.9,591.7 508.1,591.8 508.3,591.9 508.5,592.0 508.7,592.1 508.9,592.2 509.1,592.3 509.3,592.4 509.5,592.5 509.7,592.6 509.9,592.7 510.1,592.8 510.3,592.9 510.5,593.0 510.7,593.1 510.9,593.2 511.1,593.4 511.3,593.5 511.5,593.6 511.7,593.7 512.0,593.9 512.2,594.0 512.4,594.1 512.6,594.3 512.8,594.4 513.0,594.6 513.2,594.7 513.4,594.9 513.6,595.0 513.8,595.2 514.0,595.4 514.2,595.6 514.4,595.7 514.6,595.9 514.8,596.1 515.0,596.3 515.2,596.5 515.4,596.7 515.6,596.9 515.8,597.1 516.0,597.4 516.2,597.6 516.4,597.8 516.6,598.0 516.8,598.3 517.0,598.5 517.2,598.8 517.4,599.0 517.6,599.3 517.8,599.5 518.1,599.8 518.3,600.1 518.5,600.3 518.7,600.6 518.9,600.9 519.1,601.2 519.3,601.5 519.5,601.8 519.7,602.1 519.9,602.4 520.1,602.7 520.3,603.0 520.5,603.3 520.7,603.6 520.9,604.0 521.1,604.3 521.3,604.6 521.5,604.9 521.7,605.3 521.9,605.6 522.1,605.9 522.3,606.3 522.5,606.6 522.7,607.0 522.9,607.3 523.1,607.7 523.3,608.0 523.5,608.4 523.7,608.7 523.9,609.1 524.2,609.4 524.4,609.8 524.6,610.1 524.8,610.5 525.0,610.8 525.2,611.2 525.4,611.5 525.6,611.9 525.8,612.3 526.0,612.6 526.2,613.0 526.4,613.3 526.6,613.7 526.8,614.0 527.0,614.4 527.2,614.7 527.4,615.0 527.6,615.4 527.8,615.7 528.0,616.1 528.2,616.4 528.4,616.7 528.6,617.1 528.8,617.4 529.0,617.7 529.2,618.1 529.4,618.4 529.6,618.7 529.8,619.0 530.0,619.3 530.3,619.7 530.5,620.0 530.7,620.3 530.9,620.6 531.1,620.9 531.3,621.2 531.5,621.5 531.7,621.8 531.9,622.1 532.1,622.4 532.3,622.7 532.5,622.9 532.7,623.2 532.9,623.5 533.1,623.8 533.3,624.1 533.5,624.3 533.7,624.6 533.9,624.9 534.1,625.2 534.3,625.4 534.5,625.7 534.7,625.9 534.9,626.2 535.1,626.5 535.3,626.7 535.5,627.0 535.7,627.2 535.9,627.5 536.1,627.7 536.3,628.0 536.6,628.2 536.8,628.5 537.0,628.7 537.2,629.0 537.4,629.2 537.6,629.4 537.8,629.7 538.0,629.9 538.2,630.2 538.4,630.4 538.6,630.6 538.8,630.9 539.0,631.1 539.2,631.3 539.4,631.6 539.6,631.8 539.8,632.0 540.0,632.3 540.2,632.5 540.4,632.7 540.6,633.0 540.8,633.2 541.0,633.4 541.2,633.6 541.4,633.9 541.6,634.1 541.8,634.3 542.0,634.6 542.2,634.8 542.4,635.0 542.7,635.2 542.9,635.5 543.1,635.7 543.3,635.9 543.5,636.1 543.7,636.4 543.9,636.6 544.1,636.8 544.3,637.0 544.5,637.3 544.7,637.5 544.9,637.7 545.1,637.9 545.3,638.2 545.5,638.4 545.7,638.6 545.9,638.8 546.1,639.1 546.3,639.3 546.5,639.5 546.7,639.7 546.9,640.0 547.1,640.2 547.3,640.4 547.5,640.6 547.7,640.9 547.9,641.1 548.1,641.3 548.3,641.5 548.5,641.8 548.8,642.0 549.0,642.2 549.2,642.4 549.4,642.6 549.6,642.9 549.8,643.1 550.0,643.3 550.2,643.5 550.4,643.8 550.6,644.0 550.8,644.2 551.0,644.4 551.2,644.7 551.4,644.9 551.6,645.1 551.8,645.3 552.0,645.6 552.2,645.8 552.4,646.0 552.6,646.2 552.8,646.5 553.0,646.7 553.2,646.9 553.4,647.1 553.6,647.3 553.8,647.6 554.0,647.8 554.2,648.0 554.4,648.2 554.6,648.5 554.9,648.7 555.1,648.9 555.3,649.1 555.5,649.4 555.7,649.6 555.9,649.8 556.1,650.0 556.3,650.3 556.5,650.5 556.7,650.7 556.9,650.9 557.1,651.1 557.3,651.4 557.5,651.6 557.7,651.8 557.9,652.0 558.1,652.3 558.3,652.5 558.5,652.7 558.7,652.9 558.9,653.2 559.1,653.4 559.3,653.6 559.5,653.8 559.7,654.1 559.9,654.3 560.1,654.5 560.3,654.7 560.5,654.9 560.7,655.2 561.0,655.4 561.2,655.6 561.4,655.8 561.6,656.1 561.8,656.3 562.0,656.5 562.2,656.7 562.4,657.0 562.6,657.2 562.8,657.4 563.0,657.6 563.2,657.9 563.4,658.1 563.6,658.3 563.8,658.5 564.0,658.7 564.2,659.0 564.4,659.2 564.6,659.4 564.8,659.6 565.0,659.9 565.2,660.1 565.4,660.3 565.6,660.5 565.8,660.8 566.0,661.0 566.2,661.2 566.4,661.4 566.6,661.7 566.8,661.9 567.1,662.1 567.3,662.3 567.5,662.6 567.7,662.8 567.9,663.0 568.1,663.2 568.3,663.4 568.5,663.7 568.7,663.9 568.9,664.1 569.1,664.3 569.3,664.6 569.5,664.8 569.7,665.0 569.9,665.2 570.1,665.5 570.3,665.7 570.5,665.9 570.7,666.1 570.9,666.4 571.1,666.6 571.3,666.8 571.5,667.0 571.7,667.2 571.9,667.5 572.1,667.7 572.3,667.9 572.5,668.1 572.7,668.4 572.9,668.6 573.2,668.8 573.4,669.0 573.6,669.3 573.8,669.5 574.0,669.7 574.2,669.9 574.4,670.2 574.6,670.4 574.8,670.6 575.0,670.8 575.2,671.0 575.4,671.3 575.6,671.5 575.8,671.7 576.0,671.9 576.2,672.2 576.4,672.4 576.6,672.6 576.8,672.8 577.0,673.1 577.2,673.3 577.4,673.5 577.6,673.7 577.8,674.0 578.0,674.2 578.2,674.4 578.4,674.6 578.6,674.8 578.8,675.1 579.0,675.3 579.3,675.5 579.5,675.7 579.7,676.0 579.9,676.2 580.1,676.4 580.3,676.6 580.5,676.9 580.7,677.1 580.9,677.3 581.1,677.5 581.3,677.8 581.5,678.0 581.7,678.2 581.9,678.4 582.1,678.6 582.3,678.9 582.5,679.1 582.7,679.3 582.9,679.5 583.1,679.8 583.3,680.0 583.5,680.2 583.7,680.4 583.9,680.7 584.1,680.9 584.3,681.1 584.5,681.3 584.7,681.6 584.9,681.8 585.1,682.0 585.3,682.2 585.6,682.5 585.8,682.7 586.0,682.9 586.2,683.1 586.4,683.3 586.6,683.6 586.8,683.8 587.0,684.0 587.2,684.2 587.4,684.5 587.6,684.7 587.8,684.9 588.0,685.1 588.2,685.4 588.4,685.6 588.6,685.8 588.8,686.0 589.0,686.3 589.2,686.5 589.4,686.7 589.6,686.9 589.8,687.1 590.0,687.4 590.2,687.6 590.4,687.8 590.6,688.0 590.8,688.3 591.0,688.5 591.2,688.7 591.4,688.9 591.7,689.2 591.9,689.4 592.1,689.6 592.3,689.8 592.5,690.1 592.7,690.3 592.9,690.5 593.1,690.7 593.3,690.9 593.5,691.2 593.7,691.4 593.9,691.6 594.1,691.8 594.3,692.1 594.5,692.3 594.7,692.5 594.9,692.7 595.1,693.0 595.3,693.2 595.5,693.4 595.7,693.6 595.9,693.9 596.1,694.1 596.3,694.3 596.5,694.5 596.7,694.7 596.9,695.0 597.1,695.2 597.3,695.4 597.5,695.6 597.8,695.9 598.0,696.1 598.2,696.3 598.4,696.5 598.6,696.8 598.8,697.0 599.0,697.2 599.2,697.4 599.4,697.7 599.6,697.9 599.8,698.1 600.0,698.3 600.2,698.6 600.4,698.8 600.6,699.0 600.8,699.2 601.0,699.4 601.2,699.7 601.4,699.9 601.6,700.1 601.8,700.3 602.0,700.6 602.2,700.8 602.4,701.0 602.6,701.2 602.8,701.5 603.0,701.7 603.2,701.9 603.4,702.1 603.6,702.4 603.9,702.6 604.1,702.8 604.3,703.0 604.5,703.2 604.7,703.5 604.9,703.7 605.1,703.9 605.3,704.1 605.5,704.4 605.7,704.6 605.9,704.8 606.1,705.0 606.3,705.3 606.5,705.5 606.7,705.7 606.9,705.9 607.1,706.2 607.3,706.4 607.5,706.6 607.7,706.8 607.9,707.0 608.1,707.3 608.3,707.5 608.5,707.7 608.7,707.9 608.9,708.2 609.1,708.4 609.3,708.6 609.5,708.8 609.7,709.1 610.0,709.3 610.2,709.5 610.4,709.7 610.6,710.0 610.8,710.2 611.0,710.4 611.2,710.6 611.4,710.8 611.6,711.1 611.8,711.3 612.0,711.5 612.2,711.7 612.4,712.0 612.6,712.2 612.8,712.4 613.0,712.6 613.2,712.9 613.4,713.1 613.6,713.3 613.8,713.5 614.0,713.8 614.2,714.0 614.4,714.2 614.6,714.4 614.8,714.6 615.0,714.9 615.2,715.1 615.4,715.3 615.6,715.5 615.8,715.8 616.1,716.0 616.3,716.2 616.5,716.4 616.7,716.7 616.9,716.9 617.1,717.1 617.3,717.3 617.5,717.6 617.7,717.8 617.9,718.0 618.1,718.2 618.3,718.5 618.5,718.7 618.7,718.9 618.9,719.1 619.1,719.3 619.3,719.6 619.5,719.8 619.7,720.0 619.9,720.2 620.1,720.5 620.3,720.7 620.5,720.9 620.7,721.1 620.9,721.4 621.1,721.6 621.3,721.8 621.5,722.0 621.7,722.3 621.9,722.5 622.2,722.7 622.4,722.9 622.6,723.1 622.8,723.4 623.0,723.6 623.2,723.8 623.4,724.0 623.6,724.3 623.8,724.5 624.0,724.7 624.2,724.9 624.4,725.2 624.6,725.4 624.8,725.6 625.0,725.8 625.2,726.1 625.4,726.3 625.6,726.5 625.8,726.7 626.0,726.9 626.2,727.2 626.4,727.4 626.6,727.6 626.8,727.8 627.0,728.1 627.2,728.3 627.4,728.5 627.6,728.7 627.8,729.0 628.0,729.2 628.3,729.4 628.5,729.6 628.7,729.9 628.9,730.1 629.1,730.3 629.3,730.5 629.5,730.7 629.7,731.0 629.9,731.2 630.1,731.4 630.3,731.6 630.5,731.9 630.7,732.1 630.9,732.3 631.1,732.5 631.3,732.8 631.5,733.0 631.7,733.2 631.9,733.4 632.1,733.7 632.3,733.9 632.5,734.1 632.7,734.3 632.9,734.5 633.1,734.8 633.3,735.0 633.5,735.2 633.7,735.4 633.9,735.7 634.1,735.9 634.3,736.1 634.6,736.3 634.8,736.6 635.0,736.8 635.2,737.0 635.4,737.2 635.6,737.5 635.8,737.7 636.0,737.9 636.2,738.1 636.4,738.4 636.6,738.6 636.8,738.8 637.0,739.0 637.2,739.2 637.4,739.5 637.6,739.7 637.8,739.9 638.0,740.1 638.2,740.4 638.4,740.6 638.6,740.8 638.8,741.0 639.0,741.3 639.2,741.5 639.4,741.7 639.6,741.9 639.8,742.2 640.0,742.4 640.2,742.6 640.4,742.8 640.7,743.0 640.9,743.3 641.1,743.5 641.3,743.7 641.5,743.9 641.7,744.2 641.9,744.4 642.1,744.6 642.3,744.6 642.5,744.6 642.7,744.6 642.9,744.6 643.1,744.6 643.3,744.6 643.5,744.6 643.7,744.6 643.9,744.6 644.1,744.6 644.3,744.6 644.5,744.6 644.7,744.6 644.9,744.6 645.1,744.6 645.3,744.6 645.5,744.6" fill="none" stroke="#000" stroke-width="2"/><path clip-path="url(#cr)" d="M347.0 630.3H348.0V647.6H347.0ZM348.0 630.3H349.0V647.6H348.0ZM349.0 630.3H350.0V649.9H349.0ZM350.0 628.7H351.0V649.9H350.0ZM351.0 628.7H352.0V649.9H351.0ZM352.0 628.7H353.0V650.7H352.0ZM353.0 622.4H354.0V650.7H353.0ZM354.0 622.4H355.0V650.7H354.0ZM355.0 631.3H356.0V647.0H355.0ZM356.0 631.3H357.0V647.0H356.0ZM357.0 629.3H358.0V647.0H357.0ZM358.0 630.1H359.0V659.0H358.0ZM359.0 630.1H360.0V659.0H359.0ZM360.0 624.1H361.0V659.0H360.0ZM361.0 624.1H362.0V651.2H361.0ZM362.0 633.6H363.0V651.2H362.0ZM363.0 633.6H364.0V649.6H363.0ZM364.0 631.1H365.0V649.6H364.0ZM365.0 633.9H366.0V649.6H365.0ZM366.0 635.2H367.0V649.3H366.0ZM367.0 635.2H368.0V650.2H367.0ZM368.0 635.2H369.0V650.2H368.0ZM369.0 635.3H370.0V649.5H369.0ZM370.0 635.3H371.0V649.5H370.0ZM371.0 635.3H372.0V649.5H371.0ZM372.0 634.1H373.0V647.9H372.0ZM373.0 634.1H374.0V647.9H373.0ZM374.0 630.3H375.0V647.9H374.0ZM375.0 630.3H376.0V646.2H375.0ZM376.0 631.0H377.0V646.2H376.0ZM377.0 630.4H378.0V646.2H377.0ZM378.0 630.4H379.0V647.7H378.0ZM379.0 632.2H380.0V647.7H379.0ZM380.0 618.9H381.0V647.7H380.0ZM381.0 618.9H382.0V648.6H381.0ZM382.0 618.9H383.0V648.6H382.0ZM383.0 629.7H384.0V649.5H383.0ZM384.0 624.8H385.0V649.5H384.0ZM385.0 624.8H386.0V651.3H385.0ZM386.0 624.8H387.0V651.3H386.0ZM387.0 630.5H388.0V651.3H387.0ZM388.0 630.5H389.0V649.5H388.0ZM389.0 626.6H390.0V649.5H389.0ZM390.0 630.5H391.0V654.6H390.0ZM391.0 630.5H392.0V654.6H391.0ZM392.0 630.5H393.0V654.6H392.0ZM393.0 626.3H394.0V653.7H393.0ZM394.0 626.3H395.0V653.7H394.0ZM395.0 628.9H396.0V651.5H395.0ZM396.0 628.7H397.0V654.7H396.0ZM397.0 628.8H398.0V651.3H397.0ZM398.0 623.7H399.0V651.3H398.0ZM399.0 625.6H400.0V651.3H399.0ZM400.0 625.6H401.0V649.9H400.0ZM401.0 625.5H402.0V656.2H401.0ZM402.0 628.3H403.0V654.9H402.0ZM403.0 623.1H404.0V654.9H403.0ZM404.0 623.1H405.0V652.9H404.0ZM405.0 622.8H406.0V652.9H405.0ZM406.0 622.8H407.0V655.3H406.0ZM407.0 623.0H408.0V658.1H407.0ZM408.0 623.0H409.0V655.7H408.0ZM409.0 628.5H410.0V657.5H409.0ZM410.0 628.5H411.0V657.5H410.0ZM411.0 618.6H412.0V657.5H411.0ZM412.0 618.6H413.0V655.8H412.0ZM413.0 630.7H414.0V653.9H413.0ZM414.0 630.0H415.0V653.9H414.0ZM415.0 630.0H416.0V657.0H415.0ZM416.0 630.0H417.0V657.9H416.0ZM417.0 628.8H418.0V657.9H417.0ZM418.0 628.8H419.0V658.5H418.0ZM419.0 628.8H420.0V658.5H419.0ZM420.0 630.1H421.0V658.5H420.0ZM421.0 630.1H422.0V654.5H421.0ZM422.0 628.4H423.0V666.6H422.0ZM423.0 628.4H424.0V659.5H423.0ZM424.0 631.0H425.0V659.5H424.0ZM425.0 627.7H426.0V659.5H425.0ZM426.0 626.3H427.0V659.0H426.0ZM427.0 626.3H428.0V651.7H427.0ZM428.0 624.4H429.0V657.3H428.0ZM429.0 624.4H430.0V657.3H429.0ZM430.0 624.4H431.0V657.3H430.0ZM431.0 623.0H432.0V656.8H431.0ZM432.0 625.0H433.0V656.7H432.0ZM433.0 625.0H434.0V656.7H433.0ZM434.0 624.0H435.0V657.4H434.0ZM435.0 624.0H436.0V657.4H435.0ZM436.0 628.9H437.0V659.2H436.0ZM437.0 628.9H438.0V659.2H437.0ZM438.0 626.1H439.0V675.0H438.0ZM439.0 624.9H440.0V675.0H439.0ZM440.0 627.3H441.0V675.0H440.0ZM441.0 627.3H442.0V656.5H441.0ZM442.0 627.3H443.0V657.7H442.0ZM443.0 624.2H444.0V657.7H443.0ZM444.0 624.2H445.0V657.1H444.0ZM445.0 627.3H446.0V653.9H445.0ZM446.0 627.3H447.0V653.9H446.0ZM447.0 627.6H448.0V652.8H447.0ZM448.0 627.6H449.0V652.8H448.0ZM449.0 627.6H450.0V659.3H449.0ZM450.0 622.6H451.0V653.3H450.0ZM451.0 622.6H452.0V653.3H451.0ZM452.0 624.1H453.0V653.3H452.0ZM453.0 625.8H454.0V651.8H453.0ZM454.0 625.8H455.0V663.0H454.0ZM455.0 625.8H456.0V663.0H455.0ZM456.0 626.2H457.0V655.3H456.0ZM457.0 631.1H458.0V652.3H457.0ZM458.0 626.7H459.0V652.3H458.0ZM459.0 626.7H460.0V654.3H459.0ZM460.0 626.7H461.0V654.3H460.0ZM461.0 626.5H462.0V654.5H461.0ZM462.0 626.5H463.0V654.3H462.0ZM463.0 626.9H464.0V658.3H463.0ZM464.0 626.9H465.0V658.3H464.0ZM465.0 626.9H466.0V658.3H465.0ZM466.0 626.6H467.0V653.8H466.0ZM467.0 626.6H468.0V653.8H467.0ZM468.0 626.6H469.0V658.0H468.0ZM469.0 630.1H470.0V652.5H469.0ZM470.0 623.2H471.0V652.5H470.0ZM471.0 623.2H472.0V669.3H471.0ZM472.0 628.0H473.0V669.3H472.0ZM473.0 628.0H474.0V656.5H473.0ZM474.0 628.0H475.0V656.5H474.0ZM475.0 632.0H476.0V660.2H475.0ZM476.0 615.8H477.0V660.2H476.0ZM477.0 631.6H478.0V656.5H477.0ZM478.0 631.6H479.0V656.5H478.0ZM479.0 626.4H480.0V656.5H479.0ZM480.0 628.4H481.0V652.2H480.0ZM481.0 628.1H482.0V652.2H481.0ZM482.0 628.1H483.0V652.2H482.0ZM483.0 626.2H484.0V655.3H483.0ZM484.0 626.2H485.0V655.3H484.0ZM485.0 630.9H486.0V650.5H485.0ZM486.0 624.6H487.0V652.8H486.0ZM487.0 624.6H488.0V652.8H487.0ZM488.0 624.6H489.0V652.8H488.0ZM489.0 630.5H490.0V651.5H489.0ZM490.0 629.3H491.0V651.5H490.0ZM491.0 624.6H492.0V655.0H491.0ZM492.0 627.7H493.0V655.0H492.0ZM493.0 627.7H494.0V655.0H493.0ZM494.0 627.7H495.0V653.6H494.0ZM495.0 632.1H496.0V653.6H495.0ZM496.0 626.6H497.0V660.8H496.0ZM497.0 626.6H498.0V660.8H497.0ZM498.0 626.6H499.0V648.4H498.0ZM499.0 631.9H500.0V648.2H499.0ZM500.0 631.9H501.0V648.2H500.0ZM501.0 631.1H502.0V648.2H501.0ZM502.0 631.1H503.0V649.1H502.0ZM503.0 632.7H504.0V649.1H503.0ZM504.0 633.4H505.0V649.1H504.0ZM505.0 633.1H506.0V650.7H505.0ZM506.0 633.1H507.0V648.2H506.0ZM507.0 633.1H508.0V648.2H507.0ZM508.0 635.2H509.0V660.3H508.0ZM509.0 635.2H510.0V660.3H509.0ZM510.0 627.4H511.0V660.3H510.0ZM511.0 627.4H512.0V653.9H511.0ZM512.0 623.8H513.0V651.8H512.0ZM513.0 623.8H514.0V648.7H513.0ZM514.0 623.8H515.0V648.7H514.0ZM515.0 634.8H516.0V647.2H515.0ZM516.0 634.8H517.0V647.2H516.0ZM517.0 634.9H518.0V647.2H517.0ZM518.0 630.0H519.0V647.9H518.0ZM519.0 630.0H520.0V647.2H519.0ZM520.0 630.0H521.0V647.2H520.0ZM521.0 631.5H522.0V648.0H521.0ZM522.0 631.5H523.0V648.0H522.0ZM523.0 631.5H524.0V646.6H523.0ZM524.0 632.7H525.0V646.6H524.0ZM525.0 632.7H526.0V646.1H525.0ZM526.0 632.7H527.0V645.4H526.0ZM527.0 623.3H528.0V647.5H527.0ZM528.0 623.3H529.0V647.3H528.0ZM529.0 623.3H530.0V646.2H529.0ZM530.0 634.5H531.0V646.2H530.0ZM531.0 634.5H532.0V646.0H531.0ZM532.0 634.5H533.0V646.0H532.0ZM533.0 631.4H534.0V646.0H533.0ZM534.0 631.4H535.0V645.2H534.0ZM535.0 633.6H536.0V647.6H535.0ZM536.0 633.6H537.0V647.6H536.0ZM537.0 633.6H538.0V647.6H537.0ZM538.0 631.5H539.0V653.8H538.0ZM539.0 631.5H540.0V653.8H539.0ZM540.0 631.5H541.0V644.3H540.0ZM541.0 633.6H542.0V644.3H541.0ZM542.0 633.6H543.0V645.5H542.0ZM543.0 633.4H544.0V651.8H543.0ZM544.0 632.6H545.0V651.8H544.0ZM545.0 632.2H546.0V651.8H545.0ZM546.0 632.2H547.0V648.6H546.0ZM547.0 632.2H548.0V648.6H547.0ZM548.0 634.0H549.0V645.0H548.0ZM549.0 634.0H550.0V651.2H549.0ZM550.0 632.6H551.0V644.5H550.0ZM551.0 632.6H552.0V644.5H551.0ZM552.0 634.8H553.0V644.5H552.0ZM553.0 634.8H554.0V644.2H553.0ZM554.0 634.8H555.0V644.2H554.0ZM555.0 632.8H556.0V644.6H555.0ZM556.0 632.8H557.0V644.4H556.0ZM557.0 634.8H558.0V644.4H557.0ZM558.0 634.8H559.0V644.6H558.0ZM559.0 633.6H560.0V644.6H559.0ZM560.0 633.6H561.0V645.9H560.0ZM561.0 633.2H562.0V645.1H561.0ZM562.0 629.7H563.0V644.9H562.0ZM563.0 631.6H564.0V644.9H563.0ZM564.0 634.5H565.0V645.0H564.0ZM565.0 634.5H566.0V645.0H565.0ZM566.0 633.4H567.0V643.9H566.0ZM567.0 633.4H568.0V643.9H567.0ZM568.0 630.6H569.0V643.9H568.0ZM569.0 630.6H570.0V644.1H569.0ZM570.0 630.0H571.0V644.1H570.0ZM571.0 630.1H572.0V644.1H571.0ZM572.0 630.1H573.0V651.5H572.0ZM573.0 635.5H574.0V643.9H573.0ZM574.0 634.0H575.0V643.9H574.0ZM575.0 634.0H576.0V643.9H575.0ZM576.0 634.0H577.0V644.1H576.0ZM577.0 634.4H578.0V644.1H577.0ZM578.0 632.2H579.0V644.3H578.0ZM579.0 633.9H580.0V644.3H579.0ZM580.0 633.9H581.0V644.6H580.0ZM581.0 621.8H582.0V644.6H581.0ZM582.0 621.8H583.0V644.6H582.0ZM583.0 621.8H584.0V644.1H583.0ZM584.0 631.6H585.0V644.1H584.0ZM585.0 631.6H586.0V645.2H585.0ZM586.0 631.6H587.0V645.2H586.0ZM587.0 634.0H588.0V645.2H587.0ZM588.0 625.1H589.0V644.3H588.0ZM589.0 625.1H590.0V644.3H589.0ZM590.0 634.1H591.0V644.3H590.0ZM591.0 632.1H592.0V644.9H591.0ZM592.0 629.7H593.0V644.9H592.0ZM593.0 630.9H594.0V644.9H593.0ZM594.0 630.9H595.0V644.1H594.0ZM595.0 630.9H596.0V644.1H595.0ZM596.0 623.4H597.0V644.1H596.0ZM597.0 623.4H598.0V644.1H597.0ZM598.0 632.5H599.0V644.1H598.0ZM599.0 632.5H600.0V644.3H599.0ZM600.0 635.1H601.0V644.3H600.0ZM601.0 635.1H602.0V644.5H601.0ZM602.0 629.7H603.0V654.8H602.0ZM603.0 629.7H604.0V654.8H603.0ZM604.0 629.7H605.0V656.1H604.0ZM605.0 635.2H606.0V656.1H605.0ZM606.0 635.2H607.0V648.0H606.0ZM607.0 635.2H608.0V648.0H607.0ZM608.0 628.6H609.0V644.8H608.0ZM609.0 634.7H610.0V644.8H609.0ZM610.0 634.7H611.0V644.8H610.0ZM611.0 629.9H612.0V659.3H611.0ZM612.0 635.2H613.0V644.6H612.0ZM613.0 635.2H614.0V647.5H613.0ZM614.0 632.5H615.0V645.1H614.0ZM615.0 632.5H616.0V645.1H615.0ZM616.0 631.2H617.0V645.1H616.0ZM617.0 632.8H618.0V643.8H617.0ZM618.0 632.8H619.0V643.8H618.0ZM619.0 632.8H620.0V643.8H619.0ZM620.0 627.7H621.0V644.2H620.0ZM621.0 627.7H622.0V644.2H621.0ZM622.0 631.7H623.0V644.2H622.0ZM623.0 631.7H624.0V648.7H623.0ZM624.0 631.7H625.0V648.7H624.0ZM625.0 635.5H626.0V648.7H625.0ZM626.0 633.1H627.0V644.1H626.0ZM627.0 633.1H628.0V644.1H627.0ZM628.0 633.1H629.0V644.1H628.0ZM629.0 632.3H630.0V644.1H629.0ZM630.0 632.3H631.0V644.4H630.0ZM631.0 634.2H632.0V644.4H631.0ZM632.0 634.2H633.0V644.3H632.0ZM633.0 634.2H634.0V644.3H633.0ZM634.0 630.0H635.0V644.3H634.0ZM635.0 634.8H636.0V644.7H635.0ZM636.0 634.8H637.0V644.7H636.0ZM637.0 624.0H638.0V644.9H637.0ZM638.0 624.0H639.0V644.4H638.0ZM639.0 619.2H640.0V644.8H639.0ZM640.0 633.8H641.0V644.8H640.0ZM641.0 633.1H642.0V643.9H641.0ZM642.0 630.6H643.0V643.9H642.0ZM643.0 630.6H644.0V643.9H643.0ZM644.0 634.6H645.0V644.2H644.0ZM645.0 634.6H646.0V644.2H645.0Z" fill="#22a03b"/><line x1="339.5" y1="642.5" x2="645.3" y2="642.5" stroke="#000" stroke-width="2"/><rect x="339.5" y="428.5" width="305.79999999999995" height="256.79999999999995" fill="none" stroke="#111" stroke-width="1"/><line x1="339.5" y1="612.3" x2="645.3" y2="612.3" stroke="#000" stroke-width="2"/><line x1="347.0" y1="428.5" x2="347.0" y2="685.3" stroke="#1010ff" stroke-width="2"/><path d="M347.0 447.0 L351.0 450.0 L347.0 453.0Z" fill="#1010ff"/><path d="M347.0 469.6 L351.0 472.6 L347.0 475.6Z" fill="#1010ff"/><path d="M347.0 492.2 L351.0 495.2 L347.0 498.2Z" fill="#1010ff"/><path d="M347.0 514.8 L351.0 517.8 L347.0 520.8Z" fill="#1010ff"/><path d="M347.0 537.4 L351.0 540.4 L347.0 543.4Z" fill="#1010ff"/><path d="M347.0 560.0 L351.0 563.0 L347.0 566.0Z" fill="#1010ff"/><path d="M347.0 582.6 L351.0 585.6 L347.0 588.6Z" fill="#1010ff"/><path d="M347.0 605.2 L351.0 608.2 L347.0 611.2Z" fill="#1010ff"/><path d="M347.0 627.8 L351.0 630.8 L347.0 633.8Z" fill="#1010ff"/><path d="M347.0 650.4 L351.0 653.4 L347.0 656.4Z" fill="#1010ff"/><path d="M347.0 673.0 L351.0 676.0 L347.0 679.0Z" fill="#1010ff"/><line x1="643.9" y1="428.5" x2="643.9" y2="685.3" stroke="#1010ff" stroke-width="2"/><path d="M643.9 447.0 L639.9 450.0 L643.9 453.0Z" fill="#1010ff"/><path d="M643.9 469.6 L639.9 472.6 L643.9 475.6Z" fill="#1010ff"/><path d="M643.9 492.2 L639.9 495.2 L643.9 498.2Z" fill="#1010ff"/><path d="M643.9 514.8 L639.9 517.8 L643.9 520.8Z" fill="#1010ff"/><path d="M643.9 537.4 L639.9 540.4 L643.9 543.4Z" fill="#1010ff"/><path d="M643.9 560.0 L639.9 563.0 L643.9 566.0Z" fill="#1010ff"/><path d="M643.9 582.6 L639.9 585.6 L643.9 588.6Z" fill="#1010ff"/><path d="M643.9 605.2 L639.9 608.2 L643.9 611.2Z" fill="#1010ff"/><path d="M643.9 627.8 L639.9 630.8 L643.9 633.8Z" fill="#1010ff"/><path d="M643.9 650.4 L639.9 653.4 L643.9 656.4Z" fill="#1010ff"/><path d="M643.9 673.0 L639.9 676.0 L643.9 679.0Z" fill="#1010ff"/><rect x="331" y="429" width="8" height="7.5" fill="#22a03b" stroke="#145a22" stroke-width="0.8"/><line x1="333" y1="432.8" x2="337" y2="432.8" stroke="#111" stroke-width="1"/><rect x="331" y="613" width="8" height="7.5" fill="#22a03b" stroke="#145a22" stroke-width="0.8"/><line x1="333" y1="616.8" x2="337" y2="616.8" stroke="#111" stroke-width="1"/><line x1="346.7" y1="685.3" x2="346.7" y2="682.3" stroke="#111" stroke-width="1"/><line x1="358.7" y1="685.3" x2="358.7" y2="683.3" stroke="#111" stroke-width="1"/><line x1="370.6" y1="685.3" x2="370.6" y2="683.3" stroke="#111" stroke-width="1"/><line x1="382.6" y1="685.3" x2="382.6" y2="683.3" stroke="#111" stroke-width="1"/><line x1="394.5" y1="685.3" x2="394.5" y2="683.3" stroke="#111" stroke-width="1"/><line x1="406.5" y1="685.3" x2="406.5" y2="682.3" stroke="#111" stroke-width="1"/><line x1="418.5" y1="685.3" x2="418.5" y2="683.3" stroke="#111" stroke-width="1"/><line x1="430.4" y1="685.3" x2="430.4" y2="683.3" stroke="#111" stroke-width="1"/><line x1="442.4" y1="685.3" x2="442.4" y2="683.3" stroke="#111" stroke-width="1"/><line x1="454.3" y1="685.3" x2="454.3" y2="683.3" stroke="#111" stroke-width="1"/><line x1="466.3" y1="685.3" x2="466.3" y2="682.3" stroke="#111" stroke-width="1"/><line x1="478.3" y1="685.3" x2="478.3" y2="683.3" stroke="#111" stroke-width="1"/><line x1="490.2" y1="685.3" x2="490.2" y2="683.3" stroke="#111" stroke-width="1"/><line x1="502.2" y1="685.3" x2="502.2" y2="683.3" stroke="#111" stroke-width="1"/><line x1="514.1" y1="685.3" x2="514.1" y2="683.3" stroke="#111" stroke-width="1"/><line x1="526.1" y1="685.3" x2="526.1" y2="682.3" stroke="#111" stroke-width="1"/><line x1="538.1" y1="685.3" x2="538.1" y2="683.3" stroke="#111" stroke-width="1"/><line x1="550.0" y1="685.3" x2="550.0" y2="683.3" stroke="#111" stroke-width="1"/><line x1="562.0" y1="685.3" x2="562.0" y2="683.3" stroke="#111" stroke-width="1"/><line x1="573.9" y1="685.3" x2="573.9" y2="683.3" stroke="#111" stroke-width="1"/><line x1="585.9" y1="685.3" x2="585.9" y2="682.3" stroke="#111" stroke-width="1"/><line x1="597.9" y1="685.3" x2="597.9" y2="683.3" stroke="#111" stroke-width="1"/><line x1="609.8" y1="685.3" x2="609.8" y2="683.3" stroke="#111" stroke-width="1"/><line x1="621.8" y1="685.3" x2="621.8" y2="683.3" stroke="#111" stroke-width="1"/><line x1="633.7" y1="685.3" x2="633.7" y2="683.3" stroke="#111" stroke-width="1"/></svg>
<div style="position:absolute;left:331.70px;top:685.30px;width:30px;text-align:center;height:16px;line-height:16px;font-size:12px;white-space:nowrap;transform-origin:50% 0;">0</div>
<div style="position:absolute;left:391.50px;top:685.30px;width:30px;text-align:center;height:16px;line-height:16px;font-size:12px;white-space:nowrap;transform-origin:50% 0;">10</div>
<div style="position:absolute;left:451.30px;top:685.30px;width:30px;text-align:center;height:16px;line-height:16px;font-size:12px;white-space:nowrap;transform-origin:50% 0;">20</div>
<div style="position:absolute;left:511.10px;top:685.30px;width:30px;text-align:center;height:16px;line-height:16px;font-size:12px;white-space:nowrap;transform-origin:50% 0;">30</div>
<div style="position:absolute;left:570.90px;top:685.30px;width:30px;text-align:center;height:16px;line-height:16px;font-size:12px;white-space:nowrap;transform-origin:50% 0;">40</div>
<div style="position:absolute;left:641.7px;top:686px;width:7px;overflow:hidden;height:15px;line-height:15px;font-size:12px;">5</div>
<div style="position:absolute;left:300px;width:38px;text-align:right;top:450.9px;height:15px;line-height:15px;font-size:12px;white-space:nowrap;">10<span style="position:relative;top:-4px;font-size:9px;">3</span></div>
<div style="position:absolute;left:300px;width:38px;text-align:right;top:498.6px;height:15px;line-height:15px;font-size:12px;white-space:nowrap;">10<span style="position:relative;top:-4px;font-size:9px;">2</span></div>
<div style="position:absolute;left:300px;width:38px;text-align:right;top:546.3px;height:15px;line-height:15px;font-size:12px;white-space:nowrap;">10<span style="position:relative;top:-4px;font-size:9px;">1</span></div>
<div style="position:absolute;left:300px;width:38px;text-align:right;top:594.0px;height:15px;line-height:15px;font-size:12px;white-space:nowrap;">10<span style="position:relative;top:-4px;font-size:9px;">0</span></div>
<div style="position:absolute;left:307.50px;top:634.50px;width:30px;text-align:right;height:16px;line-height:16px;font-size:12px;white-space:nowrap;transform-origin:100% 0;">0</div>
<div style="position:absolute;left:307.50px;top:666.10px;width:30px;text-align:right;height:16px;line-height:16px;font-size:12px;white-space:nowrap;transform-origin:100% 0;">-4</div>
<div style="position:absolute;left:268.5px;top:518px;width:80px;height:14px;line-height:14px;text-align:center;font-size:11px;transform:rotate(-90deg);transform-origin:40px 7px;white-space:nowrap;">Intensity [ Cnts]</div>
<div style="position:absolute;left:302px;top:612px;width:16px;height:78px;overflow:hidden;"><div style="position:absolute;left:-42px;top:32px;width:100px;height:16px;line-height:16px;text-align:center;font-size:12px;transform:rotate(-90deg);transform-origin:50px 8px;white-space:nowrap;">Resids. [StdDev.]</div></div>
<div style="position:absolute;left:646px;top:405px;width:15px;height:295px;background:#c8d0c5;border-left:1px solid #a6ada3;box-sizing:border-box;"></div>
<div style="position:absolute;left:646px;top:405px;width:15px;height:16px;background:linear-gradient(#f0f3ee,#dde3db);border:1px solid #a6ada3;box-sizing:border-box;"></div>
<div style="position:absolute;left:649.5px;top:411px;width:0;height:0;border-left:4px solid transparent;border-right:4px solid transparent;border-bottom:4px solid #111;"></div>
<div style="position:absolute;left:646px;top:421px;width:15px;height:243px;background:#e2e8df;border:1px solid #b8bfb5;box-sizing:border-box;"></div>
<div style="position:absolute;left:646px;top:684px;width:15px;height:16px;background:linear-gradient(#f0f3ee,#dde3db);border:1px solid #a6ada3;box-sizing:border-box;"></div>
<div style="position:absolute;left:649.5px;top:690px;width:0;height:0;border-left:4px solid transparent;border-right:4px solid transparent;border-top:4px solid #111;"></div>
<div style="position:absolute;left:295px;top:700px;width:351px;height:13px;background:#d9e1d6;border-top:1px solid #b5bcb2;box-sizing:border-box;"></div>
<div style="position:absolute;left:295px;top:700px;width:15px;height:13px;background:linear-gradient(#f0f3ee,#dde3db);border:1px solid #a6ada3;box-sizing:border-box;"></div>
<div style="position:absolute;left:300px;top:704px;width:0;height:0;border-top:4px solid transparent;border-bottom:4px solid transparent;border-right:4px solid #111;"></div>
<div style="position:absolute;left:615px;top:700px;width:15px;height:13px;background:#e2e8df;border:1px solid #b8bfb5;box-sizing:border-box;"></div>
<div style="position:absolute;left:630px;top:700px;width:16px;height:13px;background:linear-gradient(#f0f3ee,#dde3db);border:1px solid #a6ada3;box-sizing:border-box;"></div>
<div style="position:absolute;left:636px;top:704px;width:0;height:0;border-top:4px solid transparent;border-bottom:4px solid transparent;border-left:4px solid #111;"></div>
<div style="position:absolute;left:668px;top:411.2px;width:11px;height:11px;border-radius:50%;background:#fff;border:1px solid #7a8078;box-sizing:border-box;"></div>
<div style="position:absolute;left:681px;top:408.70px;height:15px;line-height:15px;font-size:11px;white-space:nowrap;transform-origin:0 0;transform:scaleX(0.89);">Lin. Intens. Axis</div>
<div style="position:absolute;left:668px;top:434.5px;width:11px;height:11px;border-radius:50%;background:#22a03b;border:1px solid #7a8078;box-sizing:border-box;"><div style="position:absolute;left:2px;top:2px;width:4px;height:4px;border-radius:50%;background:#111;"></div></div>
<div style="position:absolute;left:681px;top:432.00px;height:15px;line-height:15px;font-size:11px;white-space:nowrap;transform-origin:0 0;transform:scaleX(0.89);">Log. Intens. Axis</div>
<div style="position:absolute;left:668px;top:479.5px;width:11px;height:11px;background:#fff;border:1px solid #8a9088;box-sizing:border-box;"></div>
<div style="position:absolute;left:681px;top:477.00px;height:15px;line-height:15px;font-size:11px;white-space:nowrap;transform-origin:0 0;transform:scaleX(0.89);">Normalize Decays</div>
<div style="position:absolute;left:668px;top:504.5px;width:11px;height:11px;border-radius:50%;background:#22a03b;border:1px solid #7a8078;box-sizing:border-box;"><div style="position:absolute;left:2px;top:2px;width:4px;height:4px;border-radius:50%;background:#111;"></div></div>
<div style="position:absolute;left:681px;top:502.00px;height:15px;line-height:15px;font-size:11px;white-space:nowrap;transform-origin:0 0;transform:scaleX(0.89);">Show all Datasets</div>
<div style="position:absolute;left:668px;top:527.5px;width:11px;height:11px;border-radius:50%;background:#fff;border:1px solid #7a8078;box-sizing:border-box;"></div>
<div style="position:absolute;left:681px;top:525.00px;height:15px;line-height:15px;font-size:11px;white-space:nowrap;transform-origin:0 0;transform:scaleX(0.89);">Show Active Dataset</div>
<div style="position:absolute;left:668px;top:550.5px;width:11px;height:11px;border-radius:50%;background:#fff;border:1px solid #7a8078;box-sizing:border-box;"></div>
<div style="position:absolute;left:681px;top:548.00px;height:15px;line-height:15px;font-size:11px;white-space:nowrap;transform-origin:0 0;transform:scaleX(0.89);">TCSPC Curves Only</div>
<div style="position:absolute;left:668px;top:574px;width:11px;height:11px;border-radius:50%;background:#fff;border:1px solid #7a8078;box-sizing:border-box;"></div>
<div style="position:absolute;left:681px;top:571.50px;height:15px;line-height:15px;font-size:11px;white-space:nowrap;transform-origin:0 0;transform:scaleX(0.89);">Parameter Plot</div>
<div style="position:absolute;left:668px;top:597.6px;width:11px;height:11px;border-radius:50%;background:#fff;border:1px solid #7a8078;box-sizing:border-box;"></div>
<div style="position:absolute;left:681px;top:595.10px;height:15px;line-height:15px;font-size:11px;white-space:nowrap;transform-origin:0 0;transform:scaleX(0.89);">Error Correlation Plot</div>
<div style="position:absolute;left:805px;top:2px;width:390px;height:706px;background:#fff;"></div>
<svg style="position:absolute;left:0;top:0" width="1347" height="713" viewBox="0 0 1347 713"><defs><clipPath id="hceff"><rect x="844.5" y="24.3" width="342.79999999999995" height="294.8"/></clipPath></defs><line x1="852.0" y1="24.3" x2="852.0" y2="319.1" stroke="#b4b4b4" stroke-width="1"/><line x1="868.4" y1="24.3" x2="868.4" y2="319.1" stroke="#e8e8e8" stroke-width="1"/><line x1="884.8" y1="24.3" x2="884.8" y2="319.1" stroke="#e8e8e8" stroke-width="1"/><line x1="901.2" y1="24.3" x2="901.2" y2="319.1" stroke="#e8e8e8" stroke-width="1"/><line x1="917.6" y1="24.3" x2="917.6" y2="319.1" stroke="#b4b4b4" stroke-width="1"/><line x1="934.0" y1="24.3" x2="934.0" y2="319.1" stroke="#e8e8e8" stroke-width="1"/><line x1="950.4" y1="24.3" x2="950.4" y2="319.1" stroke="#e8e8e8" stroke-width="1"/><line x1="966.8" y1="24.3" x2="966.8" y2="319.1" stroke="#e8e8e8" stroke-width="1"/><line x1="983.2" y1="24.3" x2="983.2" y2="319.1" stroke="#b4b4b4" stroke-width="1"/><line x1="999.6" y1="24.3" x2="999.6" y2="319.1" stroke="#e8e8e8" stroke-width="1"/><line x1="1016.0" y1="24.3" x2="1016.0" y2="319.1" stroke="#e8e8e8" stroke-width="1"/><line x1="1032.4" y1="24.3" x2="1032.4" y2="319.1" stroke="#e8e8e8" stroke-width="1"/><line x1="1048.8" y1="24.3" x2="1048.8" y2="319.1" stroke="#b4b4b4" stroke-width="1"/><line x1="1065.2" y1="24.3" x2="1065.2" y2="319.1" stroke="#e8e8e8" stroke-width="1"/><line x1="1081.6" y1="24.3" x2="1081.6" y2="319.1" stroke="#e8e8e8" stroke-width="1"/><line x1="1098.0" y1="24.3" x2="1098.0" y2="319.1" stroke="#e8e8e8" stroke-width="1"/><line x1="1114.4" y1="24.3" x2="1114.4" y2="319.1" stroke="#b4b4b4" stroke-width="1"/><line x1="1130.8" y1="24.3" x2="1130.8" y2="319.1" stroke="#e8e8e8" stroke-width="1"/><line x1="1147.2" y1="24.3" x2="1147.2" y2="319.1" stroke="#e8e8e8" stroke-width="1"/><line x1="1163.6" y1="24.3" x2="1163.6" y2="319.1" stroke="#e8e8e8" stroke-width="1"/><line x1="1180.0" y1="24.3" x2="1180.0" y2="319.1" stroke="#b4b4b4" stroke-width="1"/><line x1="844.5" y1="312.0" x2="1187.3" y2="312.0" stroke="#b4b4b4" stroke-width="1"/><line x1="844.5" y1="306.2" x2="1187.3" y2="306.2" stroke="#e8e8e8" stroke-width="1"/><line x1="844.5" y1="300.3" x2="1187.3" y2="300.3" stroke="#e8e8e8" stroke-width="1"/><line x1="844.5" y1="294.5" x2="1187.3" y2="294.5" stroke="#e8e8e8" stroke-width="1"/><line x1="844.5" y1="288.7" x2="1187.3" y2="288.7" stroke="#b4b4b4" stroke-width="1"/><line x1="844.5" y1="282.8" x2="1187.3" y2="282.8" stroke="#e8e8e8" stroke-width="1"/><line x1="844.5" y1="277.0" x2="1187.3" y2="277.0" stroke="#e8e8e8" stroke-width="1"/><line x1="844.5" y1="271.2" x2="1187.3" y2="271.2" stroke="#e8e8e8" stroke-width="1"/><line x1="844.5" y1="265.3" x2="1187.3" y2="265.3" stroke="#b4b4b4" stroke-width="1"/><line x1="844.5" y1="259.5" x2="1187.3" y2="259.5" stroke="#e8e8e8" stroke-width="1"/><line x1="844.5" y1="253.7" x2="1187.3" y2="253.7" stroke="#e8e8e8" stroke-width="1"/><line x1="844.5" y1="247.8" x2="1187.3" y2="247.8" stroke="#e8e8e8" stroke-width="1"/><line x1="844.5" y1="242.0" x2="1187.3" y2="242.0" stroke="#b4b4b4" stroke-width="1"/><line x1="844.5" y1="236.2" x2="1187.3" y2="236.2" stroke="#e8e8e8" stroke-width="1"/><line x1="844.5" y1="230.3" x2="1187.3" y2="230.3" stroke="#e8e8e8" stroke-width="1"/><line x1="844.5" y1="224.5" x2="1187.3" y2="224.5" stroke="#e8e8e8" stroke-width="1"/><line x1="844.5" y1="218.7" x2="1187.3" y2="218.7" stroke="#b4b4b4" stroke-width="1"/><line x1="844.5" y1="212.8" x2="1187.3" y2="212.8" stroke="#e8e8e8" stroke-width="1"/><line x1="844.5" y1="207.0" x2="1187.3" y2="207.0" stroke="#e8e8e8" stroke-width="1"/><line x1="844.5" y1="201.2" x2="1187.3" y2="201.2" stroke="#e8e8e8" stroke-width="1"/><line x1="844.5" y1="195.4" x2="1187.3" y2="195.4" stroke="#b4b4b4" stroke-width="1"/><line x1="844.5" y1="189.5" x2="1187.3" y2="189.5" stroke="#e8e8e8" stroke-width="1"/><line x1="844.5" y1="183.7" x2="1187.3" y2="183.7" stroke="#e8e8e8" stroke-width="1"/><line x1="844.5" y1="177.9" x2="1187.3" y2="177.9" stroke="#e8e8e8" stroke-width="1"/><line x1="844.5" y1="172.0" x2="1187.3" y2="172.0" stroke="#b4b4b4" stroke-width="1"/><line x1="844.5" y1="166.2" x2="1187.3" y2="166.2" stroke="#e8e8e8" stroke-width="1"/><line x1="844.5" y1="160.4" x2="1187.3" y2="160.4" stroke="#e8e8e8" stroke-width="1"/><line x1="844.5" y1="154.5" x2="1187.3" y2="154.5" stroke="#e8e8e8" stroke-width="1"/><line x1="844.5" y1="148.7" x2="1187.3" y2="148.7" stroke="#b4b4b4" stroke-width="1"/><line x1="844.5" y1="142.9" x2="1187.3" y2="142.9" stroke="#e8e8e8" stroke-width="1"/><line x1="844.5" y1="137.0" x2="1187.3" y2="137.0" stroke="#e8e8e8" stroke-width="1"/><line x1="844.5" y1="131.2" x2="1187.3" y2="131.2" stroke="#e8e8e8" stroke-width="1"/><line x1="844.5" y1="125.4" x2="1187.3" y2="125.4" stroke="#b4b4b4" stroke-width="1"/><line x1="844.5" y1="119.5" x2="1187.3" y2="119.5" stroke="#e8e8e8" stroke-width="1"/><line x1="844.5" y1="113.7" x2="1187.3" y2="113.7" stroke="#e8e8e8" stroke-width="1"/><line x1="844.5" y1="107.9" x2="1187.3" y2="107.9" stroke="#e8e8e8" stroke-width="1"/><line x1="844.5" y1="102.0" x2="1187.3" y2="102.0" stroke="#b4b4b4" stroke-width="1"/><line x1="844.5" y1="96.2" x2="1187.3" y2="96.2" stroke="#e8e8e8" stroke-width="1"/><line x1="844.5" y1="90.4" x2="1187.3" y2="90.4" stroke="#e8e8e8" stroke-width="1"/><line x1="844.5" y1="84.5" x2="1187.3" y2="84.5" stroke="#e8e8e8" stroke-width="1"/><line x1="844.5" y1="78.7" x2="1187.3" y2="78.7" stroke="#b4b4b4" stroke-width="1"/><line x1="844.5" y1="72.9" x2="1187.3" y2="72.9" stroke="#e8e8e8" stroke-width="1"/><line x1="844.5" y1="67.0" x2="1187.3" y2="67.0" stroke="#e8e8e8" stroke-width="1"/><line x1="844.5" y1="61.2" x2="1187.3" y2="61.2" stroke="#e8e8e8" stroke-width="1"/><line x1="844.5" y1="55.4" x2="1187.3" y2="55.4" stroke="#b4b4b4" stroke-width="1"/><line x1="844.5" y1="49.5" x2="1187.3" y2="49.5" stroke="#e8e8e8" stroke-width="1"/><line x1="844.5" y1="43.7" x2="1187.3" y2="43.7" stroke="#e8e8e8" stroke-width="1"/><line x1="844.5" y1="37.9" x2="1187.3" y2="37.9" stroke="#e8e8e8" stroke-width="1"/><line x1="844.5" y1="32.0" x2="1187.3" y2="32.0" stroke="#b4b4b4" stroke-width="1"/><line x1="844.5" y1="26.2" x2="1187.3" y2="26.2" stroke="#e8e8e8" stroke-width="1"/><g clip-path="url(#hceff)"><rect x="847.79" y="90.37" width="8.41" height="228.74" fill="#22a03b" stroke="#111" stroke-width="1"/><rect x="856.21" y="55.37" width="8.41" height="263.73" fill="#22a03b" stroke="#111" stroke-width="1"/><rect x="864.62" y="43.71" width="8.41" height="275.39" fill="#22a03b" stroke="#111" stroke-width="1"/><rect x="873.03" y="102.03" width="8.41" height="217.07" fill="#22a03b" stroke="#111" stroke-width="1"/><rect x="881.44" y="183.69" width="8.41" height="135.42" fill="#22a03b" stroke="#111" stroke-width="1"/><rect x="889.85" y="113.70" width="8.41" height="205.41" fill="#22a03b" stroke="#111" stroke-width="1"/><rect x="898.26" y="183.69" width="8.41" height="135.42" fill="#22a03b" stroke="#111" stroke-width="1"/><rect x="906.67" y="195.35" width="8.41" height="123.75" fill="#22a03b" stroke="#111" stroke-width="1"/><rect x="915.08" y="90.37" width="8.41" height="228.74" fill="#22a03b" stroke="#111" stroke-width="1"/><rect x="923.49" y="172.02" width="8.41" height="147.08" fill="#22a03b" stroke="#111" stroke-width="1"/><rect x="931.90" y="172.02" width="8.41" height="147.08" fill="#22a03b" stroke="#111" stroke-width="1"/><rect x="940.31" y="207.02" width="8.41" height="112.09" fill="#22a03b" stroke="#111" stroke-width="1"/><rect x="948.72" y="183.69" width="8.41" height="135.42" fill="#22a03b" stroke="#111" stroke-width="1"/><rect x="957.13" y="207.02" width="8.41" height="112.09" fill="#22a03b" stroke="#111" stroke-width="1"/><rect x="965.54" y="253.68" width="8.41" height="65.43" fill="#22a03b" stroke="#111" stroke-width="1"/><rect x="973.95" y="172.02" width="8.41" height="147.08" fill="#22a03b" stroke="#111" stroke-width="1"/><rect x="982.36" y="230.34" width="8.41" height="88.76" fill="#22a03b" stroke="#111" stroke-width="1"/><rect x="990.77" y="195.35" width="8.41" height="123.75" fill="#22a03b" stroke="#111" stroke-width="1"/><rect x="999.18" y="218.68" width="8.41" height="100.42" fill="#22a03b" stroke="#111" stroke-width="1"/><rect x="1007.59" y="113.70" width="8.41" height="205.41" fill="#22a03b" stroke="#111" stroke-width="1"/><rect x="1016.00" y="43.71" width="8.41" height="275.39" fill="#22a03b" stroke="#111" stroke-width="1"/><rect x="1024.41" y="32.04" width="8.41" height="287.06" fill="#22a03b" stroke="#111" stroke-width="1"/><rect x="1032.82" y="78.70" width="8.41" height="240.40" fill="#22a03b" stroke="#111" stroke-width="1"/><rect x="1041.23" y="160.36" width="8.41" height="158.75" fill="#22a03b" stroke="#111" stroke-width="1"/><rect x="1049.64" y="125.36" width="8.41" height="193.74" fill="#22a03b" stroke="#111" stroke-width="1"/><rect x="1058.05" y="218.68" width="8.41" height="100.42" fill="#22a03b" stroke="#111" stroke-width="1"/><rect x="1066.46" y="277.00" width="8.41" height="42.10" fill="#22a03b" stroke="#111" stroke-width="1"/><rect x="1074.87" y="288.67" width="8.41" height="30.43" fill="#22a03b" stroke="#111" stroke-width="1"/><rect x="1083.28" y="265.34" width="8.41" height="53.76" fill="#22a03b" stroke="#111" stroke-width="1"/><rect x="1091.69" y="300.33" width="8.41" height="18.77" fill="#22a03b" stroke="#111" stroke-width="1"/><rect x="1100.10" y="288.67" width="8.41" height="30.43" fill="#22a03b" stroke="#111" stroke-width="1"/><rect x="1108.51" y="312.00" width="8.41" height="7.10" fill="#22a03b" stroke="#111" stroke-width="1"/><rect x="1116.92" y="300.33" width="8.41" height="18.77" fill="#22a03b" stroke="#111" stroke-width="1"/><rect x="1125.33" y="300.33" width="8.41" height="18.77" fill="#22a03b" stroke="#111" stroke-width="1"/><rect x="1133.74" y="288.67" width="8.41" height="30.43" fill="#22a03b" stroke="#111" stroke-width="1"/><rect x="1142.15" y="312.00" width="8.41" height="7.10" fill="#22a03b" stroke="#111" stroke-width="1"/><rect x="1150.56" y="312.00" width="8.41" height="7.10" fill="#22a03b" stroke="#111" stroke-width="1"/><rect x="1158.97" y="300.33" width="8.41" height="18.77" fill="#22a03b" stroke="#111" stroke-width="1"/><rect x="1167.38" y="312.00" width="8.41" height="7.10" fill="#22a03b" stroke="#111" stroke-width="1"/><rect x="1175.79" y="312.00" width="8.41" height="7.10" fill="#22a03b" stroke="#111" stroke-width="1"/></g><rect x="844.5" y="24.3" width="342.79999999999995" height="294.8" fill="none" stroke="#333" stroke-width="1.2"/><line x1="844.5" y1="312.0" x2="846.1" y2="312.0" stroke="#333" stroke-width="1"/><line x1="844.5" y1="306.2" x2="846.1" y2="306.2" stroke="#333" stroke-width="1"/><line x1="844.5" y1="300.3" x2="846.1" y2="300.3" stroke="#333" stroke-width="1"/><line x1="844.5" y1="294.5" x2="846.1" y2="294.5" stroke="#333" stroke-width="1"/><line x1="844.5" y1="288.7" x2="846.1" y2="288.7" stroke="#333" stroke-width="1"/><line x1="844.5" y1="282.8" x2="846.1" y2="282.8" stroke="#333" stroke-width="1"/><line x1="844.5" y1="277.0" x2="846.1" y2="277.0" stroke="#333" stroke-width="1"/><line x1="844.5" y1="271.2" x2="846.1" y2="271.2" stroke="#333" stroke-width="1"/><line x1="844.5" y1="265.3" x2="846.1" y2="265.3" stroke="#333" stroke-width="1"/><line x1="844.5" y1="259.5" x2="846.1" y2="259.5" stroke="#333" stroke-width="1"/><line x1="844.5" y1="253.7" x2="846.1" y2="253.7" stroke="#333" stroke-width="1"/><line x1="844.5" y1="247.8" x2="846.1" y2="247.8" stroke="#333" stroke-width="1"/><line x1="844.5" y1="242.0" x2="846.1" y2="242.0" stroke="#333" stroke-width="1"/><line x1="844.5" y1="236.2" x2="846.1" y2="236.2" stroke="#333" stroke-width="1"/><line x1="844.5" y1="230.3" x2="846.1" y2="230.3" stroke="#333" stroke-width="1"/><line x1="844.5" y1="224.5" x2="846.1" y2="224.5" stroke="#333" stroke-width="1"/><line x1="844.5" y1="218.7" x2="846.1" y2="218.7" stroke="#333" stroke-width="1"/><line x1="844.5" y1="212.8" x2="846.1" y2="212.8" stroke="#333" stroke-width="1"/><line x1="844.5" y1="207.0" x2="846.1" y2="207.0" stroke="#333" stroke-width="1"/><line x1="844.5" y1="201.2" x2="846.1" y2="201.2" stroke="#333" stroke-width="1"/><line x1="844.5" y1="195.4" x2="846.1" y2="195.4" stroke="#333" stroke-width="1"/><line x1="844.5" y1="189.5" x2="846.1" y2="189.5" stroke="#333" stroke-width="1"/><line x1="844.5" y1="183.7" x2="846.1" y2="183.7" stroke="#333" stroke-width="1"/><line x1="844.5" y1="177.9" x2="846.1" y2="177.9" stroke="#333" stroke-width="1"/><line x1="844.5" y1="172.0" x2="846.1" y2="172.0" stroke="#333" stroke-width="1"/><line x1="844.5" y1="166.2" x2="846.1" y2="166.2" stroke="#333" stroke-width="1"/><line x1="844.5" y1="160.4" x2="846.1" y2="160.4" stroke="#333" stroke-width="1"/><line x1="844.5" y1="154.5" x2="846.1" y2="154.5" stroke="#333" stroke-width="1"/><line x1="844.5" y1="148.7" x2="846.1" y2="148.7" stroke="#333" stroke-width="1"/><line x1="844.5" y1="142.9" x2="846.1" y2="142.9" stroke="#333" stroke-width="1"/><line x1="844.5" y1="137.0" x2="846.1" y2="137.0" stroke="#333" stroke-width="1"/><line x1="844.5" y1="131.2" x2="846.1" y2="131.2" stroke="#333" stroke-width="1"/><line x1="844.5" y1="125.4" x2="846.1" y2="125.4" stroke="#333" stroke-width="1"/><line x1="844.5" y1="119.5" x2="846.1" y2="119.5" stroke="#333" stroke-width="1"/><line x1="844.5" y1="113.7" x2="846.1" y2="113.7" stroke="#333" stroke-width="1"/><line x1="844.5" y1="107.9" x2="846.1" y2="107.9" stroke="#333" stroke-width="1"/><line x1="844.5" y1="102.0" x2="846.1" y2="102.0" stroke="#333" stroke-width="1"/><line x1="844.5" y1="96.2" x2="846.1" y2="96.2" stroke="#333" stroke-width="1"/><line x1="844.5" y1="90.4" x2="846.1" y2="90.4" stroke="#333" stroke-width="1"/><line x1="844.5" y1="84.5" x2="846.1" y2="84.5" stroke="#333" stroke-width="1"/><line x1="844.5" y1="78.7" x2="846.1" y2="78.7" stroke="#333" stroke-width="1"/><line x1="844.5" y1="72.9" x2="846.1" y2="72.9" stroke="#333" stroke-width="1"/><line x1="844.5" y1="67.0" x2="846.1" y2="67.0" stroke="#333" stroke-width="1"/><line x1="844.5" y1="61.2" x2="846.1" y2="61.2" stroke="#333" stroke-width="1"/><line x1="844.5" y1="55.4" x2="846.1" y2="55.4" stroke="#333" stroke-width="1"/><line x1="844.5" y1="49.5" x2="846.1" y2="49.5" stroke="#333" stroke-width="1"/><line x1="844.5" y1="43.7" x2="846.1" y2="43.7" stroke="#333" stroke-width="1"/><line x1="844.5" y1="37.9" x2="846.1" y2="37.9" stroke="#333" stroke-width="1"/><line x1="844.5" y1="32.0" x2="846.1" y2="32.0" stroke="#333" stroke-width="1"/><line x1="844.5" y1="26.2" x2="846.1" y2="26.2" stroke="#333" stroke-width="1"/><line x1="844.5" y1="312.0" x2="848.5" y2="312.0" stroke="#111" stroke-width="1"/><line x1="844.5" y1="288.7" x2="848.5" y2="288.7" stroke="#111" stroke-width="1"/><line x1="844.5" y1="265.3" x2="848.5" y2="265.3" stroke="#111" stroke-width="1"/><line x1="844.5" y1="242.0" x2="848.5" y2="242.0" stroke="#111" stroke-width="1"/><line x1="844.5" y1="218.7" x2="848.5" y2="218.7" stroke="#111" stroke-width="1"/><line x1="844.5" y1="195.4" x2="848.5" y2="195.4" stroke="#111" stroke-width="1"/><line x1="844.5" y1="172.0" x2="848.5" y2="172.0" stroke="#111" stroke-width="1"/><line x1="844.5" y1="148.7" x2="848.5" y2="148.7" stroke="#111" stroke-width="1"/><line x1="844.5" y1="125.4" x2="848.5" y2="125.4" stroke="#111" stroke-width="1"/><line x1="844.5" y1="102.0" x2="848.5" y2="102.0" stroke="#111" stroke-width="1"/><line x1="844.5" y1="78.7" x2="848.5" y2="78.7" stroke="#111" stroke-width="1"/><line x1="844.5" y1="55.4" x2="848.5" y2="55.4" stroke="#111" stroke-width="1"/><line x1="844.5" y1="32.0" x2="848.5" y2="32.0" stroke="#111" stroke-width="1"/><line x1="852.0" y1="24.3" x2="852.0" y2="28.3" stroke="#111" stroke-width="1"/><line x1="852.0" y1="319.1" x2="852.0" y2="315.1" stroke="#111" stroke-width="1"/><line x1="868.4" y1="24.3" x2="868.4" y2="26.3" stroke="#111" stroke-width="1"/><line x1="868.4" y1="319.1" x2="868.4" y2="317.1" stroke="#111" stroke-width="1"/><line x1="884.8" y1="24.3" x2="884.8" y2="26.3" stroke="#111" stroke-width="1"/><line x1="884.8" y1="319.1" x2="884.8" y2="317.1" stroke="#111" stroke-width="1"/><line x1="901.2" y1="24.3" x2="901.2" y2="26.3" stroke="#111" stroke-width="1"/><line x1="901.2" y1="319.1" x2="901.2" y2="317.1" stroke="#111" stroke-width="1"/><line x1="917.6" y1="24.3" x2="917.6" y2="28.3" stroke="#111" stroke-width="1"/><line x1="917.6" y1="319.1" x2="917.6" y2="315.1" stroke="#111" stroke-width="1"/><line x1="934.0" y1="24.3" x2="934.0" y2="26.3" stroke="#111" stroke-width="1"/><line x1="934.0" y1="319.1" x2="934.0" y2="317.1" stroke="#111" stroke-width="1"/><line x1="950.4" y1="24.3" x2="950.4" y2="26.3" stroke="#111" stroke-width="1"/><line x1="950.4" y1="319.1" x2="950.4" y2="317.1" stroke="#111" stroke-width="1"/><line x1="966.8" y1="24.3" x2="966.8" y2="26.3" stroke="#111" stroke-width="1"/><line x1="966.8" y1="319.1" x2="966.8" y2="317.1" stroke="#111" stroke-width="1"/><line x1="983.2" y1="24.3" x2="983.2" y2="28.3" stroke="#111" stroke-width="1"/><line x1="983.2" y1="319.1" x2="983.2" y2="315.1" stroke="#111" stroke-width="1"/><line x1="999.6" y1="24.3" x2="999.6" y2="26.3" stroke="#111" stroke-width="1"/><line x1="999.6" y1="319.1" x2="999.6" y2="317.1" stroke="#111" stroke-width="1"/><line x1="1016.0" y1="24.3" x2="1016.0" y2="26.3" stroke="#111" stroke-width="1"/><line x1="1016.0" y1="319.1" x2="1016.0" y2="317.1" stroke="#111" stroke-width="1"/><line x1="1032.4" y1="24.3" x2="1032.4" y2="26.3" stroke="#111" stroke-width="1"/><line x1="1032.4" y1="319.1" x2="1032.4" y2="317.1" stroke="#111" stroke-width="1"/><line x1="1048.8" y1="24.3" x2="1048.8" y2="28.3" stroke="#111" stroke-width="1"/><line x1="1048.8" y1="319.1" x2="1048.8" y2="315.1" stroke="#111" stroke-width="1"/><line x1="1065.2" y1="24.3" x2="1065.2" y2="26.3" stroke="#111" stroke-width="1"/><line x1="1065.2" y1="319.1" x2="1065.2" y2="317.1" stroke="#111" stroke-width="1"/><line x1="1081.6" y1="24.3" x2="1081.6" y2="26.3" stroke="#111" stroke-width="1"/><line x1="1081.6" y1="319.1" x2="1081.6" y2="317.1" stroke="#111" stroke-width="1"/><line x1="1098.0" y1="24.3" x2="1098.0" y2="26.3" stroke="#111" stroke-width="1"/><line x1="1098.0" y1="319.1" x2="1098.0" y2="317.1" stroke="#111" stroke-width="1"/><line x1="1114.4" y1="24.3" x2="1114.4" y2="28.3" stroke="#111" stroke-width="1"/><line x1="1114.4" y1="319.1" x2="1114.4" y2="315.1" stroke="#111" stroke-width="1"/><line x1="1130.8" y1="24.3" x2="1130.8" y2="26.3" stroke="#111" stroke-width="1"/><line x1="1130.8" y1="319.1" x2="1130.8" y2="317.1" stroke="#111" stroke-width="1"/><line x1="1147.2" y1="24.3" x2="1147.2" y2="26.3" stroke="#111" stroke-width="1"/><line x1="1147.2" y1="319.1" x2="1147.2" y2="317.1" stroke="#111" stroke-width="1"/><line x1="1163.6" y1="24.3" x2="1163.6" y2="26.3" stroke="#111" stroke-width="1"/><line x1="1163.6" y1="319.1" x2="1163.6" y2="317.1" stroke="#111" stroke-width="1"/><line x1="1180.0" y1="24.3" x2="1180.0" y2="28.3" stroke="#111" stroke-width="1"/><line x1="1180.0" y1="319.1" x2="1180.0" y2="315.1" stroke="#111" stroke-width="1"/></svg>
<div style="position:absolute;left:850.00px;top:7.10px;width:300px;text-align:center;height:16px;line-height:16px;font-size:12px;white-space:nowrap;transform-origin:50% 0;font-weight:bold;color:#111;">Efficiency Histogram</div>
<div style="position:absolute;left:802.50px;top:304.00px;width:40px;text-align:right;height:16px;line-height:16px;font-size:12px;white-space:nowrap;transform-origin:100% 0;color:#222;">0</div>
<div style="position:absolute;left:802.50px;top:280.67px;width:40px;text-align:right;height:16px;line-height:16px;font-size:12px;white-space:nowrap;transform-origin:100% 0;color:#222;">2</div>
<div style="position:absolute;left:802.50px;top:257.34px;width:40px;text-align:right;height:16px;line-height:16px;font-size:12px;white-space:nowrap;transform-origin:100% 0;color:#222;">4</div>
<div style="position:absolute;left:802.50px;top:234.01px;width:40px;text-align:right;height:16px;line-height:16px;font-size:12px;white-space:nowrap;transform-origin:100% 0;color:#222;">6</div>
<div style="position:absolute;left:802.50px;top:210.68px;width:40px;text-align:right;height:16px;line-height:16px;font-size:12px;white-space:nowrap;transform-origin:100% 0;color:#222;">8</div>
<div style="position:absolute;left:802.50px;top:187.35px;width:40px;text-align:right;height:16px;line-height:16px;font-size:12px;white-space:nowrap;transform-origin:100% 0;color:#222;">10</div>
<div style="position:absolute;left:802.50px;top:164.02px;width:40px;text-align:right;height:16px;line-height:16px;font-size:12px;white-space:nowrap;transform-origin:100% 0;color:#222;">12</div>
<div style="position:absolute;left:802.50px;top:140.69px;width:40px;text-align:right;height:16px;line-height:16px;font-size:12px;white-space:nowrap;transform-origin:100% 0;color:#222;">14</div>
<div style="position:absolute;left:802.50px;top:117.36px;width:40px;text-align:right;height:16px;line-height:16px;font-size:12px;white-space:nowrap;transform-origin:100% 0;color:#222;">16</div>
<div style="position:absolute;left:802.50px;top:94.03px;width:40px;text-align:right;height:16px;line-height:16px;font-size:12px;white-space:nowrap;transform-origin:100% 0;color:#222;">18</div>
<div style="position:absolute;left:802.50px;top:70.70px;width:40px;text-align:right;height:16px;line-height:16px;font-size:12px;white-space:nowrap;transform-origin:100% 0;color:#222;">20</div>
<div style="position:absolute;left:802.50px;top:47.37px;width:40px;text-align:right;height:16px;line-height:16px;font-size:12px;white-space:nowrap;transform-origin:100% 0;color:#222;">22</div>
<div style="position:absolute;left:802.50px;top:24.04px;width:40px;text-align:right;height:16px;line-height:16px;font-size:12px;white-space:nowrap;transform-origin:100% 0;color:#222;">24</div>
<div style="position:absolute;left:832.00px;top:319.00px;width:40px;text-align:center;height:16px;line-height:16px;font-size:12px;white-space:nowrap;transform-origin:50% 0;color:#222;">0</div>
<div style="position:absolute;left:897.60px;top:319.00px;width:40px;text-align:center;height:16px;line-height:16px;font-size:12px;white-space:nowrap;transform-origin:50% 0;color:#222;">20</div>
<div style="position:absolute;left:963.20px;top:319.00px;width:40px;text-align:center;height:16px;line-height:16px;font-size:12px;white-space:nowrap;transform-origin:50% 0;color:#222;">40</div>
<div style="position:absolute;left:1028.80px;top:319.00px;width:40px;text-align:center;height:16px;line-height:16px;font-size:12px;white-space:nowrap;transform-origin:50% 0;color:#222;">60</div>
<div style="position:absolute;left:1094.40px;top:319.00px;width:40px;text-align:center;height:16px;line-height:16px;font-size:12px;white-space:nowrap;transform-origin:50% 0;color:#222;">80</div>
<div style="position:absolute;left:1161.0px;top:319.5px;width:25.5px;height:15px;overflow:hidden;"><div style="position:absolute;left:0;top:0;width:40px;text-align:center;line-height:15px;font-size:12px;color:#222;white-space:nowrap;">100</div></div>
<div style="position:absolute;left:915.00px;top:333.50px;width:200px;text-align:center;height:16px;line-height:16px;font-size:12px;white-space:nowrap;transform-origin:50% 0;color:#222;">E<span style="font-size:9px;position:relative;top:3px;">FRET</span> [%]</div>
<div style="position:absolute;left:739px;top:166px;width:160px;height:16px;line-height:16px;text-align:center;font-size:11.5px;transform:rotate(-90deg);transform-origin:80px 8px;white-space:nowrap;color:#222;">Occur. [Events]</div>
<svg style="position:absolute;left:0;top:0" width="1347" height="713" viewBox="0 0 1347 713"><defs><clipPath id="hcdist"><rect x="855.0" y="382.2" width="332.29999999999995" height="294.40000000000003"/></clipPath></defs><line x1="862.8" y1="382.2" x2="862.8" y2="676.6" stroke="#b4b4b4" stroke-width="1"/><line x1="878.6" y1="382.2" x2="878.6" y2="676.6" stroke="#e8e8e8" stroke-width="1"/><line x1="894.5" y1="382.2" x2="894.5" y2="676.6" stroke="#e8e8e8" stroke-width="1"/><line x1="910.3" y1="382.2" x2="910.3" y2="676.6" stroke="#e8e8e8" stroke-width="1"/><line x1="926.2" y1="382.2" x2="926.2" y2="676.6" stroke="#b4b4b4" stroke-width="1"/><line x1="942.0" y1="382.2" x2="942.0" y2="676.6" stroke="#e8e8e8" stroke-width="1"/><line x1="957.9" y1="382.2" x2="957.9" y2="676.6" stroke="#e8e8e8" stroke-width="1"/><line x1="973.8" y1="382.2" x2="973.8" y2="676.6" stroke="#e8e8e8" stroke-width="1"/><line x1="989.6" y1="382.2" x2="989.6" y2="676.6" stroke="#b4b4b4" stroke-width="1"/><line x1="1005.4" y1="382.2" x2="1005.4" y2="676.6" stroke="#e8e8e8" stroke-width="1"/><line x1="1021.3" y1="382.2" x2="1021.3" y2="676.6" stroke="#e8e8e8" stroke-width="1"/><line x1="1037.1" y1="382.2" x2="1037.1" y2="676.6" stroke="#e8e8e8" stroke-width="1"/><line x1="1053.0" y1="382.2" x2="1053.0" y2="676.6" stroke="#b4b4b4" stroke-width="1"/><line x1="1068.8" y1="382.2" x2="1068.8" y2="676.6" stroke="#e8e8e8" stroke-width="1"/><line x1="1084.7" y1="382.2" x2="1084.7" y2="676.6" stroke="#e8e8e8" stroke-width="1"/><line x1="1100.5" y1="382.2" x2="1100.5" y2="676.6" stroke="#e8e8e8" stroke-width="1"/><line x1="1116.4" y1="382.2" x2="1116.4" y2="676.6" stroke="#b4b4b4" stroke-width="1"/><line x1="1132.2" y1="382.2" x2="1132.2" y2="676.6" stroke="#e8e8e8" stroke-width="1"/><line x1="1148.1" y1="382.2" x2="1148.1" y2="676.6" stroke="#e8e8e8" stroke-width="1"/><line x1="1163.9" y1="382.2" x2="1163.9" y2="676.6" stroke="#e8e8e8" stroke-width="1"/><line x1="1179.8" y1="382.2" x2="1179.8" y2="676.6" stroke="#b4b4b4" stroke-width="1"/><line x1="855.0" y1="670.1" x2="1187.3" y2="670.1" stroke="#b4b4b4" stroke-width="1"/><line x1="855.0" y1="664.8" x2="1187.3" y2="664.8" stroke="#e8e8e8" stroke-width="1"/><line x1="855.0" y1="659.6" x2="1187.3" y2="659.6" stroke="#e8e8e8" stroke-width="1"/><line x1="855.0" y1="654.3" x2="1187.3" y2="654.3" stroke="#e8e8e8" stroke-width="1"/><line x1="855.0" y1="649.1" x2="1187.3" y2="649.1" stroke="#b4b4b4" stroke-width="1"/><line x1="855.0" y1="643.8" x2="1187.3" y2="643.8" stroke="#e8e8e8" stroke-width="1"/><line x1="855.0" y1="638.5" x2="1187.3" y2="638.5" stroke="#e8e8e8" stroke-width="1"/><line x1="855.0" y1="633.3" x2="1187.3" y2="633.3" stroke="#e8e8e8" stroke-width="1"/><line x1="855.0" y1="628.0" x2="1187.3" y2="628.0" stroke="#b4b4b4" stroke-width="1"/><line x1="855.0" y1="622.8" x2="1187.3" y2="622.8" stroke="#e8e8e8" stroke-width="1"/><line x1="855.0" y1="617.5" x2="1187.3" y2="617.5" stroke="#e8e8e8" stroke-width="1"/><line x1="855.0" y1="612.2" x2="1187.3" y2="612.2" stroke="#e8e8e8" stroke-width="1"/><line x1="855.0" y1="607.0" x2="1187.3" y2="607.0" stroke="#b4b4b4" stroke-width="1"/><line x1="855.0" y1="601.7" x2="1187.3" y2="601.7" stroke="#e8e8e8" stroke-width="1"/><line x1="855.0" y1="596.5" x2="1187.3" y2="596.5" stroke="#e8e8e8" stroke-width="1"/><line x1="855.0" y1="591.2" x2="1187.3" y2="591.2" stroke="#e8e8e8" stroke-width="1"/><line x1="855.0" y1="585.9" x2="1187.3" y2="585.9" stroke="#b4b4b4" stroke-width="1"/><line x1="855.0" y1="580.7" x2="1187.3" y2="580.7" stroke="#e8e8e8" stroke-width="1"/><line x1="855.0" y1="575.4" x2="1187.3" y2="575.4" stroke="#e8e8e8" stroke-width="1"/><line x1="855.0" y1="570.2" x2="1187.3" y2="570.2" stroke="#e8e8e8" stroke-width="1"/><line x1="855.0" y1="564.9" x2="1187.3" y2="564.9" stroke="#b4b4b4" stroke-width="1"/><line x1="855.0" y1="559.6" x2="1187.3" y2="559.6" stroke="#e8e8e8" stroke-width="1"/><line x1="855.0" y1="554.4" x2="1187.3" y2="554.4" stroke="#e8e8e8" stroke-width="1"/><line x1="855.0" y1="549.1" x2="1187.3" y2="549.1" stroke="#e8e8e8" stroke-width="1"/><line x1="855.0" y1="543.9" x2="1187.3" y2="543.9" stroke="#b4b4b4" stroke-width="1"/><line x1="855.0" y1="538.6" x2="1187.3" y2="538.6" stroke="#e8e8e8" stroke-width="1"/><line x1="855.0" y1="533.3" x2="1187.3" y2="533.3" stroke="#e8e8e8" stroke-width="1"/><line x1="855.0" y1="528.1" x2="1187.3" y2="528.1" stroke="#e8e8e8" stroke-width="1"/><line x1="855.0" y1="522.8" x2="1187.3" y2="522.8" stroke="#b4b4b4" stroke-width="1"/><line x1="855.0" y1="517.6" x2="1187.3" y2="517.6" stroke="#e8e8e8" stroke-width="1"/><line x1="855.0" y1="512.3" x2="1187.3" y2="512.3" stroke="#e8e8e8" stroke-width="1"/><line x1="855.0" y1="507.0" x2="1187.3" y2="507.0" stroke="#e8e8e8" stroke-width="1"/><line x1="855.0" y1="501.8" x2="1187.3" y2="501.8" stroke="#b4b4b4" stroke-width="1"/><line x1="855.0" y1="496.5" x2="1187.3" y2="496.5" stroke="#e8e8e8" stroke-width="1"/><line x1="855.0" y1="491.3" x2="1187.3" y2="491.3" stroke="#e8e8e8" stroke-width="1"/><line x1="855.0" y1="486.0" x2="1187.3" y2="486.0" stroke="#e8e8e8" stroke-width="1"/><line x1="855.0" y1="480.7" x2="1187.3" y2="480.7" stroke="#b4b4b4" stroke-width="1"/><line x1="855.0" y1="475.5" x2="1187.3" y2="475.5" stroke="#e8e8e8" stroke-width="1"/><line x1="855.0" y1="470.2" x2="1187.3" y2="470.2" stroke="#e8e8e8" stroke-width="1"/><line x1="855.0" y1="465.0" x2="1187.3" y2="465.0" stroke="#e8e8e8" stroke-width="1"/><line x1="855.0" y1="459.7" x2="1187.3" y2="459.7" stroke="#b4b4b4" stroke-width="1"/><line x1="855.0" y1="454.4" x2="1187.3" y2="454.4" stroke="#e8e8e8" stroke-width="1"/><line x1="855.0" y1="449.2" x2="1187.3" y2="449.2" stroke="#e8e8e8" stroke-width="1"/><line x1="855.0" y1="443.9" x2="1187.3" y2="443.9" stroke="#e8e8e8" stroke-width="1"/><line x1="855.0" y1="438.7" x2="1187.3" y2="438.7" stroke="#b4b4b4" stroke-width="1"/><line x1="855.0" y1="433.4" x2="1187.3" y2="433.4" stroke="#e8e8e8" stroke-width="1"/><line x1="855.0" y1="428.1" x2="1187.3" y2="428.1" stroke="#e8e8e8" stroke-width="1"/><line x1="855.0" y1="422.9" x2="1187.3" y2="422.9" stroke="#e8e8e8" stroke-width="1"/><line x1="855.0" y1="417.6" x2="1187.3" y2="417.6" stroke="#b4b4b4" stroke-width="1"/><line x1="855.0" y1="412.4" x2="1187.3" y2="412.4" stroke="#e8e8e8" stroke-width="1"/><line x1="855.0" y1="407.1" x2="1187.3" y2="407.1" stroke="#e8e8e8" stroke-width="1"/><line x1="855.0" y1="401.8" x2="1187.3" y2="401.8" stroke="#e8e8e8" stroke-width="1"/><line x1="855.0" y1="396.6" x2="1187.3" y2="396.6" stroke="#b4b4b4" stroke-width="1"/><line x1="855.0" y1="391.3" x2="1187.3" y2="391.3" stroke="#e8e8e8" stroke-width="1"/><line x1="855.0" y1="386.1" x2="1187.3" y2="386.1" stroke="#e8e8e8" stroke-width="1"/><g clip-path="url(#hcdist)"><rect x="858.74" y="389.22" width="8.13" height="287.38" fill="#22a03b" stroke="#111" stroke-width="1"/><rect x="866.86" y="608.56" width="8.13" height="68.04" fill="#22a03b" stroke="#111" stroke-width="1"/><rect x="874.99" y="670.10" width="8.13" height="6.50" fill="#22a03b" stroke="#111" stroke-width="1"/><rect x="883.12" y="670.10" width="8.13" height="6.50" fill="#22a03b" stroke="#111" stroke-width="1"/><rect x="891.25" y="670.10" width="8.13" height="6.50" fill="#22a03b" stroke="#111" stroke-width="1"/><rect x="899.38" y="670.10" width="8.13" height="6.50" fill="#22a03b" stroke="#111" stroke-width="1"/><rect x="907.51" y="670.10" width="8.13" height="6.50" fill="#22a03b" stroke="#111" stroke-width="1"/><rect x="915.63" y="670.10" width="8.13" height="6.50" fill="#22a03b" stroke="#111" stroke-width="1"/><rect x="923.76" y="670.10" width="8.13" height="6.50" fill="#22a03b" stroke="#111" stroke-width="1"/><rect x="931.89" y="670.10" width="8.13" height="6.50" fill="#22a03b" stroke="#111" stroke-width="1"/><rect x="940.02" y="670.10" width="8.13" height="6.50" fill="#22a03b" stroke="#111" stroke-width="1"/><rect x="948.15" y="670.10" width="8.13" height="6.50" fill="#22a03b" stroke="#111" stroke-width="1"/><rect x="956.27" y="670.10" width="8.13" height="6.50" fill="#22a03b" stroke="#111" stroke-width="1"/><rect x="964.40" y="670.10" width="8.13" height="6.50" fill="#22a03b" stroke="#111" stroke-width="1"/><rect x="972.53" y="670.10" width="8.13" height="6.50" fill="#22a03b" stroke="#111" stroke-width="1"/><rect x="980.66" y="670.10" width="8.13" height="6.50" fill="#22a03b" stroke="#111" stroke-width="1"/><rect x="988.79" y="670.10" width="8.13" height="6.50" fill="#22a03b" stroke="#111" stroke-width="1"/><rect x="996.92" y="670.10" width="8.13" height="6.50" fill="#22a03b" stroke="#111" stroke-width="1"/><rect x="1005.04" y="670.10" width="8.13" height="6.50" fill="#22a03b" stroke="#111" stroke-width="1"/><rect x="1013.17" y="670.10" width="8.13" height="6.50" fill="#22a03b" stroke="#111" stroke-width="1"/><rect x="1021.30" y="670.10" width="8.13" height="6.50" fill="#22a03b" stroke="#111" stroke-width="1"/><rect x="1029.43" y="670.10" width="8.13" height="6.50" fill="#22a03b" stroke="#111" stroke-width="1"/><rect x="1037.56" y="670.10" width="8.13" height="6.50" fill="#22a03b" stroke="#111" stroke-width="1"/><rect x="1045.68" y="670.10" width="8.13" height="6.50" fill="#22a03b" stroke="#111" stroke-width="1"/><rect x="1053.81" y="670.10" width="8.13" height="6.50" fill="#22a03b" stroke="#111" stroke-width="1"/><rect x="1061.94" y="670.10" width="8.13" height="6.50" fill="#22a03b" stroke="#111" stroke-width="1"/><rect x="1070.07" y="670.10" width="8.13" height="6.50" fill="#22a03b" stroke="#111" stroke-width="1"/><rect x="1078.20" y="670.10" width="8.13" height="6.50" fill="#22a03b" stroke="#111" stroke-width="1"/><rect x="1086.33" y="670.10" width="8.13" height="6.50" fill="#22a03b" stroke="#111" stroke-width="1"/><rect x="1094.45" y="670.10" width="8.13" height="6.50" fill="#22a03b" stroke="#111" stroke-width="1"/><rect x="1102.58" y="670.10" width="8.13" height="6.50" fill="#22a03b" stroke="#111" stroke-width="1"/><rect x="1110.71" y="670.10" width="8.13" height="6.50" fill="#22a03b" stroke="#111" stroke-width="1"/><rect x="1118.84" y="670.10" width="8.13" height="6.50" fill="#22a03b" stroke="#111" stroke-width="1"/><rect x="1126.97" y="670.10" width="8.13" height="6.50" fill="#22a03b" stroke="#111" stroke-width="1"/><rect x="1135.09" y="670.10" width="8.13" height="6.50" fill="#22a03b" stroke="#111" stroke-width="1"/><rect x="1143.22" y="670.10" width="8.13" height="6.50" fill="#22a03b" stroke="#111" stroke-width="1"/><rect x="1151.35" y="670.10" width="8.13" height="6.50" fill="#22a03b" stroke="#111" stroke-width="1"/><rect x="1159.48" y="670.10" width="8.13" height="6.50" fill="#22a03b" stroke="#111" stroke-width="1"/><rect x="1167.61" y="670.10" width="8.13" height="6.50" fill="#22a03b" stroke="#111" stroke-width="1"/><rect x="1175.74" y="670.10" width="8.13" height="6.50" fill="#22a03b" stroke="#111" stroke-width="1"/></g><rect x="855.0" y="382.2" width="332.29999999999995" height="294.40000000000003" fill="none" stroke="#333" stroke-width="1.2"/><line x1="855.0" y1="670.1" x2="856.6" y2="670.1" stroke="#333" stroke-width="1"/><line x1="855.0" y1="664.8" x2="856.6" y2="664.8" stroke="#333" stroke-width="1"/><line x1="855.0" y1="659.6" x2="856.6" y2="659.6" stroke="#333" stroke-width="1"/><line x1="855.0" y1="654.3" x2="856.6" y2="654.3" stroke="#333" stroke-width="1"/><line x1="855.0" y1="649.1" x2="856.6" y2="649.1" stroke="#333" stroke-width="1"/><line x1="855.0" y1="643.8" x2="856.6" y2="643.8" stroke="#333" stroke-width="1"/><line x1="855.0" y1="638.5" x2="856.6" y2="638.5" stroke="#333" stroke-width="1"/><line x1="855.0" y1="633.3" x2="856.6" y2="633.3" stroke="#333" stroke-width="1"/><line x1="855.0" y1="628.0" x2="856.6" y2="628.0" stroke="#333" stroke-width="1"/><line x1="855.0" y1="622.8" x2="856.6" y2="622.8" stroke="#333" stroke-width="1"/><line x1="855.0" y1="617.5" x2="856.6" y2="617.5" stroke="#333" stroke-width="1"/><line x1="855.0" y1="612.2" x2="856.6" y2="612.2" stroke="#333" stroke-width="1"/><line x1="855.0" y1="607.0" x2="856.6" y2="607.0" stroke="#333" stroke-width="1"/><line x1="855.0" y1="601.7" x2="856.6" y2="601.7" stroke="#333" stroke-width="1"/><line x1="855.0" y1="596.5" x2="856.6" y2="596.5" stroke="#333" stroke-width="1"/><line x1="855.0" y1="591.2" x2="856.6" y2="591.2" stroke="#333" stroke-width="1"/><line x1="855.0" y1="585.9" x2="856.6" y2="585.9" stroke="#333" stroke-width="1"/><line x1="855.0" y1="580.7" x2="856.6" y2="580.7" stroke="#333" stroke-width="1"/><line x1="855.0" y1="575.4" x2="856.6" y2="575.4" stroke="#333" stroke-width="1"/><line x1="855.0" y1="570.2" x2="856.6" y2="570.2" stroke="#333" stroke-width="1"/><line x1="855.0" y1="564.9" x2="856.6" y2="564.9" stroke="#333" stroke-width="1"/><line x1="855.0" y1="559.6" x2="856.6" y2="559.6" stroke="#333" stroke-width="1"/><line x1="855.0" y1="554.4" x2="856.6" y2="554.4" stroke="#333" stroke-width="1"/><line x1="855.0" y1="549.1" x2="856.6" y2="549.1" stroke="#333" stroke-width="1"/><line x1="855.0" y1="543.9" x2="856.6" y2="543.9" stroke="#333" stroke-width="1"/><line x1="855.0" y1="538.6" x2="856.6" y2="538.6" stroke="#333" stroke-width="1"/><line x1="855.0" y1="533.3" x2="856.6" y2="533.3" stroke="#333" stroke-width="1"/><line x1="855.0" y1="528.1" x2="856.6" y2="528.1" stroke="#333" stroke-width="1"/><line x1="855.0" y1="522.8" x2="856.6" y2="522.8" stroke="#333" stroke-width="1"/><line x1="855.0" y1="517.6" x2="856.6" y2="517.6" stroke="#333" stroke-width="1"/><line x1="855.0" y1="512.3" x2="856.6" y2="512.3" stroke="#333" stroke-width="1"/><line x1="855.0" y1="507.0" x2="856.6" y2="507.0" stroke="#333" stroke-width="1"/><line x1="855.0" y1="501.8" x2="856.6" y2="501.8" stroke="#333" stroke-width="1"/><line x1="855.0" y1="496.5" x2="856.6" y2="496.5" stroke="#333" stroke-width="1"/><line x1="855.0" y1="491.3" x2="856.6" y2="491.3" stroke="#333" stroke-width="1"/><line x1="855.0" y1="486.0" x2="856.6" y2="486.0" stroke="#333" stroke-width="1"/><line x1="855.0" y1="480.7" x2="856.6" y2="480.7" stroke="#333" stroke-width="1"/><line x1="855.0" y1="475.5" x2="856.6" y2="475.5" stroke="#333" stroke-width="1"/><line x1="855.0" y1="470.2" x2="856.6" y2="470.2" stroke="#333" stroke-width="1"/><line x1="855.0" y1="465.0" x2="856.6" y2="465.0" stroke="#333" stroke-width="1"/><line x1="855.0" y1="459.7" x2="856.6" y2="459.7" stroke="#333" stroke-width="1"/><line x1="855.0" y1="454.4" x2="856.6" y2="454.4" stroke="#333" stroke-width="1"/><line x1="855.0" y1="449.2" x2="856.6" y2="449.2" stroke="#333" stroke-width="1"/><line x1="855.0" y1="443.9" x2="856.6" y2="443.9" stroke="#333" stroke-width="1"/><line x1="855.0" y1="438.7" x2="856.6" y2="438.7" stroke="#333" stroke-width="1"/><line x1="855.0" y1="433.4" x2="856.6" y2="433.4" stroke="#333" stroke-width="1"/><line x1="855.0" y1="428.1" x2="856.6" y2="428.1" stroke="#333" stroke-width="1"/><line x1="855.0" y1="422.9" x2="856.6" y2="422.9" stroke="#333" stroke-width="1"/><line x1="855.0" y1="417.6" x2="856.6" y2="417.6" stroke="#333" stroke-width="1"/><line x1="855.0" y1="412.4" x2="856.6" y2="412.4" stroke="#333" stroke-width="1"/><line x1="855.0" y1="407.1" x2="856.6" y2="407.1" stroke="#333" stroke-width="1"/><line x1="855.0" y1="401.8" x2="856.6" y2="401.8" stroke="#333" stroke-width="1"/><line x1="855.0" y1="396.6" x2="856.6" y2="396.6" stroke="#333" stroke-width="1"/><line x1="855.0" y1="391.3" x2="856.6" y2="391.3" stroke="#333" stroke-width="1"/><line x1="855.0" y1="386.1" x2="856.6" y2="386.1" stroke="#333" stroke-width="1"/><line x1="855.0" y1="670.1" x2="859.0" y2="670.1" stroke="#111" stroke-width="1"/><line x1="855.0" y1="649.1" x2="859.0" y2="649.1" stroke="#111" stroke-width="1"/><line x1="855.0" y1="628.0" x2="859.0" y2="628.0" stroke="#111" stroke-width="1"/><line x1="855.0" y1="607.0" x2="859.0" y2="607.0" stroke="#111" stroke-width="1"/><line x1="855.0" y1="585.9" x2="859.0" y2="585.9" stroke="#111" stroke-width="1"/><line x1="855.0" y1="564.9" x2="859.0" y2="564.9" stroke="#111" stroke-width="1"/><line x1="855.0" y1="543.9" x2="859.0" y2="543.9" stroke="#111" stroke-width="1"/><line x1="855.0" y1="522.8" x2="859.0" y2="522.8" stroke="#111" stroke-width="1"/><line x1="855.0" y1="501.8" x2="859.0" y2="501.8" stroke="#111" stroke-width="1"/><line x1="855.0" y1="480.7" x2="859.0" y2="480.7" stroke="#111" stroke-width="1"/><line x1="855.0" y1="459.7" x2="859.0" y2="459.7" stroke="#111" stroke-width="1"/><line x1="855.0" y1="438.7" x2="859.0" y2="438.7" stroke="#111" stroke-width="1"/><line x1="855.0" y1="417.6" x2="859.0" y2="417.6" stroke="#111" stroke-width="1"/><line x1="855.0" y1="396.6" x2="859.0" y2="396.6" stroke="#111" stroke-width="1"/><line x1="862.8" y1="382.2" x2="862.8" y2="386.2" stroke="#111" stroke-width="1"/><line x1="862.8" y1="676.6" x2="862.8" y2="672.6" stroke="#111" stroke-width="1"/><line x1="878.6" y1="382.2" x2="878.6" y2="384.2" stroke="#111" stroke-width="1"/><line x1="878.6" y1="676.6" x2="878.6" y2="674.6" stroke="#111" stroke-width="1"/><line x1="894.5" y1="382.2" x2="894.5" y2="384.2" stroke="#111" stroke-width="1"/><line x1="894.5" y1="676.6" x2="894.5" y2="674.6" stroke="#111" stroke-width="1"/><line x1="910.3" y1="382.2" x2="910.3" y2="384.2" stroke="#111" stroke-width="1"/><line x1="910.3" y1="676.6" x2="910.3" y2="674.6" stroke="#111" stroke-width="1"/><line x1="926.2" y1="382.2" x2="926.2" y2="386.2" stroke="#111" stroke-width="1"/><line x1="926.2" y1="676.6" x2="926.2" y2="672.6" stroke="#111" stroke-width="1"/><line x1="942.0" y1="382.2" x2="942.0" y2="384.2" stroke="#111" stroke-width="1"/><line x1="942.0" y1="676.6" x2="942.0" y2="674.6" stroke="#111" stroke-width="1"/><line x1="957.9" y1="382.2" x2="957.9" y2="384.2" stroke="#111" stroke-width="1"/><line x1="957.9" y1="676.6" x2="957.9" y2="674.6" stroke="#111" stroke-width="1"/><line x1="973.8" y1="382.2" x2="973.8" y2="384.2" stroke="#111" stroke-width="1"/><line x1="973.8" y1="676.6" x2="973.8" y2="674.6" stroke="#111" stroke-width="1"/><line x1="989.6" y1="382.2" x2="989.6" y2="386.2" stroke="#111" stroke-width="1"/><line x1="989.6" y1="676.6" x2="989.6" y2="672.6" stroke="#111" stroke-width="1"/><line x1="1005.4" y1="382.2" x2="1005.4" y2="384.2" stroke="#111" stroke-width="1"/><line x1="1005.4" y1="676.6" x2="1005.4" y2="674.6" stroke="#111" stroke-width="1"/><line x1="1021.3" y1="382.2" x2="1021.3" y2="384.2" stroke="#111" stroke-width="1"/><line x1="1021.3" y1="676.6" x2="1021.3" y2="674.6" stroke="#111" stroke-width="1"/><line x1="1037.1" y1="382.2" x2="1037.1" y2="384.2" stroke="#111" stroke-width="1"/><line x1="1037.1" y1="676.6" x2="1037.1" y2="674.6" stroke="#111" stroke-width="1"/><line x1="1053.0" y1="382.2" x2="1053.0" y2="386.2" stroke="#111" stroke-width="1"/><line x1="1053.0" y1="676.6" x2="1053.0" y2="672.6" stroke="#111" stroke-width="1"/><line x1="1068.8" y1="382.2" x2="1068.8" y2="384.2" stroke="#111" stroke-width="1"/><line x1="1068.8" y1="676.6" x2="1068.8" y2="674.6" stroke="#111" stroke-width="1"/><line x1="1084.7" y1="382.2" x2="1084.7" y2="384.2" stroke="#111" stroke-width="1"/><line x1="1084.7" y1="676.6" x2="1084.7" y2="674.6" stroke="#111" stroke-width="1"/><line x1="1100.5" y1="382.2" x2="1100.5" y2="384.2" stroke="#111" stroke-width="1"/><line x1="1100.5" y1="676.6" x2="1100.5" y2="674.6" stroke="#111" stroke-width="1"/><line x1="1116.4" y1="382.2" x2="1116.4" y2="386.2" stroke="#111" stroke-width="1"/><line x1="1116.4" y1="676.6" x2="1116.4" y2="672.6" stroke="#111" stroke-width="1"/><line x1="1132.2" y1="382.2" x2="1132.2" y2="384.2" stroke="#111" stroke-width="1"/><line x1="1132.2" y1="676.6" x2="1132.2" y2="674.6" stroke="#111" stroke-width="1"/><line x1="1148.1" y1="382.2" x2="1148.1" y2="384.2" stroke="#111" stroke-width="1"/><line x1="1148.1" y1="676.6" x2="1148.1" y2="674.6" stroke="#111" stroke-width="1"/><line x1="1163.9" y1="382.2" x2="1163.9" y2="384.2" stroke="#111" stroke-width="1"/><line x1="1163.9" y1="676.6" x2="1163.9" y2="674.6" stroke="#111" stroke-width="1"/><line x1="1179.8" y1="382.2" x2="1179.8" y2="386.2" stroke="#111" stroke-width="1"/><line x1="1179.8" y1="676.6" x2="1179.8" y2="672.6" stroke="#111" stroke-width="1"/></svg>
<div style="position:absolute;left:850.00px;top:365.00px;width:300px;text-align:center;height:16px;line-height:16px;font-size:12px;white-space:nowrap;transform-origin:50% 0;font-weight:bold;color:#111;">Distance Histogram</div>
<div style="position:absolute;left:813.00px;top:662.10px;width:40px;text-align:right;height:16px;line-height:16px;font-size:12px;white-space:nowrap;transform-origin:100% 0;color:#222;">0,00</div>
<div style="position:absolute;left:813.00px;top:641.06px;width:40px;text-align:right;height:16px;line-height:16px;font-size:12px;white-space:nowrap;transform-origin:100% 0;color:#222;">0,04</div>
<div style="position:absolute;left:813.00px;top:620.02px;width:40px;text-align:right;height:16px;line-height:16px;font-size:12px;white-space:nowrap;transform-origin:100% 0;color:#222;">0,08</div>
<div style="position:absolute;left:813.00px;top:598.98px;width:40px;text-align:right;height:16px;line-height:16px;font-size:12px;white-space:nowrap;transform-origin:100% 0;color:#222;">0,12</div>
<div style="position:absolute;left:813.00px;top:577.94px;width:40px;text-align:right;height:16px;line-height:16px;font-size:12px;white-space:nowrap;transform-origin:100% 0;color:#222;">0,16</div>
<div style="position:absolute;left:813.00px;top:556.90px;width:40px;text-align:right;height:16px;line-height:16px;font-size:12px;white-space:nowrap;transform-origin:100% 0;color:#222;">0,20</div>
<div style="position:absolute;left:813.00px;top:535.86px;width:40px;text-align:right;height:16px;line-height:16px;font-size:12px;white-space:nowrap;transform-origin:100% 0;color:#222;">0,24</div>
<div style="position:absolute;left:813.00px;top:514.82px;width:40px;text-align:right;height:16px;line-height:16px;font-size:12px;white-space:nowrap;transform-origin:100% 0;color:#222;">0,28</div>
<div style="position:absolute;left:813.00px;top:493.78px;width:40px;text-align:right;height:16px;line-height:16px;font-size:12px;white-space:nowrap;transform-origin:100% 0;color:#222;">0,32</div>
<div style="position:absolute;left:813.00px;top:472.74px;width:40px;text-align:right;height:16px;line-height:16px;font-size:12px;white-space:nowrap;transform-origin:100% 0;color:#222;">0,36</div>
<div style="position:absolute;left:813.00px;top:451.70px;width:40px;text-align:right;height:16px;line-height:16px;font-size:12px;white-space:nowrap;transform-origin:100% 0;color:#222;">0,40</div>
<div style="position:absolute;left:813.00px;top:430.66px;width:40px;text-align:right;height:16px;line-height:16px;font-size:12px;white-space:nowrap;transform-origin:100% 0;color:#222;">0,44</div>
<div style="position:absolute;left:813.00px;top:409.62px;width:40px;text-align:right;height:16px;line-height:16px;font-size:12px;white-space:nowrap;transform-origin:100% 0;color:#222;">0,48</div>
<div style="position:absolute;left:813.00px;top:388.58px;width:40px;text-align:right;height:16px;line-height:16px;font-size:12px;white-space:nowrap;transform-origin:100% 0;color:#222;">0,52</div>
<div style="position:absolute;left:842.80px;top:676.50px;width:40px;text-align:center;height:16px;line-height:16px;font-size:12px;white-space:nowrap;transform-origin:50% 0;color:#222;">0</div>
<div style="position:absolute;left:906.20px;top:676.50px;width:40px;text-align:center;height:16px;line-height:16px;font-size:12px;white-space:nowrap;transform-origin:50% 0;color:#222;">20</div>
<div style="position:absolute;left:969.60px;top:676.50px;width:40px;text-align:center;height:16px;line-height:16px;font-size:12px;white-space:nowrap;transform-origin:50% 0;color:#222;">40</div>
<div style="position:absolute;left:1033.00px;top:676.50px;width:40px;text-align:center;height:16px;line-height:16px;font-size:12px;white-space:nowrap;transform-origin:50% 0;color:#222;">60</div>
<div style="position:absolute;left:1096.40px;top:676.50px;width:40px;text-align:center;height:16px;line-height:16px;font-size:12px;white-space:nowrap;transform-origin:50% 0;color:#222;">80</div>
<div style="position:absolute;left:1160.8px;top:677.0px;width:25.7px;height:15px;overflow:hidden;"><div style="position:absolute;left:0;top:0;width:40px;text-align:center;line-height:15px;font-size:12px;color:#222;white-space:nowrap;">100</div></div>
<div style="position:absolute;left:920.00px;top:691.20px;width:200px;text-align:center;height:16px;line-height:16px;font-size:12px;white-space:nowrap;transform-origin:50% 0;color:#222;">Distance [Ro]</div>
<div style="position:absolute;left:739px;top:522px;width:160px;height:16px;line-height:16px;text-align:center;font-size:11.5px;transform:rotate(-90deg);transform-origin:80px 8px;white-space:nowrap;color:#222;">Occur. [10 <span style="font-size:8px;position:relative;top:-3px">3</span> Events]</div>
<div style="position:absolute;left:1195px;top:2px;width:152px;height:711px;background:#e0e8dd;"></div>
<div style="position:absolute;left:1344px;top:0px;width:2px;height:713px;background:#a4aaa2;"></div>
<div style="position:absolute;left:1199px;top:12.4px;width:137px;height:79px;border:2px solid #8a9088;"></div>
<div style="position:absolute;left:1205px;top:4.0px;height:14px;line-height:14px;padding:0 1px;background:#e0e8dd;font-size:11px;transform-origin:0 0;transform:scaleX(0.89);">E{_FRET}</div>
<div style="position:absolute;left:1204px;top:24.30px;height:15px;line-height:15px;font-size:11px;white-space:nowrap;transform-origin:0 0;transform:scaleX(0.89);">Min:</div>
<div style="position:absolute;left:1234px;top:23px;width:84px;height:16px;border:1px solid #8f958d;background:#fff;"></div>
<div style="position:absolute;left:1232.00px;top:24.50px;width:86px;text-align:right;height:15px;line-height:15px;font-size:11px;white-space:nowrap;transform-origin:100% 0;transform:scaleX(0.89);">0,0 %</div>
<div style="position:absolute;left:1320px;top:23.0px;width:13px;height:7.0px;border:1px solid #b3b9b1;border-radius:2px;background:linear-gradient(#f0f3ee,#dce2da);"></div>
<div style="position:absolute;left:1324.0px;top:25.5px;width:0;height:0;border-left:3.5px solid transparent;border-right:3.5px solid transparent;border-bottom:3.5px solid #111;"></div>
<div style="position:absolute;left:1320px;top:32.0px;width:13px;height:7.0px;border:1px solid #b3b9b1;border-radius:2px;background:linear-gradient(#f0f3ee,#dce2da);"></div>
<div style="position:absolute;left:1324.0px;top:35.0px;width:0;height:0;border-left:3.5px solid transparent;border-right:3.5px solid transparent;border-top:3.5px solid #111;"></div>
<div style="position:absolute;left:1204px;top:47.50px;height:15px;line-height:15px;font-size:11px;white-space:nowrap;transform-origin:0 0;transform:scaleX(0.89);">Max:</div>
<div style="position:absolute;left:1234px;top:46px;width:84px;height:16px;border:1px solid #8f958d;background:#fff;"></div>
<div style="position:absolute;left:1232.00px;top:47.50px;width:86px;text-align:right;height:15px;line-height:15px;font-size:11px;white-space:nowrap;transform-origin:100% 0;transform:scaleX(0.89);">100,0 %</div>
<div style="position:absolute;left:1320px;top:46.0px;width:13px;height:7.0px;border:1px solid #b3b9b1;border-radius:2px;background:linear-gradient(#f0f3ee,#dce2da);"></div>
<div style="position:absolute;left:1324.0px;top:48.5px;width:0;height:0;border-left:3.5px solid transparent;border-right:3.5px solid transparent;border-bottom:3.5px solid #111;"></div>
<div style="position:absolute;left:1320px;top:55.0px;width:13px;height:7.0px;border:1px solid #b3b9b1;border-radius:2px;background:linear-gradient(#f0f3ee,#dce2da);"></div>
<div style="position:absolute;left:1324.0px;top:58.0px;width:0;height:0;border-left:3.5px solid transparent;border-right:3.5px solid transparent;border-top:3.5px solid #111;"></div>
<div style="position:absolute;left:1204px;top:71.00px;height:15px;line-height:15px;font-size:11px;white-space:nowrap;transform-origin:0 0;transform:scaleX(0.89);">Smpl. Pts.:</div>
<div style="position:absolute;left:1264px;top:70px;width:54px;height:16px;border:1px solid #8f958d;background:#fff;"></div>
<div style="position:absolute;left:1251.00px;top:71.50px;width:56px;text-align:right;height:15px;line-height:15px;font-size:11px;white-space:nowrap;transform-origin:100% 0;transform:scaleX(0.89);">40</div>
<div style="position:absolute;left:1320px;top:70.0px;width:13px;height:7.0px;border:1px solid #b3b9b1;border-radius:2px;background:linear-gradient(#f0f3ee,#dce2da);"></div>
<div style="position:absolute;left:1324.0px;top:72.5px;width:0;height:0;border-left:3.5px solid transparent;border-right:3.5px solid transparent;border-bottom:3.5px solid #111;"></div>
<div style="position:absolute;left:1320px;top:79.0px;width:13px;height:7.0px;border:1px solid #b3b9b1;border-radius:2px;background:linear-gradient(#f0f3ee,#dce2da);"></div>
<div style="position:absolute;left:1324.0px;top:82.0px;width:0;height:0;border-left:3.5px solid transparent;border-right:3.5px solid transparent;border-top:3.5px solid #111;"></div>
<div style="position:absolute;left:1199px;top:369.4px;width:137px;height:79px;border:2px solid #8a9088;"></div>
<div style="position:absolute;left:1205px;top:361.0px;height:14px;line-height:14px;padding:0 1px;background:#e0e8dd;font-size:11px;transform-origin:0 0;transform:scaleX(0.89);">Distance</div>
<div style="position:absolute;left:1204px;top:381.30px;height:15px;line-height:15px;font-size:11px;white-space:nowrap;transform-origin:0 0;transform:scaleX(0.89);">Min:</div>
<div style="position:absolute;left:1234px;top:380px;width:84px;height:16px;border:1px solid #8f958d;background:#fff;"></div>
<div style="position:absolute;left:1232.00px;top:381.50px;width:86px;text-align:right;height:15px;line-height:15px;font-size:11px;white-space:nowrap;transform-origin:100% 0;transform:scaleX(0.89);">0,0 Rc</div>
<div style="position:absolute;left:1320px;top:380.0px;width:13px;height:7.0px;border:1px solid #b3b9b1;border-radius:2px;background:linear-gradient(#f0f3ee,#dce2da);"></div>
<div style="position:absolute;left:1324.0px;top:382.5px;width:0;height:0;border-left:3.5px solid transparent;border-right:3.5px solid transparent;border-bottom:3.5px solid #111;"></div>
<div style="position:absolute;left:1320px;top:389.0px;width:13px;height:7.0px;border:1px solid #b3b9b1;border-radius:2px;background:linear-gradient(#f0f3ee,#dce2da);"></div>
<div style="position:absolute;left:1324.0px;top:392.0px;width:0;height:0;border-left:3.5px solid transparent;border-right:3.5px solid transparent;border-top:3.5px solid #111;"></div>
<div style="position:absolute;left:1204px;top:404.50px;height:15px;line-height:15px;font-size:11px;white-space:nowrap;transform-origin:0 0;transform:scaleX(0.89);">Max:</div>
<div style="position:absolute;left:1234px;top:403px;width:84px;height:16px;border:1px solid #8f958d;background:#fff;"></div>
<div style="position:absolute;left:1232.00px;top:404.50px;width:86px;text-align:right;height:15px;line-height:15px;font-size:11px;white-space:nowrap;transform-origin:100% 0;transform:scaleX(0.89);">100,0 Rc</div>
<div style="position:absolute;left:1320px;top:403.0px;width:13px;height:7.0px;border:1px solid #b3b9b1;border-radius:2px;background:linear-gradient(#f0f3ee,#dce2da);"></div>
<div style="position:absolute;left:1324.0px;top:405.5px;width:0;height:0;border-left:3.5px solid transparent;border-right:3.5px solid transparent;border-bottom:3.5px solid #111;"></div>
<div style="position:absolute;left:1320px;top:412.0px;width:13px;height:7.0px;border:1px solid #b3b9b1;border-radius:2px;background:linear-gradient(#f0f3ee,#dce2da);"></div>
<div style="position:absolute;left:1324.0px;top:415.0px;width:0;height:0;border-left:3.5px solid transparent;border-right:3.5px solid transparent;border-top:3.5px solid #111;"></div>
<div style="position:absolute;left:1204px;top:428.00px;height:15px;line-height:15px;font-size:11px;white-space:nowrap;transform-origin:0 0;transform:scaleX(0.89);">Smpl. Pts.:</div>
<div style="position:absolute;left:1264px;top:427px;width:54px;height:16px;border:1px solid #8f958d;background:#fff;"></div>
<div style="position:absolute;left:1251.00px;top:428.50px;width:56px;text-align:right;height:15px;line-height:15px;font-size:11px;white-space:nowrap;transform-origin:100% 0;transform:scaleX(0.89);">40</div>
<div style="position:absolute;left:1320px;top:427.0px;width:13px;height:7.0px;border:1px solid #b3b9b1;border-radius:2px;background:linear-gradient(#f0f3ee,#dce2da);"></div>
<div style="position:absolute;left:1324.0px;top:429.5px;width:0;height:0;border-left:3.5px solid transparent;border-right:3.5px solid transparent;border-bottom:3.5px solid #111;"></div>
<div style="position:absolute;left:1320px;top:436.0px;width:13px;height:7.0px;border:1px solid #b3b9b1;border-radius:2px;background:linear-gradient(#f0f3ee,#dce2da);"></div>
<div style="position:absolute;left:1324.0px;top:439.0px;width:0;height:0;border-left:3.5px solid transparent;border-right:3.5px solid transparent;border-top:3.5px solid #111;"></div>
<div style="position:absolute;left:1199px;top:251.4px;width:139px;height:17.49999999999997px;border:1px solid #9da39b;border-radius:3px;background:linear-gradient(#e9eee7 0%,#e4e9e2 50%,#d3d9d1 58%,#d6dcd4 100%);box-shadow:0 1px 0 #b9bfb7;"></div>
<div style="position:absolute;left:1189.00px;top:253.15px;width:161px;text-align:center;height:15px;line-height:15px;font-size:11px;white-space:nowrap;transform-origin:50% 0;transform:scaleX(0.89);color:#1e1e1e;">Recalculate Histogram</div>
<div style="position:absolute;left:1199px;top:274.7px;width:139px;height:17.5px;border:1px solid #9da39b;border-radius:3px;background:linear-gradient(#e9eee7 0%,#e4e9e2 50%,#d3d9d1 58%,#d6dcd4 100%);box-shadow:0 1px 0 #b9bfb7;"></div>
<div style="position:absolute;left:1189.00px;top:276.45px;width:161px;text-align:center;height:15px;line-height:15px;font-size:11px;white-space:nowrap;transform-origin:50% 0;transform:scaleX(0.89);color:#1e1e1e;">Optimize View</div>
<div style="position:absolute;left:1199px;top:298.0px;width:139px;height:17.5px;border:1px solid #9da39b;border-radius:3px;background:linear-gradient(#e9eee7 0%,#e4e9e2 50%,#d3d9d1 58%,#d6dcd4 100%);box-shadow:0 1px 0 #b9bfb7;"></div>
<div style="position:absolute;left:1189.00px;top:299.75px;width:161px;text-align:center;height:15px;line-height:15px;font-size:11px;white-space:nowrap;transform-origin:50% 0;transform:scaleX(0.89);color:#1e1e1e;">Autoscale Histogram</div>
<div style="position:absolute;left:1199px;top:321.3px;width:139px;height:17.5px;border:1px solid #9da39b;border-radius:3px;background:linear-gradient(#e9eee7 0%,#e4e9e2 50%,#d3d9d1 58%,#d6dcd4 100%);box-shadow:0 1px 0 #b9bfb7;"></div>
<div style="position:absolute;left:1189.00px;top:323.05px;width:161px;text-align:center;height:15px;line-height:15px;font-size:11px;white-space:nowrap;transform-origin:50% 0;transform:scaleX(0.89);color:#1e1e1e;">Show All Events</div>
<div style="position:absolute;left:1199px;top:609.0px;width:139px;height:17.5px;border:1px solid #9da39b;border-radius:3px;background:linear-gradient(#e9eee7 0%,#e4e9e2 50%,#d3d9d1 58%,#d6dcd4 100%);box-shadow:0 1px 0 #b9bfb7;"></div>
<div style="position:absolute;left:1189.00px;top:610.75px;width:161px;text-align:center;height:15px;line-height:15px;font-size:11px;white-space:nowrap;transform-origin:50% 0;transform:scaleX(0.89);color:#1e1e1e;">Recalculate Histogram</div>
<div style="position:absolute;left:1199px;top:632.3px;width:139px;height:17.5px;border:1px solid #9da39b;border-radius:3px;background:linear-gradient(#e9eee7 0%,#e4e9e2 50%,#d3d9d1 58%,#d6dcd4 100%);box-shadow:0 1px 0 #b9bfb7;"></div>
<div style="position:absolute;left:1189.00px;top:634.05px;width:161px;text-align:center;height:15px;line-height:15px;font-size:11px;white-space:nowrap;transform-origin:50% 0;transform:scaleX(0.89);color:#1e1e1e;">Optimize View</div>
<div style="position:absolute;left:1199px;top:655.6px;width:139px;height:17.5px;border:1px solid #9da39b;border-radius:3px;background:linear-gradient(#e9eee7 0%,#e4e9e2 50%,#d3d9d1 58%,#d6dcd4 100%);box-shadow:0 1px 0 #b9bfb7;"></div>
<div style="position:absolute;left:1189.00px;top:657.35px;width:161px;text-align:center;height:15px;line-height:15px;font-size:11px;white-space:nowrap;transform-origin:50% 0;transform:scaleX(0.89);color:#1e1e1e;">Autoscale Histogram</div>
<div style="position:absolute;left:1199px;top:678.9px;width:139px;height:17.5px;border:1px solid #9da39b;border-radius:3px;background:linear-gradient(#e9eee7 0%,#e4e9e2 50%,#d3d9d1 58%,#d6dcd4 100%);box-shadow:0 1px 0 #b9bfb7;"></div>
<div style="position:absolute;left:1189.00px;top:680.65px;width:161px;text-align:center;height:15px;line-height:15px;font-size:11px;white-space:nowrap;transform-origin:50% 0;transform:scaleX(0.89);color:#1e1e1e;">Show All Events</div>
<div style="position:absolute;left:805px;top:708px;width:390px;height:5px;background:#e0e8dd;"></div>
<div style="position:absolute;left:150px;top:0px;width:1195px;height:2px;background:#9ba199;"></div>
</body></html>
